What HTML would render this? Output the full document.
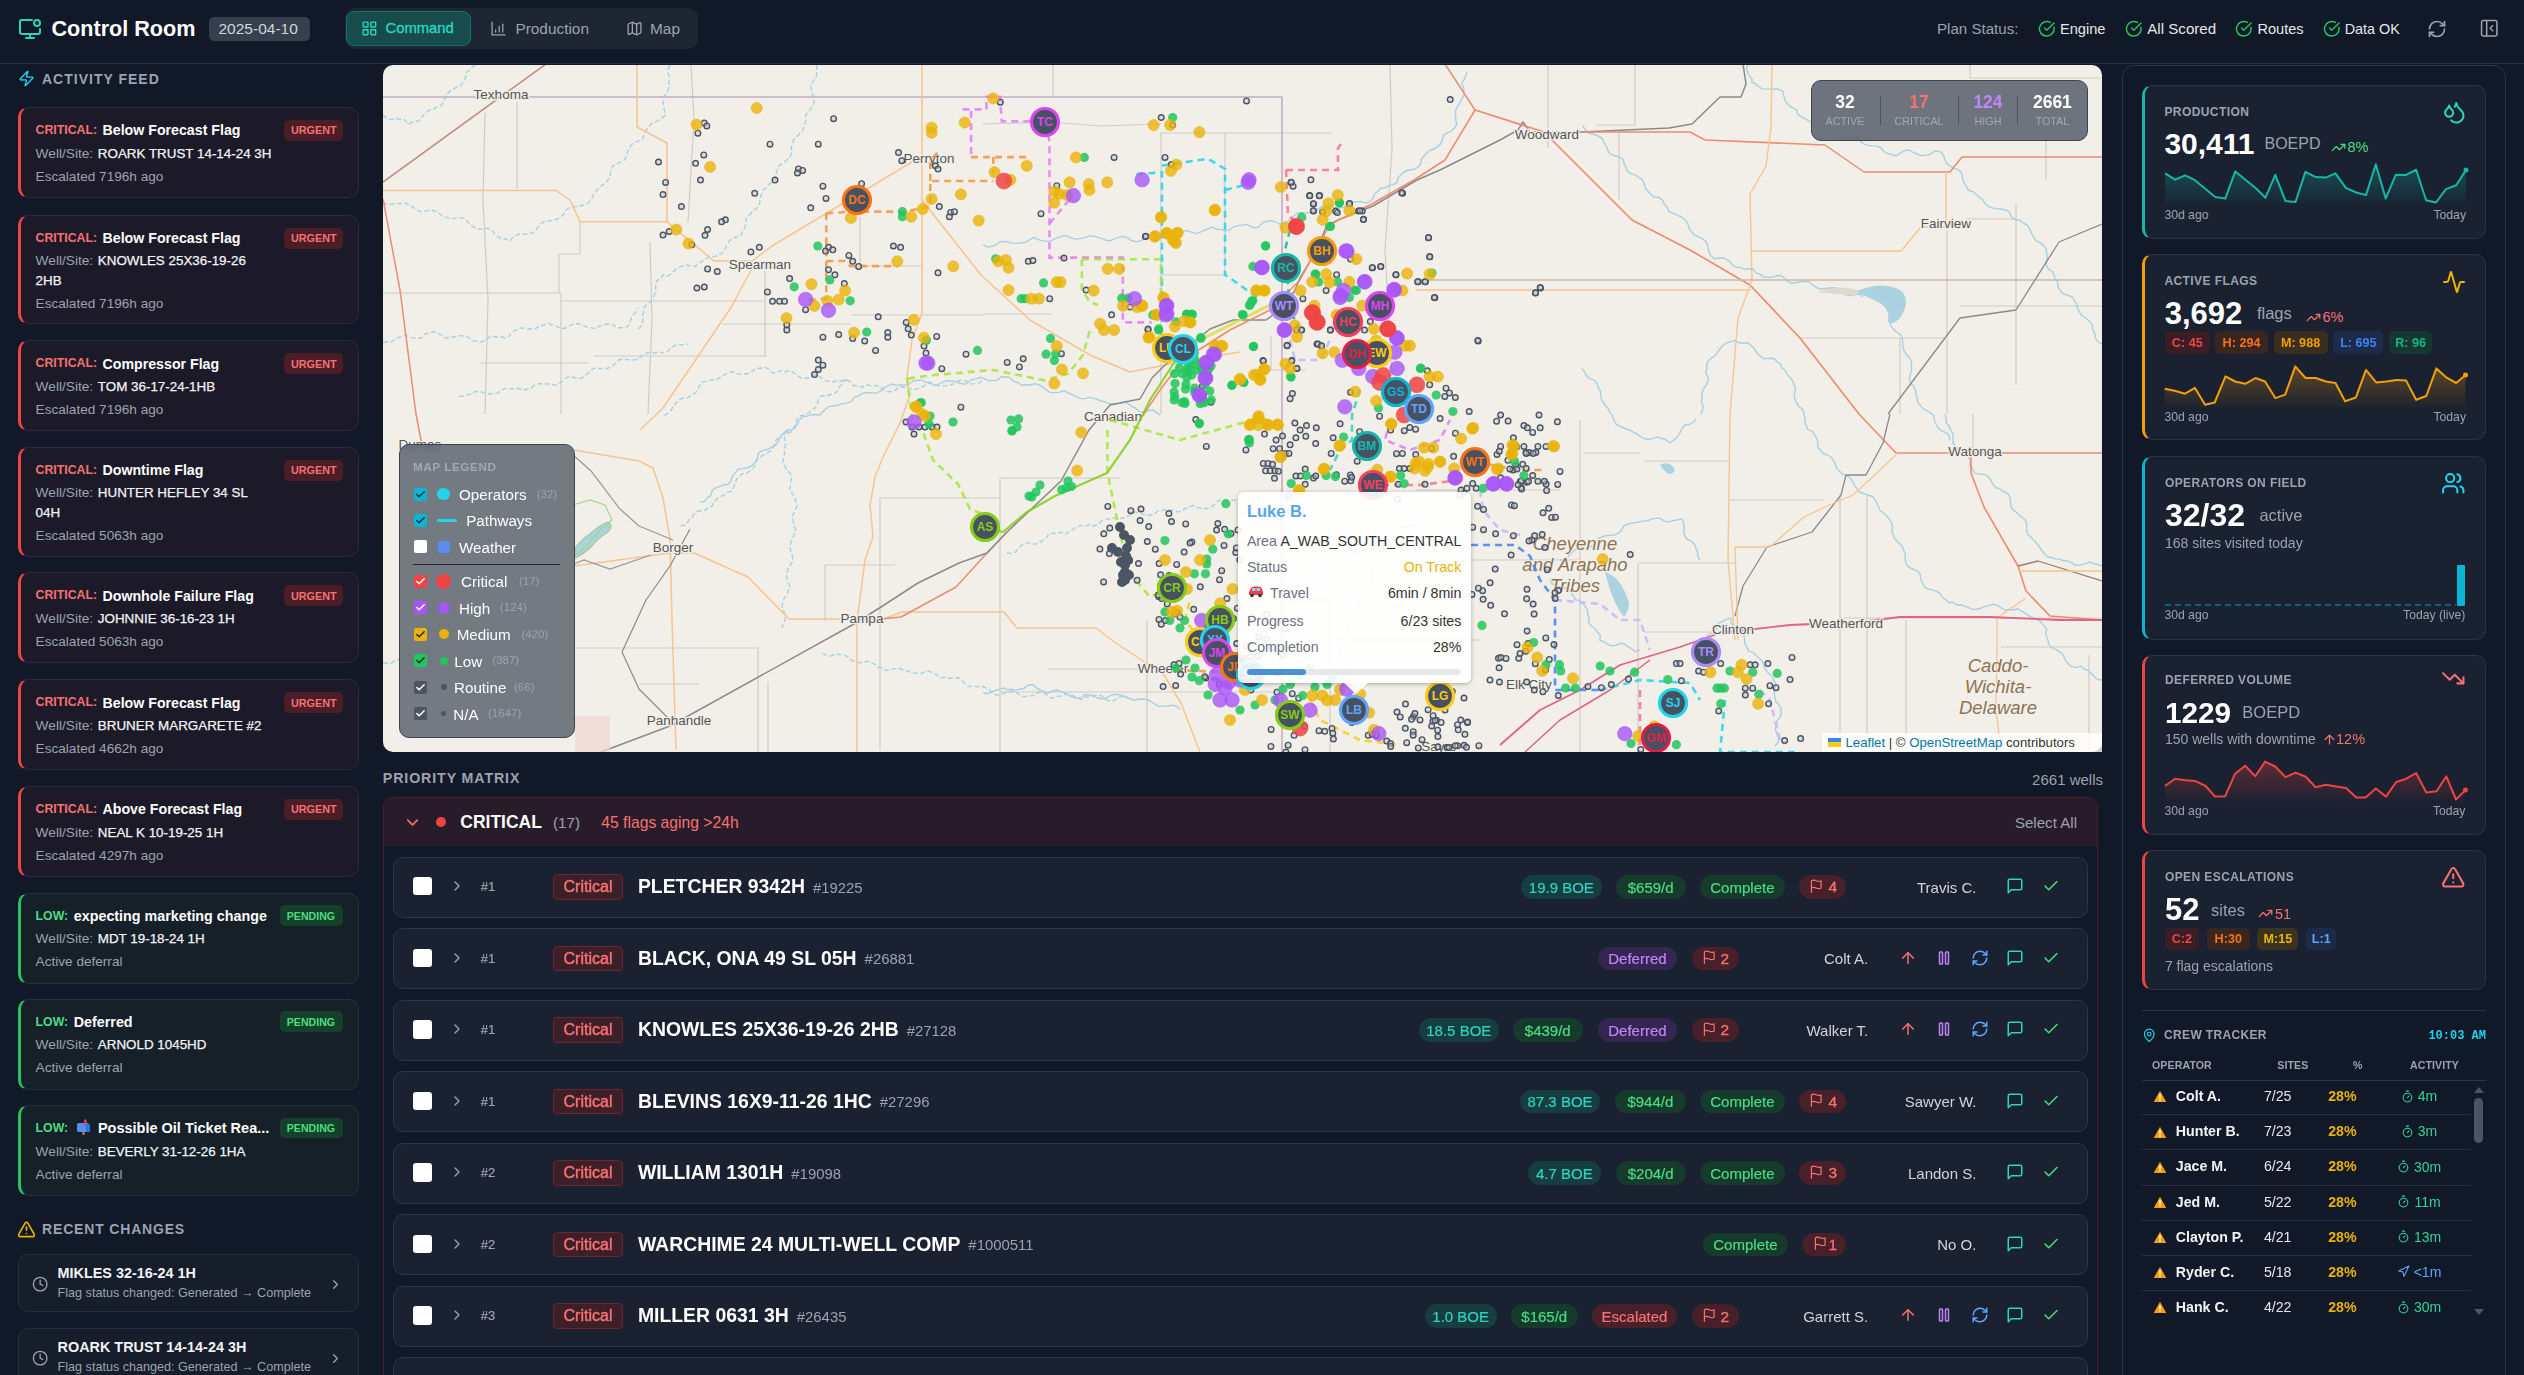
<!DOCTYPE html>
<html><head><meta charset="utf-8"><title>Control Room</title>
<style>
html,body{margin:0;padding:0;}
body{width:2524px;height:1375px;overflow:hidden;background:#111827;position:relative;font-family:'Liberation Sans',sans-serif;}
.t{position:absolute;white-space:nowrap;}
.b{position:absolute;}
</style></head><body>
<svg class="b" style="left:383px;top:65px;border-radius:10px" width="1719" height="687" viewBox="383 65 1719 687"><rect x="383" y="65" width="1719" height="687" fill="#f2efe9"/><polyline points="1638.0,564.0 1638.0,752.0" fill="none" stroke="#d0cbc5" stroke-width="1.2"/><polyline points="1840.0,495.0 1840.0,752.0" fill="none" stroke="#d0cbc5" stroke-width="1.2"/><polyline points="1867.0,495.0 1867.0,752.0" fill="none" stroke="#d0cbc5" stroke-width="1.2"/><polyline points="1906.0,620.0 1906.0,752.0" fill="none" stroke="#d0cbc5" stroke-width="1.2"/><polyline points="1973.0,414.0 1973.0,451.0" fill="none" stroke="#d0cbc5" stroke-width="1.2"/><polyline points="2089.0,655.0 2089.0,752.0" fill="none" stroke="#d0cbc5" stroke-width="1.2"/><polyline points="1644.0,461.0 1730.0,461.0" fill="none" stroke="#d0cbc5" stroke-width="1.2"/><polyline points="1583.0,453.0 1640.0,453.0" fill="none" stroke="#d0cbc5" stroke-width="1.2"/><polyline points="1730.0,500.0 1824.0,500.0" fill="none" stroke="#d0cbc5" stroke-width="1.2"/><polyline points="1638.0,563.0 1735.0,563.0" fill="none" stroke="#d0cbc5" stroke-width="1.2"/><polyline points="1644.0,632.0 1711.0,632.0" fill="none" stroke="#d0cbc5" stroke-width="1.2"/><polyline points="1839.0,618.0 2102.0,618.0" fill="none" stroke="#d0cbc5" stroke-width="1.2"/><polyline points="2001.0,647.0 2102.0,647.0" fill="none" stroke="#d0cbc5" stroke-width="1.2"/><polyline points="1635.0,64.0 1635.0,125.0 1596.0,125.0" fill="none" stroke="#d0cbc5" stroke-width="1.2"/><polyline points="1619.0,133.0 1619.0,199.0" fill="none" stroke="#d0cbc5" stroke-width="1.2"/><polyline points="1947.0,227.0 1947.0,414.0" fill="none" stroke="#d0cbc5" stroke-width="1.2"/><polyline points="2016.0,204.0 2016.0,385.0" fill="none" stroke="#d0cbc5" stroke-width="1.2"/><polyline points="1967.0,219.0 2016.0,219.0" fill="none" stroke="#d0cbc5" stroke-width="1.2"/><polyline points="1799.0,338.0 1944.0,338.0" fill="none" stroke="#d0cbc5" stroke-width="1.2"/><polyline points="1900.0,338.0 1900.0,414.0" fill="none" stroke="#d0cbc5" stroke-width="1.2"/><polyline points="1960.0,306.0 2102.0,306.0" fill="none" stroke="#d0cbc5" stroke-width="1.2"/><polyline points="2046.0,140.0 2046.0,179.0" fill="none" stroke="#d0cbc5" stroke-width="1.2"/><polyline points="1970.0,64.0 1970.0,78.0 2102.0,78.0" fill="none" stroke="#d0cbc5" stroke-width="1.2"/><polyline points="1053.0,64.0 1053.0,97.0" fill="none" stroke="#d0cbc5" stroke-width="1.2"/><polyline points="983.0,124.0 1050.0,122.0 1100.0,126.0 1161.0,124.0" fill="none" stroke="#d0cbc5" stroke-width="1.2"/><polyline points="1161.0,133.0 1161.0,414.0" fill="none" stroke="#d0cbc5" stroke-width="1.2"/><polyline points="1161.0,133.0 1332.0,133.0" fill="none" stroke="#d0cbc5" stroke-width="1.2"/><polyline points="1225.0,133.0 1225.0,275.0" fill="none" stroke="#d0cbc5" stroke-width="1.2"/><polyline points="1161.0,275.0 1225.0,275.0" fill="none" stroke="#d0cbc5" stroke-width="1.2"/><polyline points="1390.0,64.0 1392.0,150.0 1385.0,250.0 1392.0,375.0" fill="none" stroke="#d0cbc5" stroke-width="1.2"/><polyline points="1548.0,64.0 1548.0,148.0" fill="none" stroke="#d0cbc5" stroke-width="1.2"/><polyline points="1271.0,336.0 1271.0,370.0 1306.0,370.0" fill="none" stroke="#d0cbc5" stroke-width="1.2"/><polyline points="983.0,314.0 1052.0,314.0" fill="none" stroke="#d0cbc5" stroke-width="1.2"/><polyline points="485.0,112.0 483.0,200.0 488.0,300.0 485.0,414.0" fill="none" stroke="#d0cbc5" stroke-width="1.2"/><polyline points="517.0,102.0 517.0,189.0" fill="none" stroke="#d0cbc5" stroke-width="1.2"/><polyline points="383.0,293.0 561.0,293.0" fill="none" stroke="#d0cbc5" stroke-width="1.2"/><polyline points="561.0,293.0 561.0,414.0" fill="none" stroke="#d0cbc5" stroke-width="1.2"/><polyline points="561.0,301.0 765.0,301.0" fill="none" stroke="#d0cbc5" stroke-width="1.2"/><polyline points="650.0,242.0 652.0,320.0 648.0,414.0" fill="none" stroke="#d0cbc5" stroke-width="1.2"/><polyline points="691.0,64.0 694.0,120.0 688.0,222.0" fill="none" stroke="#d0cbc5" stroke-width="1.2"/><polyline points="594.0,356.0 767.0,356.0" fill="none" stroke="#d0cbc5" stroke-width="1.2"/><polyline points="765.0,261.0 765.0,357.0" fill="none" stroke="#d0cbc5" stroke-width="1.2"/><polyline points="860.0,217.0 860.0,266.0 923.0,266.0" fill="none" stroke="#d0cbc5" stroke-width="1.2"/><polyline points="722.0,324.0 851.0,324.0" fill="none" stroke="#d0cbc5" stroke-width="1.2"/><polyline points="851.0,315.0 983.0,315.0" fill="none" stroke="#d0cbc5" stroke-width="1.2"/><polyline points="559.0,254.0 559.0,293.0" fill="none" stroke="#d0cbc5" stroke-width="1.2"/><polyline points="559.0,254.0 580.0,254.0 580.0,222.0" fill="none" stroke="#d0cbc5" stroke-width="1.2"/><polyline points="480.0,363.0 589.0,363.0" fill="none" stroke="#d0cbc5" stroke-width="1.2"/><polyline points="880.0,498.0 880.0,750.0" fill="none" stroke="#d0cbc5" stroke-width="1.2"/><polyline points="880.0,498.0 1000.0,498.0" fill="none" stroke="#d0cbc5" stroke-width="1.2"/><polyline points="1000.0,478.0 1000.0,752.0" fill="none" stroke="#d0cbc5" stroke-width="1.2"/><polyline points="1000.0,478.0 1119.0,478.0" fill="none" stroke="#d0cbc5" stroke-width="1.2"/><polyline points="768.0,682.0 768.0,752.0" fill="none" stroke="#d0cbc5" stroke-width="1.2"/><polyline points="574.0,648.0 758.0,648.0 758.0,752.0" fill="none" stroke="#d0cbc5" stroke-width="1.2"/><polyline points="1048.0,669.0 1147.0,669.0" fill="none" stroke="#d0cbc5" stroke-width="1.2"/><polyline points="1147.0,621.0 1147.0,752.0" fill="none" stroke="#d0cbc5" stroke-width="1.2"/><polyline points="1000.0,692.0 1280.0,692.0" fill="none" stroke="#d0cbc5" stroke-width="1.2"/><polyline points="825.0,565.0 825.0,621.0" fill="none" stroke="#d0cbc5" stroke-width="1.2"/><polyline points="825.0,565.0 895.0,565.0" fill="none" stroke="#d0cbc5" stroke-width="1.2"/><polyline points="1283.0,600.0 1330.0,600.0 1330.0,752.0" fill="none" stroke="#d0cbc5" stroke-width="1.2"/><polyline points="1416.0,490.0 1560.0,490.0" fill="none" stroke="#d0cbc5" stroke-width="1.2"/><polyline points="1580.0,420.0 1580.0,752.0" fill="none" stroke="#d0cbc5" stroke-width="1.2"/><polyline points="1470.0,560.0 1580.0,560.0" fill="none" stroke="#d0cbc5" stroke-width="1.2"/><polyline points="1330.0,640.0 1480.0,640.0" fill="none" stroke="#d0cbc5" stroke-width="1.2"/><polyline points="700.3,502.4 704.6,501.3 707.2,497.8 710.8,495.7 712.1,490.6 715.4,488.0 719.5,486.6 723.4,484.9 728.1,484.2 731.0,481.2 732.4,476.3 735.3,472.9 738.0,469.3 742.9,468.6 747.8,467.7 751.8,465.7 754.8,462.6 757.3,458.7 758.5,453.3 762.0,450.6 766.8,449.8 770.6,447.9 774.3,446.0 777.3,443.3 779.3,439.4 781.2,435.5 784.2,432.8 787.2,430.0 792.5,429.8 795.5,427.2 797.6,423.4 799.8,419.5 803.0,416.5 807.2,416.1 811.0,414.7 815.2,414.5 819.8,415.1 822.8,411.7 826.1,408.9 829.4,406.3 833.6,406.0 838.1,405.2 842.3,403.6 846.9,403.1 851.2,401.7 854.3,397.4 858.5,395.9 862.3,393.4 866.9,392.7 871.5,392.9 876.0,393.1 880.0,391.4 883.6,387.7 887.6,386.1 891.6,384.0 896.4,385.4 900.7,384.6 905.4,385.3 908.9,384.2 913.2,381.0 917.4,380.2 921.7,380.1 925.8,382.4 930.0,382.2 934.1,385.5 938.4,384.5 942.6,382.1 946.8,380.9 950.8,381.0 955.0,381.4 959.4,383.0 963.8,384.3 967.8,382.6 971.7,379.7 975.8,378.9 979.9,377.5 984.2,378.4 988.7,380.8 992.8,380.5 997.0,380.4 1001.2,377.0 1005.7,376.8 1009.9,377.5 1013.4,381.4 1017.6,382.4 1021.3,385.3 1025.8,384.8 1030.2,385.0 1034.9,383.6 1039.0,384.8 1042.9,387.1 1046.5,390.2 1050.4,392.6 1054.8,392.6 1059.3,392.4 1064.2,390.5 1068.1,392.8 1072.1,394.7 1076.0,396.7 1080.1,398.4 1084.4,398.9 1089.2,397.4 1093.2,398.1 1097.6,399.5 1102.0,401.3 1106.4,402.5 1110.8,403.8 1115.4,403.7 1119.9,403.4 1124.7,402.0 1128.4,403.9 1132.0,406.5 1135.8,408.4 1139.2,411.6 1143.4,412.3 1148.2,410.7 1152.8,409.8 1156.4,412.6 1160.0,415.0" fill="none" stroke="#a8d0e2" stroke-width="1.4" stroke-linejoin="round"/><polyline points="383.1,114.7 386.5,118.4 390.7,119.7 395.9,118.4 400.2,119.4 404.8,119.8 408.2,124.3 411.8,122.2 416.2,121.5 420.2,119.9 422.7,115.7 425.8,112.6 429.3,110.2 433.4,109.4 436.6,106.9 441.2,105.8 443.2,102.2 444.9,98.2 446.6,94.3 449.4,91.4 452.9,89.2 456.6,87.2 460.8,85.7 463.5,82.0 465.5,77.8 466.3,72.5 470.0,69.7 473.0,66.4 477.0,64.0" fill="none" stroke="#a8d0e2" stroke-width="1.4" stroke-dasharray="5 2.5" stroke-linejoin="round"/><polyline points="382.9,201.7 386.6,204.6 391.1,204.4 395.7,203.5 400.1,203.6 404.7,202.8 408.6,205.1 412.6,206.8 416.4,209.8 420.3,211.6 424.9,211.3 429.8,209.9 434.1,210.7 438.2,212.2 441.8,215.9 445.9,217.2 450.0,218.8 454.7,218.4 459.5,217.8 464.0,218.1 467.3,221.2 470.3,224.9 474.0,227.2 478.0,228.7 482.3,229.3 487.3,228.2 491.4,229.6 494.4,233.4 497.7,236.3 501.2,239.0 505.8,238.9 510.4,241.0 512.9,236.5 516.7,235.2 520.5,233.7 525.1,234.3 529.2,233.7 533.1,232.6 536.3,229.5 539.2,225.8 542.4,222.5 546.4,220.6 551.6,220.9 555.9,219.5 559.9,217.8 563.2,214.7 565.6,210.0 569.4,207.8 573.9,206.8 579.1,206.3 583.8,204.8 588.3,202.9 591.6,198.7 593.5,194.8 596.0,191.3 599.0,188.2 602.2,185.1 606.4,182.9 608.4,179.0 610.2,175.0 610.6,169.9 612.6,166.2 616.6,164.3 620.3,162.1 624.3,160.2 626.4,156.6 627.5,152.3 629.1,148.4 631.4,145.0 634.4,142.3 638.8,140.8 643.0,138.7 644.5,134.0 646.5,129.8 649.3,126.3 652.3,123.0 656.8,121.3 660.8,119.0 665.4,115.4 664.5,110.9 663.8,106.4 663.2,102.0 663.2,97.6 666.1,93.7 668.4,89.7 669.2,85.5 668.6,81.0 669.3,76.8 667.8,72.2 668.4,67.9 671.0,64.0" fill="none" stroke="#a8d0e2" stroke-width="1.4" stroke-dasharray="5 2.5" stroke-linejoin="round"/><polyline points="638.0,329.0 641.6,325.8 642.8,321.6 642.5,316.8 643.2,312.4 643.9,308.0 646.7,304.5 650.7,301.4 653.1,297.7 654.9,294.0 655.8,289.8 655.6,285.0 656.5,280.8 660.9,278.5 663.0,274.9 667.8,276.0 671.4,273.9 674.5,270.2 678.0,267.5 681.9,266.2 685.9,265.0 690.7,265.9 695.3,266.6 698.6,263.4 702.2,261.2 705.8,258.7 709.3,256.2 713.8,256.7 718.1,255.4 721.7,253.2 724.4,249.9 726.4,245.9 728.7,242.2 731.3,238.9 735.4,237.2 740.6,235.9 742.5,232.1 744.6,228.4 745.9,224.2 745.8,219.2 748.6,215.9 751.5,212.7 754.8,209.7 758.4,206.9 759.7,202.7 760.0,197.9 761.7,194.0 763.4,189.9 766.9,187.3 769.3,183.9 773.0,181.4 775.7,178.3 776.0,173.5 777.4,169.4 779.0,165.6 782.8,163.1 786.5,160.6 789.4,157.5 791.6,153.8 791.2,148.7 792.3,144.4 793.5,140.2 796.5,136.8 799.7,133.5 802.9,130.3 804.6,126.3 805.6,121.9 805.3,116.9 807.1,112.9 809.9,109.9 812.3,105.9 814.6,101.9 813.6,97.6 812.1,93.2 811.1,88.8 810.8,84.6 813.5,80.7 816.2,76.7 816.9,72.6 817.0,68.3 816.0,64.0" fill="none" stroke="#a8d0e2" stroke-width="1.4" stroke-dasharray="5 2.5" stroke-linejoin="round"/><polyline points="383.2,342.5 387.4,341.8 391.8,342.1 395.6,338.4 399.8,337.0 403.9,335.2 408.3,336.1 412.9,337.9 417.3,338.5 421.5,337.8 425.3,333.7 429.6,333.3 434.3,331.5 438.4,333.9 442.5,335.3 446.4,338.1 450.9,337.0 455.3,336.9 459.8,335.6 464.0,336.0 468.2,337.2 472.1,340.6 476.3,341.3 480.5,342.0 484.8,340.5 488.3,337.7 492.1,336.0 496.6,337.0 500.9,337.0 505.3,337.7 509.1,336.1 512.2,332.2 515.9,330.1 519.6,328.3 523.8,327.9 528.4,329.3 532.5,328.6 536.0,328.3 540.2,325.6 544.5,324.9 548.8,323.1 553.0,325.5 557.2,326.7 561.5,328.6 565.8,328.0 570.0,325.3 574.2,323.9 578.5,323.5 582.8,325.2 587.0,327.2 591.3,327.9 595.6,328.4 599.9,325.9 604.2,324.6 608.5,324.0 612.8,324.5 617.1,327.7 621.4,327.7 625.7,327.5 628.8,325.5 630.4,320.8 632.1,316.1 635.6,312.3 638.0,308.0" fill="none" stroke="#a8d0e2" stroke-width="1.4" stroke-dasharray="5 2.5" stroke-linejoin="round"/><polyline points="459.1,396.3 463.4,396.3 467.6,395.0 471.7,393.3 475.8,391.5 480.1,391.4 484.5,392.9 488.9,393.8 493.2,393.7 497.4,393.1 501.4,390.1 505.5,388.3 509.8,388.9 514.2,388.7 518.5,388.4 523.0,389.8 527.3,389.2 531.4,387.9 535.3,384.5 539.5,383.6 543.9,383.8 548.2,384.0 552.7,384.7 557.1,385.1 561.1,382.4 564.4,379.3 567.9,376.9 572.2,377.0 576.7,378.0 581.1,378.3 584.7,376.3 587.9,373.0 591.2,370.2 594.8,368.2 599.1,368.2 603.5,368.8 607.6,368.3 611.4,367.0 614.8,364.1 617.9,360.5 621.7,359.2 626.1,359.6 630.4,359.9 634.7,359.8 638.6,359.3 642.1,355.6 646.0,353.5 650.1,352.1 654.8,353.0 658.9,351.7 663.7,353.1 667.7,351.5 671.2,347.7 674.9,345.1 679.3,344.8 683.8,344.9 688.0,344.0" fill="none" stroke="#a8d0e2" stroke-width="1.4" stroke-dasharray="5 2.5" stroke-linejoin="round"/><polyline points="664.1,415.5 667.8,413.4 670.9,410.6 673.3,406.7 676.0,403.3 678.7,399.8 682.6,398.1 687.5,397.8 691.2,395.6 694.8,393.4 697.5,390.0 699.6,385.8 702.1,382.1 706.7,381.3 710.9,379.9 714.4,379.8 718.6,378.6 722.5,375.9 726.5,373.7 730.6,371.8 735.1,372.9 739.7,374.3 744.0,374.0 748.3,373.5 752.3,371.1 756.2,368.3 760.5,368.3 765.3,367.1 769.0,369.5 772.6,372.9 776.8,372.5 781.2,370.4 785.1,371.7 789.4,370.6 793.2,372.5 796.9,374.8 800.5,377.9 804.6,378.5 808.8,377.8 813.3,375.5 817.5,375.0 821.2,377.7 824.8,380.3 828.8,381.4 832.8,381.7 837.1,380.8 841.1,381.1 845.7,379.9 849.8,381.4 853.5,385.5 857.8,386.1 862.0,387.1 866.7,384.6 870.9,385.7 875.3,385.6 879.5,386.2 883.3,389.9 887.4,391.6 892.2,391.7 896.1,389.5 900.0,386.5 904.3,387.3 908.5,387.5 912.9,390.0 917.0,388.9 921.1,388.0 925.0,385.2 928.9,383.2 933.2,383.9 937.6,385.6 941.8,386.0 945.9,385.6 950.1,385.0 954.1,383.7 958.0,381.0 962.1,379.9 966.4,381.1 970.9,383.9 975.0,383.6 979.1,383.0 983.0,380.0" fill="none" stroke="#a8d0e2" stroke-width="1.4" stroke-dasharray="5 2.5" stroke-linejoin="round"/><polyline points="983.0,244.9 987.5,247.1 991.7,246.3 995.9,245.0 999.8,241.7 1004.1,241.4 1008.5,242.3 1012.8,243.1 1017.2,243.4 1021.4,243.0 1025.6,242.2 1029.7,239.6 1033.8,237.4 1038.2,239.5 1042.6,240.9 1046.9,241.2 1051.1,240.9 1055.2,238.7 1059.4,237.2 1063.6,235.6 1067.9,236.4 1072.3,238.3 1076.6,239.1 1080.8,238.4 1085.0,237.6 1089.3,235.9 1093.6,236.1 1097.8,237.4 1102.0,238.7 1106.1,240.2 1110.4,240.8 1114.8,238.6 1119.1,237.1 1123.4,236.3 1127.6,237.6 1131.7,240.7 1136.3,241.9 1140.5,240.9 1144.5,238.6 1148.4,235.7 1152.8,235.9 1157.0,235.1 1161.8,238.2 1165.9,236.4 1170.2,236.2 1174.2,233.7 1178.2,231.6 1182.5,231.2 1186.9,230.6 1191.3,232.2 1195.8,233.7 1199.9,232.4 1204.0,230.5 1208.1,228.7 1212.3,227.1 1216.8,229.4 1221.1,229.4 1225.5,231.0 1229.7,229.8 1233.7,226.8 1237.8,225.6 1241.9,225.1 1246.0,224.2 1250.4,226.4 1254.7,227.8 1258.7,227.1 1262.4,222.7 1266.4,221.5 1270.4,220.7 1274.7,221.5 1279.1,224.0 1283.6,223.3 1287.4,221.7 1290.7,218.6 1294.1,215.9 1297.4,212.9 1301.9,212.7 1306.6,213.1 1310.8,212.2 1314.2,210.4 1318.3,209.1 1322.3,206.1 1326.5,205.5 1330.8,205.2 1335.5,208.3 1339.8,207.8 1344.1,207.3 1347.8,203.2 1352.1,202.4 1356.3,201.8 1360.6,201.4 1365.8,203.1 1369.7,201.5 1372.9,198.8 1374.6,194.0 1377.8,191.3 1380.8,188.3 1385.4,187.7 1388.9,185.4 1393.5,184.6 1396.9,182.3 1398.4,177.2 1401.4,174.2 1404.6,171.5 1408.6,170.0 1413.4,169.5 1417.6,167.6 1420.4,164.5 1421.3,159.6 1423.7,156.2 1426.5,153.1 1429.8,150.5 1434.1,149.0 1437.6,146.6 1440.7,143.9 1442.3,139.7 1443.6,135.1 1447.3,132.9 1451.2,131.1 1454.5,128.1 1456.8,124.4 1455.9,120.0 1455.5,115.7 1455.4,111.5 1456.7,107.6 1459.3,103.9 1461.0,100.1 1463.8,96.6 1463.9,92.4 1463.7,88.1 1461.7,83.4 1464.0,79.7 1465.8,75.9 1467.0,72.0" fill="none" stroke="#a8d0e2" stroke-width="1.4" stroke-linejoin="round"/><polyline points="1582.6,125.4 1585.4,129.8 1588.9,133.4 1594.5,134.5 1599.4,136.6 1602.6,139.2 1604.3,143.2 1606.6,146.6 1608.0,151.0 1610.7,154.1 1614.7,155.8 1619.3,157.0 1623.1,159.0 1624.1,163.6 1625.8,167.6 1627.4,171.6 1631.0,173.7 1635.5,175.0 1638.7,177.5 1642.3,179.6 1644.1,183.5 1645.2,187.9 1647.9,191.0 1650.6,194.0 1653.6,196.7 1658.4,197.3 1662.1,199.6 1664.2,203.9 1667.1,207.2 1669.0,211.6 1673.2,213.3 1677.3,215.2 1681.5,217.0 1684.9,219.6 1687.6,223.1 1689.1,227.8 1691.3,231.5 1694.2,234.8 1698.4,236.9 1702.8,238.9 1706.2,241.8 1707.9,246.0 1708.8,250.8 1710.4,255.2 1714.3,258.7 1718.8,258.2 1723.3,257.8 1726.9,259.6 1730.2,262.1 1733.1,265.6 1736.8,267.2 1741.0,267.5 1744.5,269.4 1749.0,268.8 1753.2,269.2 1756.0,272.8 1759.9,274.1 1763.5,276.9 1767.6,277.3 1771.8,277.3 1776.4,275.6 1780.5,275.7 1784.2,277.9 1787.7,281.1 1791.4,283.3 1795.7,282.8 1800.1,281.8 1804.4,281.3 1808.6,281.5 1812.1,284.6 1815.7,286.9 1819.3,289.1 1823.6,288.5 1827.8,288.2 1832.0,287.8 1836.2,287.9 1839.6,290.9 1843.2,293.2 1846.9,295.1 1850.8,295.9 1855.4,294.1 1859.5,294.3 1863.0,297.0" fill="none" stroke="#a8d0e2" stroke-width="1.4" stroke-linejoin="round"/><polyline points="1748.3,64.0 1746.3,68.3 1747.7,72.2 1749.5,76.0 1752.4,79.7 1751.5,82.2 1755.2,83.7 1758.6,86.5 1762.1,88.9 1766.2,89.1 1770.3,89.1 1774.5,88.9 1778.6,89.3 1782.9,91.4 1783.9,96.2 1785.3,100.8 1788.0,104.5 1791.9,107.4 1796.6,109.8 1797.5,113.7 1801.0,116.7 1804.9,118.7 1808.8,121.0 1812.6,123.2 1817.2,123.4 1822.3,122.0 1826.6,123.0 1830.0,126.5 1833.7,129.1 1837.3,131.6 1840.7,134.3 1845.7,133.6 1850.6,133.1 1854.0,135.6 1858.0,137.3 1860.6,141.7 1864.1,144.1 1868.2,145.4 1872.6,145.9 1877.2,146.2 1881.0,148.0 1884.0,151.5 1888.0,153.8 1892.2,154.6 1896.5,155.7 1900.8,152.8 1905.0,150.5 1909.2,150.1 1913.5,152.5 1917.8,154.5 1922.0,155.7 1926.2,155.1 1930.5,154.2 1934.8,151.0 1940.3,151.7 1943.3,154.7 1944.7,159.3 1946.6,163.4 1949.8,166.2 1953.9,168.1 1958.6,169.8 1961.6,173.0 1962.5,177.8 1963.7,182.4 1966.2,185.9 1968.1,190.0 1973.1,191.8 1976.4,194.7 1979.0,196.9 1982.5,199.2 1985.1,203.7 1988.5,206.3 1992.4,207.9 1996.6,208.9 2001.2,209.0 2005.3,210.0 2009.1,211.8 2011.4,216.8 2014.0,219.0 2019.1,220.2 2022.8,222.7 2026.9,224.8 2029.5,228.5 2031.3,233.0 2033.5,237.0 2036.0,240.7 2039.8,242.4 2043.5,245.4 2046.2,248.7 2046.6,252.8 2047.4,256.8 2046.2,261.4 2046.4,265.6 2048.5,269.2 2052.8,271.9 2054.2,275.7 2055.5,278.7 2057.5,282.4 2058.3,287.3 2060.5,291.0 2063.5,293.9 2068.1,295.3 2072.3,297.2 2074.6,300.8 2076.8,304.3 2077.6,308.9 2079.7,312.6 2082.4,316.0 2086.6,318.4 2089.7,321.4 2092.2,324.9 2092.6,329.7 2094.8,333.4 2095.4,338.1 2097.8,341.6 2102.0,344.0" fill="none" stroke="#a8d0e2" stroke-width="1.4" stroke-linejoin="round"/><polyline points="1890.1,321.5 1890.7,325.6 1893.1,328.9 1896.4,331.8 1900.4,334.3 1902.1,338.0 1902.8,342.1 1902.9,346.5 1903.9,350.6 1906.0,354.0 1908.9,357.0 1911.1,361.0 1911.6,365.3 1911.6,369.5 1910.4,374.0 1909.3,378.4 1910.3,382.6 1913.6,386.5 1915.7,390.5 1915.6,393.8 1917.1,397.7 1917.8,402.3 1920.4,405.4 1922.9,408.6 1926.8,410.6 1930.4,412.9 1933.8,415.5 1934.4,420.4 1936.2,424.3 1938.3,427.9 1941.4,430.8 1945.9,432.6 1948.9,435.6 1950.0,440.0" fill="none" stroke="#a8d0e2" stroke-width="1.4" stroke-linejoin="round"/><polyline points="1581.4,368.1 1584.2,371.4 1586.2,375.3 1589.3,378.4 1594.1,380.2 1597.0,383.4 1598.5,387.7 1600.5,391.5 1600.7,395.6 1601.9,400.4 1604.7,404.7 1608.3,408.8 1609.7,411.9 1612.4,415.7 1614.2,420.5 1616.6,424.6 1620.8,426.6 1625.0,428.5 1629.5,430.0 1632.4,431.6 1636.3,433.6 1640.1,436.3 1643.9,438.5 1648.1,439.2 1652.4,438.6 1657.0,436.8 1661.0,438.2 1665.1,439.3 1670.4,442.8 1673.7,439.8 1677.1,437.2 1679.7,433.4 1681.7,429.0 1684.3,425.3 1689.3,424.5 1693.2,422.5 1696.0,419.0" fill="none" stroke="#a8d0e2" stroke-width="1.4" stroke-linejoin="round"/><polyline points="1701.0,414.2 1702.5,410.2 1703.2,406.2 1701.4,401.7 1702.0,397.6 1701.9,393.3 1703.2,389.4 1705.7,385.6 1707.8,381.8 1708.4,377.7 1705.8,373.0 1706.8,369.0 1706.6,364.8 1708.2,360.9 1710.9,358.3 1714.4,356.1 1717.1,353.1 1719.5,349.5 1722.1,346.2 1725.2,343.7 1728.9,341.9 1733.3,341.2 1734.6,340.2 1738.2,342.5 1742.6,343.3 1748.0,342.8 1751.1,345.8 1754.4,348.6 1756.8,352.7 1760.0,355.8 1763.3,358.6 1768.3,358.5 1773.5,358.2 1776.6,361.2 1780.1,363.9 1782.3,368.5 1784.7,369.8 1786.7,373.6 1789.9,377.1 1792.6,380.8 1794.1,384.8 1795.6,388.9 1794.3,393.8 1794.6,398.3 1796.4,402.2 1798.5,406.1 1802.7,409.2 1803.7,413.1 1804.8,417.1 1804.8,421.6 1806.3,425.4 1807.4,429.3 1812.1,431.4 1814.5,434.7 1816.6,438.2 1817.9,442.0 1817.6,447.2 1820.6,450.0 1822.8,453.4 1827.1,455.0 1830.9,457.0 1833.4,460.2 1835.2,464.0 1836.7,468.0 1839.5,470.9 1842.1,474.1 1846.5,475.5 1850.1,477.6 1852.3,481.2 1854.3,484.6 1856.7,488.6 1859.5,492.0 1863.7,493.7 1868.0,495.0 1872.2,496.5 1874.9,499.5 1876.9,503.1 1878.5,507.2 1880.3,511.0 1883.4,512.7 1886.6,515.8 1889.3,519.0 1891.3,522.6 1892.6,526.5 1891.7,531.3 1893.3,535.1 1894.9,538.9 1897.9,542.0 1901.3,545.3 1903.3,549.4 1905.1,553.5 1905.3,558.4 1905.8,563.1 1908.6,567.2 1912.9,569.0 1917.0,570.9 1920.0,573.8 1920.7,578.8 1922.3,582.9 1924.3,586.7 1927.9,589.1 1932.6,589.9 1936.4,591.3 1939.9,593.2 1942.4,597.2 1945.7,599.6 1948.7,602.5 1953.4,602.3 1956.5,605.0 1961.2,604.8 1963.9,605.9 1968.1,607.3 1972.3,609.5 1976.4,609.2 1980.5,608.3 1984.5,606.6 1988.6,605.9 1992.7,604.2 1996.8,605.1 2000.5,607.5 2004.3,609.9 2008.9,609.7 2013.4,609.7 2018.2,609.0 2022.0,611.1 2025.8,613.7 2029.5,616.2 2033.5,618.0 2036.8,618.6 2040.9,621.8 2043.6,625.6 2046.7,629.2 2045.8,634.8 2047.7,639.0 2048.8,644.1 2051.7,647.6 2056.1,649.7 2060.3,652.1 2063.2,655.5 2065.2,659.6 2067.8,663.6 2071.2,666.3 2075.2,667.7 2080.8,666.1 2084.0,669.1 2088.0,670.5 2091.3,673.2 2094.2,676.8 2097.5,679.5 2102.0,680.0" fill="none" stroke="#a8d0e2" stroke-width="1.4" stroke-linejoin="round"/><polyline points="1944.9,414.4 1946.2,418.5 1946.2,422.8 1949.4,426.5 1950.9,430.6 1953.6,434.3 1952.8,438.4 1953.2,443.1 1955.2,446.6 1958.5,449.1 1960.7,452.5 1964.7,454.5 1968.1,456.9 1970.3,460.3 1970.1,465.4 1972.4,468.7 1974.5,473.1 1979.2,474.0 1984.2,474.4 1988.0,476.4 1990.8,480.0 1992.9,484.5 1995.9,487.8 1999.8,488.8 2003.0,491.5 2007.6,493.4 2009.8,496.8 2010.4,501.2 2010.8,505.8 2012.6,509.6 2016.1,512.1 2019.1,515.0 2022.5,517.6 2025.5,520.5 2026.7,524.7 2026.5,529.8 2027.5,534.2 2031.2,537.4 2034.3,540.9 2037.5,544.3 2039.2,546.6 2041.7,550.5 2044.6,553.8 2047.6,556.7 2051.7,557.5 2055.5,558.9 2059.8,559.4 2063.2,560.5 2067.5,561.0 2071.7,562.8 2075.8,565.3 2080.2,564.9 2084.7,564.1 2089.3,561.9 2093.5,563.5 2097.8,564.5 2102.0,566.0" fill="none" stroke="#a8d0e2" stroke-width="1.4" stroke-linejoin="round"/><polyline points="1706.5,635.8 1710.2,633.5 1714.5,632.1 1716.8,627.8 1718.8,623.1 1722.8,621.3 1726.6,619.1 1730.6,618.2 1731.3,622.6 1733.4,626.2 1738.2,628.2 1740.8,631.4 1743.7,634.5 1744.6,638.8 1744.7,643.5 1746.8,647.1 1748.8,651.1 1753.4,652.6 1756.4,655.7 1759.6,658.5 1762.6,661.5 1763.9,666.1 1765.9,669.9 1767.7,672.6 1771.4,676.0 1773.7,679.8 1776.0,683.6 1774.8,688.3 1774.1,692.9 1774.8,697.2 1775.9,701.3 1779.0,704.8 1781.1,709.2 1781.2,713.3 1780.1,717.4 1776.9,721.1 1776.2,725.2 1775.3,729.3 1776.8,733.7 1778.6,738.1 1778.2,742.2 1775.0,746.0" fill="none" stroke="#a8d0e2" stroke-width="1.4" stroke-linejoin="round"/><polyline points="788.2,429.7 786.0,433.4 784.2,437.3 785.4,442.2 785.4,446.7 783.9,449.5 784.6,453.5 783.6,458.0 782.6,462.4 784.6,466.1 786.5,469.8 789.8,473.1 791.6,476.8 790.8,481.2 790.6,485.4 789.3,490.0 792.4,493.4 794.6,497.0 795.6,500.9 797.4,505.1 795.6,509.0 793.9,512.9 792.0,516.7 793.4,520.9 793.4,524.9 795.6,529.2 794.5,533.1 793.3,537.1 791.5,540.9 790.3,544.8 790.1,548.9 791.2,553.0 792.6,557.2 792.9,561.3 790.2,565.0 788.1,568.9 786.9,572.7 786.7,577.0 787.6,581.4 790.0,586.0 788.5,590.1 787.3,594.3 784.2,598.2 782.7,602.3 782.1,606.5 783.8,611.0 784.8,615.5 785.1,619.8 783.1,623.8 782.0,628.0" fill="none" stroke="#a8d0e2" stroke-width="1.4" stroke-dasharray="5 2.5" stroke-linejoin="round"/><polyline points="680.4,525.7 685.0,525.2 687.7,521.8 690.3,518.3 693.3,515.4 695.8,511.9 700.0,510.8 704.7,510.4 708.2,508.3 711.8,506.3 714.0,502.2 716.7,499.0 720.0,497.0 723.9,495.2 726.8,492.4 731.4,491.4 733.5,487.8 735.2,483.9 736.5,479.5 739.1,476.4 742.3,473.9 747.0,473.0 750.3,470.6 753.5,468.2 755.4,464.4 756.7,460.1 759.6,457.3 763.2,455.2 766.8,453.1 770.5,451.2 773.0,448.0 774.3,443.6 776.3,440.0 779.0,437.0 782.2,434.5 786.8,433.5 790.9,432.0 793.5,428.4 795.8,424.6 796.9,419.5 799.4,416.0 804.6,415.1 808.6,413.0 811.8,410.1 815.4,407.7 817.3,403.4 819.0,398.5 821.9,395.6 826.8,395.8 830.8,394.5 834.8,393.4 837.9,390.7 839.8,386.3 842.9,383.7 845.2,380.0 850.0,380.0" fill="none" stroke="#a8d0e2" stroke-width="1.4" stroke-dasharray="5 2.5" stroke-linejoin="round"/><polyline points="1006.9,552.8 1011.7,553.6 1015.5,552.0 1018.5,548.3 1021.7,545.0 1025.6,543.7 1029.5,542.4 1034.7,544.3 1038.6,543.0 1042.2,540.7 1045.9,538.8 1048.5,534.0 1052.5,533.1 1057.2,533.8 1061.0,532.1 1065.8,533.9 1069.5,531.4 1073.3,529.4 1076.9,526.6 1080.9,525.4 1085.3,525.9 1089.3,524.6 1094.0,526.0 1097.9,524.3 1101.4,521.1 1105.3,519.6 1109.4,518.8 1113.5,517.8 1118.1,519.0 1122.2,518.3 1126.2,517.1 1130.0,515.1 1133.7,511.8 1137.8,512.6 1142.0,513.8 1146.2,515.0 1150.2,515.2 1154.2,514.2 1157.9,511.0 1161.9,510.6 1165.8,509.8 1169.9,510.0 1174.0,510.3 1178.2,512.1 1182.1,510.6 1185.9,508.2 1189.8,506.4 1193.7,505.7 1197.9,507.7 1202.5,508.4 1207.0,508.6 1211.0,506.8 1214.9,504.4 1218.4,500.4 1222.9,500.6 1227.3,500.6 1231.6,500.1 1236.2,500.6 1240.0,498.0" fill="none" stroke="#a8d0e2" stroke-width="1.4" stroke-dasharray="5 2.5" stroke-linejoin="round"/><polyline points="822.7,653.0 826.4,655.4 830.5,656.0 835.1,654.5 839.4,654.5 843.5,654.8 847.4,656.6 850.8,660.0 854.6,661.7 858.6,662.7 862.9,662.5 867.4,661.2 871.3,662.8 875.2,664.4 878.7,667.4 882.7,668.2 886.3,670.7 891.0,668.9 895.3,668.9 899.7,668.5 903.8,670.3 908.0,671.1 912.1,673.0 916.4,673.1 920.6,673.9 925.2,671.5 929.5,671.3 933.5,673.6 937.7,675.2 941.1,677.6 945.6,677.3 949.6,678.3 954.1,677.8 958.5,677.8 962.0,680.3 965.2,683.9 968.7,686.6 973.1,686.3 977.4,686.6 981.8,686.4 985.7,687.8 989.4,689.8 992.9,693.6 996.8,695.0 1000.9,694.4 1005.0,692.6 1009.1,691.8 1013.1,691.0 1017.0,692.8 1020.9,696.0 1024.8,696.6 1028.9,695.8 1032.9,695.6 1037.1,692.7 1041.2,692.2 1045.1,693.6 1048.9,696.2 1052.8,698.4 1057.0,696.5 1061.0,695.9 1065.2,694.0 1069.2,694.6 1073.2,695.8 1077.2,697.4 1081.2,699.7 1085.3,697.3 1089.4,697.1 1093.5,696.1 1097.6,694.9 1101.7,696.0 1105.6,699.7 1109.6,701.0 1113.7,700.8 1117.9,697.8 1122.0,696.4 1126.0,696.5 1130.0,699.0" fill="none" stroke="#a8d0e2" stroke-width="1.4" stroke-dasharray="5 2.5" stroke-linejoin="round"/><polyline points="383.1,662.7 387.3,663.3 391.3,663.2 395.2,660.7 399.1,659.1 403.1,657.7 407.3,659.0 411.4,659.0 415.8,660.9 419.7,659.2 423.6,656.9 427.5,655.3 431.6,655.3 435.7,655.4 440.0,657.0 444.1,657.2 447.6,656.3 452.3,656.0 457.0,656.0 461.2,657.1 465.4,658.6 468.9,662.4 472.9,664.6 477.2,665.8 482.0,665.0" fill="none" stroke="#a8d0e2" stroke-width="1.4" stroke-dasharray="5 2.5" stroke-linejoin="round"/><polyline points="983.1,692.7 987.3,693.7 991.3,692.0 995.2,690.7 999.2,689.3 1003.2,688.0 1007.5,689.7 1011.6,689.2 1015.8,690.4 1019.8,689.2 1023.9,688.4 1027.7,685.5 1032.5,684.5 1036.1,687.7 1039.9,690.2 1043.9,691.2 1047.8,693.1 1052.4,691.0 1056.9,690.0 1060.9,691.4 1064.9,692.7 1068.6,695.3 1072.5,697.1 1076.5,698.1 1081.0,698.2 1085.1,694.5 1089.2,695.0 1093.2,695.4 1097.3,698.3 1101.4,698.8 1105.5,698.3 1109.6,696.1 1113.7,694.6 1117.8,694.3 1121.8,695.4 1125.9,697.1 1129.6,698.5 1133.6,700.2 1138.3,699.2 1142.7,699.0 1147.0,699.5 1151.0,701.5 1154.8,703.8 1158.6,706.4 1163.1,706.1 1167.5,705.9 1172.1,705.3 1176.3,706.2 1180.0,709.0" fill="none" stroke="#a8d0e2" stroke-width="1.4" stroke-linejoin="round"/><polyline points="1290.3,600.4 1295.0,599.8 1297.5,596.5 1299.6,592.8 1302.1,589.5 1304.2,585.7 1307.4,583.3 1312.8,583.6 1316.7,582.1 1319.1,578.8 1321.4,575.1 1323.0,570.8 1326.3,568.5 1330.3,567.1 1334.8,566.4 1338.1,564.0 1341.1,562.3 1343.3,557.6 1346.2,554.2 1350.1,553.0 1353.8,551.3 1358.7,552.0 1362.6,550.6 1366.2,548.8 1369.1,545.6 1372.2,542.5 1375.0,539.2 1379.2,538.4 1384.1,539.0 1388.1,538.0 1391.5,535.6 1394.5,532.7 1397.4,529.4 1400.6,526.6 1405.2,526.8 1409.1,525.5 1413.8,525.8 1417.0,523.1 1420.0,520.0" fill="none" stroke="#a8d0e2" stroke-width="1.4" stroke-linejoin="round"/><polyline points="1389.8,539.9 1386.7,543.0 1384.1,546.4 1385.1,551.6 1384.1,555.8 1382.7,559.8 1379.0,562.6 1375.2,565.4 1373.5,569.2 1371.7,573.0 1370.1,576.9 1371.0,582.0 1369.5,586.0 1366.3,589.1 1362.5,591.9 1359.4,595.0 1359.2,599.7 1357.8,603.6 1358.2,608.2 1356.9,612.2 1355.2,615.9 1351.6,618.9 1349.2,622.5 1348.2,626.5 1347.1,630.5 1347.4,635.1 1347.1,639.4 1344.2,642.8 1340.9,645.9 1337.6,650.5 1339.8,654.4 1341.5,658.4 1344.6,662.1 1345.9,666.2 1345.0,670.7 1343.8,675.2 1343.6,679.6 1345.4,683.6 1347.4,687.5 1349.7,691.4 1350.9,695.5 1350.0,700.0" fill="none" stroke="#a8d0e2" stroke-width="1.4" stroke-linejoin="round"/><polyline points="1560.0,560.0 1564.7,560.3 1567.7,557.2 1570.6,554.0 1573.6,550.8 1577.3,549.1 1581.2,547.8 1585.6,547.6 1589.7,546.7 1593.7,545.7 1596.7,542.5 1599.0,538.0 1602.9,536.7 1606.8,535.5 1611.2,535.2 1615.5,534.7 1619.1,532.7 1622.0,529.4 1624.4,525.2 1628.5,524.3 1632.3,522.7 1636.7,522.4 1640.0,521.7 1644.0,520.9 1648.0,520.7 1652.0,518.7 1656.0,518.4 1660.0,518.1 1664.0,520.9 1668.0,522.1 1672.0,520.8 1676.0,520.1 1682.0,519.0 1683.5,522.8 1684.4,526.9 1683.7,531.8 1684.8,535.8 1687.1,539.2 1691.7,541.4 1694.8,544.4 1695.9,548.4 1697.6,552.1 1697.7,556.6 1700.0,560.0" fill="none" stroke="#a8d0e2" stroke-width="1.4" stroke-linejoin="round"/><polyline points="1550.1,579.9 1552.3,583.8 1556.1,585.3 1559.7,587.1 1564.1,587.8 1568.1,589.0 1570.8,592.2 1573.4,595.5 1575.3,599.8 1579.1,600.5 1582.6,603.2 1585.3,606.5 1587.4,609.9 1587.8,614.3 1589.1,618.2 1588.6,623.0 1591.6,626.0 1595.2,628.8 1597.4,632.2 1600.3,635.3 1599.9,640.4 1603.8,641.7 1607.4,644.2 1611.3,645.7 1615.7,645.4 1620.4,643.3 1624.5,644.1 1628.1,646.7 1631.8,648.7 1635.3,651.7 1640.0,650.0" fill="none" stroke="#a8d0e2" stroke-width="1.4" stroke-linejoin="round"/><path d="M1855,292 q25,-12 45,-2 q12,10 0,28 q-8,8 -12,4 q2,-14 -10,-20 q-12,-6 -23,-10z" fill="#aad3df"/><path d="M1818,292 q20,-8 40,-2 l-2,6 q-20,-2 -38,-4z" fill="#e0d8cc"/><path d="M1660,465 q10,-5 15,5 q-5,10 -15,-5z" fill="#aad3df"/><path d="M1605,572 q15,5 22,25 q5,10 -3,20 q-12,-15 -19,-45z" fill="#aad3df"/><polyline points="383.0,97.0 1282.0,97.0 1282.0,752.0" fill="none" stroke="#c4adc4" stroke-width="1.6" stroke-linejoin="round"/><polyline points="383.0,182.0 546.0,64.0" fill="none" stroke="#c09080" stroke-width="1.6" stroke-linejoin="round"/><polyline points="383.0,199.0 400.0,290.0 416.0,414.0 422.0,445.0" fill="none" stroke="#ee8a70" stroke-width="1.5" stroke-linejoin="round"/><polyline points="383.0,190.5 556.0,190.5 570.0,200.0 580.0,221.8 667.0,221.8 714.0,261.0 752.0,261.0 772.0,246.0 912.0,162.0 922.0,158.0" fill="none" stroke="#f5c58f" stroke-width="1.5" stroke-linejoin="round"/><polyline points="752.0,268.0 732.0,306.0 663.0,408.0 640.0,430.0" fill="none" stroke="#f5c58f" stroke-width="1.5" stroke-linejoin="round"/><polyline points="637.0,64.0 637.0,127.0 667.0,143.0 667.0,222.0" fill="none" stroke="#f5c58f" stroke-width="1.5" stroke-linejoin="round"/><polyline points="922.0,64.0 922.0,313.0 912.0,340.0 907.0,377.0 909.0,398.0 900.0,423.0 883.0,457.0 875.0,477.0 870.0,505.0 873.0,537.0 865.0,560.0 857.0,621.0 857.0,752.0" fill="none" stroke="#f5c58f" stroke-width="1.5" stroke-linejoin="round"/><polyline points="922.0,200.0 981.0,275.0 1030.0,320.0 1090.0,355.0 1130.0,372.0 1180.0,362.0 1240.0,352.0" fill="none" stroke="#f5c58f" stroke-width="1.5" stroke-linejoin="round"/><polyline points="574.0,450.0 639.0,461.0 653.0,468.0 663.0,498.0 670.0,539.0 672.0,620.0 676.0,750.0" fill="none" stroke="#f5c58f" stroke-width="1.5" stroke-linejoin="round"/><polyline points="574.0,566.0 618.0,560.0 670.0,553.0 694.0,553.0 748.0,577.0 789.0,619.0 857.0,619.0 884.0,619.0 901.0,612.0 1004.0,612.0 1017.0,628.0 1096.0,628.0 1113.0,641.0 1164.0,675.0 1181.0,703.0 1200.0,752.0" fill="none" stroke="#f5c58f" stroke-width="1.5" stroke-linejoin="round"/><polyline points="881.0,619.0 901.0,617.0 956.0,587.0 987.0,553.0 1007.0,532.0" fill="none" stroke="#ee8a70" stroke-width="1.5" stroke-linejoin="round"/><polyline points="601.0,752.0 670.0,726.0 854.0,624.0 881.0,607.0 918.0,583.0 959.0,563.0 987.0,553.0 1007.0,532.0 1061.0,481.0 1089.0,430.0 1110.0,405.0 1140.0,399.0 1152.0,378.0 1166.0,364.0 1210.0,329.0 1233.0,320.0 1266.0,320.0 1280.0,310.0 1294.0,292.0 1300.0,278.0 1317.0,250.0 1326.0,227.0 1338.0,220.0 1373.0,206.0 1417.0,180.0 1440.0,170.0 1500.0,140.0 1518.0,130.0 1523.0,122.0 1530.0,132.0 1583.0,132.0 1669.0,128.0 1692.0,124.0 1720.0,97.0 1741.0,97.0 1746.0,84.0 1743.0,64.0" fill="none" stroke="#8a8a8a" stroke-width="1.5" stroke-linejoin="round"/><polyline points="690.0,529.0 670.0,566.0 646.0,600.0 622.0,652.0 639.0,689.0 663.0,713.0 676.0,726.0" fill="none" stroke="#8a8a8a" stroke-width="1.2" stroke-linejoin="round"/><polyline points="1140.0,420.0 1160.0,390.0 1183.0,360.0 1230.0,330.0 1270.0,310.0 1300.0,280.0 1330.0,224.0 1370.0,205.0 1414.0,180.0 1445.0,160.0 1475.0,110.0 1445.0,64.0" fill="none" stroke="#ee8a70" stroke-width="1.5" stroke-linejoin="round"/><polyline points="1475.0,110.0 1544.0,132.0 1632.0,220.0 1690.0,250.0 1750.0,285.0 1800.0,338.0 1859.0,414.0 1896.0,453.0 2102.0,453.0" fill="none" stroke="#ee8a70" stroke-width="1.7" stroke-linejoin="round"/><polyline points="1971.0,453.0 1971.0,473.0 1984.0,507.0 2018.0,566.0 2026.0,591.0 2050.0,616.0 2102.0,620.0" fill="none" stroke="#ee8a70" stroke-width="1.6" stroke-linejoin="round"/><polyline points="2018.0,566.0 2038.0,561.0 2102.0,581.0" fill="none" stroke="#9a7a6a" stroke-width="1.3" stroke-linejoin="round"/><polyline points="1890.0,414.0 1883.0,443.0 1866.0,475.0 1846.0,475.0 1841.0,495.0 1812.0,532.0 1767.0,547.0 1743.0,586.0 1735.0,616.0" fill="none" stroke="#8a8a8a" stroke-width="1.3" stroke-linejoin="round"/><polyline points="1898.0,453.0 1866.0,483.0 1853.0,495.0 1829.0,505.0 1804.0,517.0 1770.0,547.0 1735.0,547.0" fill="none" stroke="#f5c58f" stroke-width="1.3" stroke-linejoin="round"/><polyline points="2026.0,598.0 1997.0,618.0 1997.0,648.0 1996.0,709.0 2001.0,752.0" fill="none" stroke="#f5c58f" stroke-width="1.3" stroke-linejoin="round"/><polyline points="2018.0,571.0 2102.0,571.0" fill="none" stroke="#f5c58f" stroke-width="1.3" stroke-linejoin="round"/><polyline points="1735.0,547.0 1738.0,640.0" fill="none" stroke="#f5c58f" stroke-width="1.3" stroke-linejoin="round"/><polyline points="1583.0,132.0 1690.0,132.0 1705.0,140.0 1825.0,145.0 1864.0,172.0 1950.0,172.0 1962.0,157.0 2102.0,157.0" fill="none" stroke="#ee8a70" stroke-width="1.5" stroke-linejoin="round"/><polyline points="1772.0,64.0 1771.0,128.0 1766.0,166.0 1750.0,194.0 1752.0,280.0 1738.0,318.0 1730.0,414.0 1728.0,560.0 1735.0,640.0" fill="none" stroke="#f5c58f" stroke-width="1.4" stroke-linejoin="round"/><polyline points="1752.0,251.0 1901.0,251.0 1921.0,227.0 1946.0,227.0 1946.0,172.0" fill="none" stroke="#f5c58f" stroke-width="1.4" stroke-linejoin="round"/><polyline points="1416.0,280.0 2102.0,280.0" fill="none" stroke="#cbb9a6" stroke-width="1.5" stroke-linejoin="round"/><polyline points="1416.0,290.0 1452.0,290.0 1751.0,290.0" fill="none" stroke="#f5c58f" stroke-width="1.4" stroke-linejoin="round"/><polyline points="1888.0,414.0 1960.0,318.0 2016.0,310.0 2059.0,242.0 2102.0,224.0" fill="none" stroke="#8a8a8a" stroke-width="1.3" stroke-linejoin="round"/><polyline points="1500.0,745.0 1540.0,710.0 1580.0,690.0 1620.0,665.0 1680.0,647.0 1720.0,633.0 1790.0,625.0 1860.0,622.0 1900.0,617.0 1990.0,617.0 2060.0,620.0 2102.0,620.0" fill="none" stroke="#e26283" stroke-width="1.8" stroke-linejoin="round"/><polyline points="1525.0,752.0 1560.0,720.0 1610.0,690.0 1650.0,660.0" fill="none" stroke="#e26283" stroke-width="1.5" stroke-linejoin="round"/><text x="501" y="99" text-anchor="middle" font-family="Liberation Sans" font-size="13.5" fill="#555" stroke="#f2efe9" stroke-width="2.5" paint-order="stroke">Texhoma</text><text x="929" y="163" text-anchor="middle" font-family="Liberation Sans" font-size="13.5" fill="#555" stroke="#f2efe9" stroke-width="2.5" paint-order="stroke">Perryton</text><text x="760" y="269" text-anchor="middle" font-family="Liberation Sans" font-size="13.5" fill="#555" stroke="#f2efe9" stroke-width="2.5" paint-order="stroke">Spearman</text><text x="1547" y="139" text-anchor="middle" font-family="Liberation Sans" font-size="13.5" fill="#555" stroke="#f2efe9" stroke-width="2.5" paint-order="stroke">Woodward</text><text x="1946" y="228" text-anchor="middle" font-family="Liberation Sans" font-size="13.5" fill="#555" stroke="#f2efe9" stroke-width="2.5" paint-order="stroke">Fairview</text><text x="1113" y="421" text-anchor="middle" font-family="Liberation Sans" font-size="13.5" fill="#555" stroke="#f2efe9" stroke-width="2.5" paint-order="stroke">Canadian</text><text x="673" y="552" text-anchor="middle" font-family="Liberation Sans" font-size="13.5" fill="#555" stroke="#f2efe9" stroke-width="2.5" paint-order="stroke">Borger</text><text x="862" y="623" text-anchor="middle" font-family="Liberation Sans" font-size="13.5" fill="#555" stroke="#f2efe9" stroke-width="2.5" paint-order="stroke">Pampa</text><text x="679" y="725" text-anchor="middle" font-family="Liberation Sans" font-size="13.5" fill="#555" stroke="#f2efe9" stroke-width="2.5" paint-order="stroke">Panhandle</text><text x="1163" y="673" text-anchor="middle" font-family="Liberation Sans" font-size="13.5" fill="#555" stroke="#f2efe9" stroke-width="2.5" paint-order="stroke">Wheeler</text><text x="1975" y="456" text-anchor="middle" font-family="Liberation Sans" font-size="13.5" fill="#555" stroke="#f2efe9" stroke-width="2.5" paint-order="stroke">Watonga</text><text x="1733" y="634" text-anchor="middle" font-family="Liberation Sans" font-size="13.5" fill="#555" stroke="#f2efe9" stroke-width="2.5" paint-order="stroke">Clinton</text><text x="1846" y="628" text-anchor="middle" font-family="Liberation Sans" font-size="13.5" fill="#555" stroke="#f2efe9" stroke-width="2.5" paint-order="stroke">Weatherford</text><text x="1529" y="689" text-anchor="middle" font-family="Liberation Sans" font-size="13.5" fill="#555" stroke="#f2efe9" stroke-width="2.5" paint-order="stroke">Elk City</text><text x="1439" y="751" text-anchor="middle" font-family="Liberation Sans" font-size="13.5" fill="#555" stroke="#f2efe9" stroke-width="2.5" paint-order="stroke">Sayre</text><text x="420" y="449" text-anchor="middle" font-family="Liberation Sans" font-size="13.5" fill="#555" stroke="#f2efe9" stroke-width="2.5" paint-order="stroke">Dumas</text><text x="1575" y="550" text-anchor="middle" font-family="Liberation Sans" font-style="italic" font-size="18.5" fill="#8c7455" stroke="#f2efe9" stroke-width="2" paint-order="stroke">Cheyenne</text><text x="1575" y="571" text-anchor="middle" font-family="Liberation Sans" font-style="italic" font-size="18.5" fill="#8c7455" stroke="#f2efe9" stroke-width="2" paint-order="stroke">and Arapaho</text><text x="1575" y="592" text-anchor="middle" font-family="Liberation Sans" font-style="italic" font-size="18.5" fill="#8c7455" stroke="#f2efe9" stroke-width="2" paint-order="stroke">Tribes</text><text x="1998" y="672" text-anchor="middle" font-family="Liberation Sans" font-style="italic" font-size="18.5" fill="#8c7455" stroke="#f2efe9" stroke-width="2" paint-order="stroke">Caddo-</text><text x="1998" y="693" text-anchor="middle" font-family="Liberation Sans" font-style="italic" font-size="18.5" fill="#8c7455" stroke="#f2efe9" stroke-width="2" paint-order="stroke">Wichita-</text><text x="1998" y="714" text-anchor="middle" font-family="Liberation Sans" font-style="italic" font-size="18.5" fill="#8c7455" stroke="#f2efe9" stroke-width="2" paint-order="stroke">Delaware</text><path d="M575,548 q8,-10 15,-14 q8,-8 18,-12 q6,4 0,10 q-10,6 -16,14 q-8,8 -17,12z" fill="#aad3df" stroke="#9ccf8a" stroke-width="1.2"/><polyline points="573,505 590,500 605,505 612,520 600,530 585,548 575,555" fill="none" stroke="#a9d48f" stroke-width="1.2"/><rect x="575" y="716" width="35" height="36" fill="#f0d8d0" opacity="0.7"/><polyline points="673,540 639,526 620,509 591,471 572,454" fill="none" stroke="#999" stroke-width="1.2"/><polyline points="651,555 610,569 584,560 574,564" fill="none" stroke="#999" stroke-width="1.2"/><polyline points="639,684 699,684" fill="none" stroke="#d0cbc5" stroke-width="1.2"/><polyline points="962.6,109.4 986.5,109.4 986.5,96.8 1000.0,96.8 1001.8,121.3 1046.1,121.3 1049.5,141.8 1049.5,257.6 1122.8,257.6 1122.8,284.9 1122.8,322.4 1151.7,322.4" fill="none" stroke="#e879f9" stroke-width="2.6" stroke-dasharray="7 5" stroke-opacity="0.85"/><polyline points="971.1,111.0 971.1,157.1" fill="none" stroke="#e879f9" stroke-width="2.6" stroke-dasharray="7 5" stroke-opacity="0.85"/><polyline points="1049.5,223.5 1066.5,203.1 1073.3,196.3" fill="none" stroke="#e879f9" stroke-width="2.6" stroke-dasharray="7 5" stroke-opacity="0.85"/><polyline points="826.3,213.3 850.2,211.6 904.7,211.6 930.3,206.5 930.3,181.0 993.3,181.0" fill="none" stroke="#fb923c" stroke-width="2.6" stroke-dasharray="7 5" stroke-opacity="0.85"/><polyline points="930.3,181.0 930.3,160.0 940.0,150.0" fill="none" stroke="#fb923c" stroke-width="2.6" stroke-dasharray="7 5" stroke-opacity="0.85"/><polyline points="971.1,157.1 1027.3,157.1" fill="none" stroke="#fb923c" stroke-width="2.6" stroke-dasharray="7 5" stroke-opacity="0.85"/><polyline points="993.3,157.1 993.3,172.4" fill="none" stroke="#fb923c" stroke-width="2.6" stroke-dasharray="7 5" stroke-opacity="0.85"/><polyline points="826.3,213.3 826.3,298.5 805.9,300.2" fill="none" stroke="#fb923c" stroke-width="2.6" stroke-dasharray="7 5" stroke-opacity="0.85"/><polyline points="826.3,261.0 845.1,261.0 850.2,266.1 897.9,266.1" fill="none" stroke="#fb923c" stroke-width="2.6" stroke-dasharray="7 5" stroke-opacity="0.85"/><polyline points="1136.4,174.1 1162.0,172.4 1162.0,322.4" fill="none" stroke="#22d3ee" stroke-width="2.6" stroke-dasharray="7 5" stroke-opacity="0.85"/><polyline points="1162.0,165.6 1208.0,158.8 1225.0,169.0 1225.0,274.7 1240.0,285.0 1260.0,300.0" fill="none" stroke="#22d3ee" stroke-width="2.6" stroke-dasharray="7 5" stroke-opacity="0.85"/><polyline points="1225.0,190.0 1245.0,185.0 1249.0,180.0" fill="none" stroke="#22d3ee" stroke-width="2.6" stroke-dasharray="7 5" stroke-opacity="0.85"/><polyline points="1082.0,259.3 1161.0,259.3 1161.0,300.0" fill="none" stroke="#a3e635" stroke-width="2.6" stroke-dasharray="7 5" stroke-opacity="0.85"/><polyline points="1081.9,259.3 1081.9,290.0 1090.0,302.0 1098.0,305.0" fill="none" stroke="#a3e635" stroke-width="2.6" stroke-dasharray="7 5" stroke-opacity="0.85"/><polyline points="908.1,378.6 932.0,375.2 993.3,370.0 1044.4,380.3 1068.2,373.5 1083.0,355.0 1090.0,330.0" fill="none" stroke="#a3e635" stroke-width="2.6" stroke-dasharray="7 5" stroke-opacity="0.85"/><polyline points="907.0,378.0 910.0,400.0 912.0,420.0 923.0,432.0 933.0,460.0 958.0,484.0 970.0,509.0 985.0,515.0" fill="none" stroke="#a3e635" stroke-width="2.6" stroke-dasharray="7 5" stroke-opacity="0.85"/><polyline points="1107.4,430.0 1107.4,472.6 1117.6,522.0 1129.6,573.1 1150.0,597.0 1170.4,588.4" fill="none" stroke="#a3e635" stroke-width="2.6" stroke-dasharray="7 5" stroke-opacity="0.85"/><polyline points="1110.0,420.0 1180.0,440.0 1260.0,418.0 1280.0,425.0" fill="none" stroke="#a3e635" stroke-width="2.6" stroke-dasharray="7 5" stroke-opacity="0.85"/><polyline points="1286.0,170.0 1338.0,170.0 1338.0,148.0 1342.0,143.0" fill="none" stroke="#fb7185" stroke-width="2.6" stroke-dasharray="7 5" stroke-opacity="0.85"/><polyline points="1286.0,170.0 1288.0,215.0 1300.0,226.0" fill="none" stroke="#fb7185" stroke-width="2.6" stroke-dasharray="7 5" stroke-opacity="0.85"/><polyline points="1290.0,230.0 1285.0,250.0 1290.0,310.0 1300.0,330.0" fill="none" stroke="#14b8a6" stroke-width="2.6" stroke-dasharray="7 5" stroke-opacity="0.85"/><polyline points="1290.0,340.0 1295.0,360.0 1320.0,360.0 1330.0,340.0" fill="none" stroke="#c4b5fd" stroke-width="2.6" stroke-dasharray="7 5" stroke-opacity="0.85"/><polyline points="1360.0,390.0 1352.0,415.0 1352.0,440.0 1340.0,450.0 1330.0,470.0" fill="none" stroke="#2dd4bf" stroke-width="2.6" stroke-dasharray="7 5" stroke-opacity="0.85"/><polyline points="1390.0,420.0 1385.0,440.0 1410.0,450.0 1440.0,440.0 1450.0,420.0" fill="none" stroke="#e879f9" stroke-width="2.6" stroke-dasharray="7 5" stroke-opacity="0.85"/><polyline points="1480.0,490.0 1483.0,510.0 1500.0,530.0 1520.0,535.0" fill="none" stroke="#c4b5fd" stroke-width="2.6" stroke-dasharray="7 5" stroke-opacity="0.85"/><polyline points="1471.0,545.0 1515.0,545.0 1530.0,556.0 1540.0,580.0 1555.0,600.0 1555.0,690.0 1600.0,690.0" fill="none" stroke="#3b82f6" stroke-width="2.6" stroke-dasharray="7 5" stroke-opacity="0.85"/><polyline points="1555.0,600.0 1600.0,604.0 1620.0,620.0 1640.0,620.0 1650.0,650.0" fill="none" stroke="#c4b5fd" stroke-width="2.6" stroke-dasharray="7 5" stroke-opacity="0.85"/><polyline points="1600.0,690.0 1640.0,680.0 1690.0,683.0 1700.0,700.0" fill="none" stroke="#22d3ee" stroke-width="2.6" stroke-dasharray="7 5" stroke-opacity="0.85"/><polyline points="1640.0,690.0 1640.0,752.0" fill="none" stroke="#fb7185" stroke-width="2.6" stroke-dasharray="7 5" stroke-opacity="0.85"/><polyline points="1725.0,700.0 1720.0,752.0 1800.0,752.0" fill="none" stroke="#22d3ee" stroke-width="2.6" stroke-dasharray="7 5" stroke-opacity="0.85"/><polyline points="1760.0,690.0 1770.0,700.0 1780.0,740.0" fill="none" stroke="#c4b5fd" stroke-width="2.6" stroke-dasharray="7 5" stroke-opacity="0.85"/><polyline points="1310.0,700.0 1320.0,720.0 1360.0,740.0 1400.0,745.0" fill="none" stroke="#facc15" stroke-width="2.6" stroke-dasharray="7 5" stroke-opacity="0.85"/><polyline points="1475.0,462.0 1520.0,470.0 1545.0,470.0" fill="none" stroke="#fb923c" stroke-width="2.6" stroke-dasharray="7 5" stroke-opacity="0.85"/><polyline points="1370.0,485.0 1420.0,485.0 1460.0,480.0" fill="none" stroke="#fb7185" stroke-width="2.6" stroke-dasharray="7 5" stroke-opacity="0.85"/><polyline points="1200.0,640.0 1185.0,620.0 1190.0,600.0" fill="none" stroke="#facc15" stroke-width="2.6" stroke-dasharray="7 5" stroke-opacity="0.85"/><polyline points="1175.0,670.0 1220.0,672.0 1235.0,667.0" fill="none" stroke="#fb923c" stroke-width="2.6" stroke-dasharray="7 5" stroke-opacity="0.85"/><polyline points="1183,349 1204,338 1268,306 1284,306" fill="none" stroke="#d9e04a" stroke-width="3" stroke-opacity="0.9"/><polyline points="985,527 1003,532 1027,512 1055,496 1082,484 1107,473 1130,440 1150,400 1183,349" fill="none" stroke="#84cc16" stroke-width="2.2" stroke-opacity="0.85"/><circle cx="1126.0" cy="558.2" r="2.8" fill="#c4c7cc" fill-opacity="0.5" stroke="#4b5563" stroke-width="1.4"/><circle cx="1155.3" cy="549.2" r="2.8" fill="#c4c7cc" fill-opacity="0.5" stroke="#4b5563" stroke-width="1.4"/><circle cx="1129.5" cy="560.8" r="2.8" fill="#c4c7cc" fill-opacity="0.5" stroke="#4b5563" stroke-width="1.4"/><circle cx="1109.4" cy="553.6" r="2.8" fill="#c4c7cc" fill-opacity="0.5" stroke="#4b5563" stroke-width="1.4"/><circle cx="1137.1" cy="580.3" r="2.8" fill="#c4c7cc" fill-opacity="0.5" stroke="#4b5563" stroke-width="1.4"/><circle cx="1103.8" cy="533.8" r="2.8" fill="#c4c7cc" fill-opacity="0.5" stroke="#4b5563" stroke-width="1.4"/><circle cx="1103.6" cy="581.9" r="2.8" fill="#c4c7cc" fill-opacity="0.5" stroke="#4b5563" stroke-width="1.4"/><circle cx="1141.0" cy="509.0" r="2.8" fill="#c4c7cc" fill-opacity="0.5" stroke="#4b5563" stroke-width="1.4"/><circle cx="1158.9" cy="596.7" r="2.8" fill="#c4c7cc" fill-opacity="0.5" stroke="#4b5563" stroke-width="1.4"/><circle cx="1138.5" cy="563.5" r="2.8" fill="#c4c7cc" fill-opacity="0.5" stroke="#4b5563" stroke-width="1.4"/><circle cx="1107.8" cy="506.4" r="2.8" fill="#c4c7cc" fill-opacity="0.5" stroke="#4b5563" stroke-width="1.4"/><circle cx="1130.8" cy="510.7" r="2.8" fill="#c4c7cc" fill-opacity="0.5" stroke="#4b5563" stroke-width="1.4"/><circle cx="1109.8" cy="528.0" r="2.8" fill="#c4c7cc" fill-opacity="0.5" stroke="#4b5563" stroke-width="1.4"/><circle cx="1099.9" cy="549.1" r="2.8" fill="#c4c7cc" fill-opacity="0.5" stroke="#4b5563" stroke-width="1.4"/><circle cx="1184.1" cy="552.1" r="2.8" fill="#c4c7cc" fill-opacity="0.5" stroke="#4b5563" stroke-width="1.4"/><circle cx="1191.9" cy="542.0" r="2.8" fill="#c4c7cc" fill-opacity="0.5" stroke="#4b5563" stroke-width="1.4"/><circle cx="1190.0" cy="543.1" r="2.8" fill="#c4c7cc" fill-opacity="0.5" stroke="#4b5563" stroke-width="1.4"/><circle cx="1185.7" cy="523.9" r="2.8" fill="#c4c7cc" fill-opacity="0.5" stroke="#4b5563" stroke-width="1.4"/><circle cx="1239.8" cy="559.8" r="2.8" fill="#c4c7cc" fill-opacity="0.5" stroke="#4b5563" stroke-width="1.4"/><circle cx="1224.0" cy="545.4" r="2.8" fill="#c4c7cc" fill-opacity="0.5" stroke="#4b5563" stroke-width="1.4"/><circle cx="1171.5" cy="521.5" r="2.8" fill="#c4c7cc" fill-opacity="0.5" stroke="#4b5563" stroke-width="1.4"/><circle cx="1168.9" cy="513.5" r="2.8" fill="#c4c7cc" fill-opacity="0.5" stroke="#4b5563" stroke-width="1.4"/><circle cx="1216.6" cy="530.0" r="2.8" fill="#c4c7cc" fill-opacity="0.5" stroke="#4b5563" stroke-width="1.4"/><circle cx="1224.7" cy="529.3" r="2.8" fill="#c4c7cc" fill-opacity="0.5" stroke="#4b5563" stroke-width="1.4"/><circle cx="1235.8" cy="552.4" r="2.8" fill="#c4c7cc" fill-opacity="0.5" stroke="#4b5563" stroke-width="1.4"/><circle cx="1140.1" cy="520.5" r="2.8" fill="#c4c7cc" fill-opacity="0.5" stroke="#4b5563" stroke-width="1.4"/><circle cx="1231.0" cy="533.5" r="2.8" fill="#c4c7cc" fill-opacity="0.5" stroke="#4b5563" stroke-width="1.4"/><circle cx="1238.0" cy="529.9" r="2.8" fill="#c4c7cc" fill-opacity="0.5" stroke="#4b5563" stroke-width="1.4"/><circle cx="1147.3" cy="541.5" r="2.8" fill="#c4c7cc" fill-opacity="0.5" stroke="#4b5563" stroke-width="1.4"/><circle cx="1217.9" cy="523.5" r="2.8" fill="#c4c7cc" fill-opacity="0.5" stroke="#4b5563" stroke-width="1.4"/><circle cx="1148.7" cy="526.6" r="2.8" fill="#c4c7cc" fill-opacity="0.5" stroke="#4b5563" stroke-width="1.4"/><circle cx="1236.4" cy="547.9" r="2.8" fill="#c4c7cc" fill-opacity="0.5" stroke="#4b5563" stroke-width="1.4"/><circle cx="1160.6" cy="574.8" r="2.8" fill="#c4c7cc" fill-opacity="0.5" stroke="#4b5563" stroke-width="1.4"/><circle cx="1159.1" cy="563.6" r="2.8" fill="#c4c7cc" fill-opacity="0.5" stroke="#4b5563" stroke-width="1.4"/><circle cx="1221.7" cy="570.7" r="2.8" fill="#c4c7cc" fill-opacity="0.5" stroke="#4b5563" stroke-width="1.4"/><circle cx="1200.3" cy="586.8" r="2.8" fill="#c4c7cc" fill-opacity="0.5" stroke="#4b5563" stroke-width="1.4"/><circle cx="1167.2" cy="603.9" r="2.8" fill="#c4c7cc" fill-opacity="0.5" stroke="#4b5563" stroke-width="1.4"/><circle cx="1161.8" cy="598.6" r="2.8" fill="#c4c7cc" fill-opacity="0.5" stroke="#4b5563" stroke-width="1.4"/><circle cx="1160.5" cy="585.2" r="2.8" fill="#c4c7cc" fill-opacity="0.5" stroke="#4b5563" stroke-width="1.4"/><circle cx="1169.2" cy="576.2" r="2.8" fill="#c4c7cc" fill-opacity="0.5" stroke="#4b5563" stroke-width="1.4"/><circle cx="1237.4" cy="608.2" r="2.8" fill="#c4c7cc" fill-opacity="0.5" stroke="#4b5563" stroke-width="1.4"/><circle cx="1177.4" cy="613.1" r="2.8" fill="#c4c7cc" fill-opacity="0.5" stroke="#4b5563" stroke-width="1.4"/><circle cx="1169.0" cy="583.7" r="2.8" fill="#c4c7cc" fill-opacity="0.5" stroke="#4b5563" stroke-width="1.4"/><circle cx="1226.9" cy="598.5" r="2.8" fill="#c4c7cc" fill-opacity="0.5" stroke="#4b5563" stroke-width="1.4"/><circle cx="1159.0" cy="619.4" r="2.8" fill="#c4c7cc" fill-opacity="0.5" stroke="#4b5563" stroke-width="1.4"/><circle cx="1169.2" cy="575.5" r="2.8" fill="#c4c7cc" fill-opacity="0.5" stroke="#4b5563" stroke-width="1.4"/><circle cx="1219.5" cy="579.7" r="2.8" fill="#c4c7cc" fill-opacity="0.5" stroke="#4b5563" stroke-width="1.4"/><circle cx="1176.7" cy="564.4" r="2.8" fill="#c4c7cc" fill-opacity="0.5" stroke="#4b5563" stroke-width="1.4"/><circle cx="1158.1" cy="595.0" r="2.8" fill="#c4c7cc" fill-opacity="0.5" stroke="#4b5563" stroke-width="1.4"/><circle cx="1171.9" cy="596.1" r="2.8" fill="#c4c7cc" fill-opacity="0.5" stroke="#4b5563" stroke-width="1.4"/><circle cx="1189.7" cy="640.8" r="2.8" fill="#c4c7cc" fill-opacity="0.5" stroke="#4b5563" stroke-width="1.4"/><circle cx="1236.7" cy="643.5" r="2.8" fill="#c4c7cc" fill-opacity="0.5" stroke="#4b5563" stroke-width="1.4"/><circle cx="1206.0" cy="678.0" r="2.8" fill="#c4c7cc" fill-opacity="0.5" stroke="#4b5563" stroke-width="1.4"/><circle cx="1174.6" cy="613.9" r="2.8" fill="#c4c7cc" fill-opacity="0.5" stroke="#4b5563" stroke-width="1.4"/><circle cx="1232.7" cy="673.6" r="2.8" fill="#c4c7cc" fill-opacity="0.5" stroke="#4b5563" stroke-width="1.4"/><circle cx="1180.0" cy="617.1" r="2.8" fill="#c4c7cc" fill-opacity="0.5" stroke="#4b5563" stroke-width="1.4"/><circle cx="1219.2" cy="684.6" r="2.8" fill="#c4c7cc" fill-opacity="0.5" stroke="#4b5563" stroke-width="1.4"/><circle cx="1175.7" cy="685.5" r="2.8" fill="#c4c7cc" fill-opacity="0.5" stroke="#4b5563" stroke-width="1.4"/><circle cx="1230.6" cy="654.3" r="2.8" fill="#c4c7cc" fill-opacity="0.5" stroke="#4b5563" stroke-width="1.4"/><circle cx="1193.7" cy="609.3" r="2.8" fill="#c4c7cc" fill-opacity="0.5" stroke="#4b5563" stroke-width="1.4"/><circle cx="1163.1" cy="686.6" r="2.8" fill="#c4c7cc" fill-opacity="0.5" stroke="#4b5563" stroke-width="1.4"/><circle cx="1179.1" cy="663.4" r="2.8" fill="#c4c7cc" fill-opacity="0.5" stroke="#4b5563" stroke-width="1.4"/><circle cx="1180.6" cy="674.1" r="2.8" fill="#c4c7cc" fill-opacity="0.5" stroke="#4b5563" stroke-width="1.4"/><circle cx="1207.7" cy="626.4" r="2.8" fill="#c4c7cc" fill-opacity="0.5" stroke="#4b5563" stroke-width="1.4"/><circle cx="1174.0" cy="664.8" r="2.8" fill="#c4c7cc" fill-opacity="0.5" stroke="#4b5563" stroke-width="1.4"/><circle cx="1165.5" cy="620.6" r="2.8" fill="#c4c7cc" fill-opacity="0.5" stroke="#4b5563" stroke-width="1.4"/><circle cx="1204.7" cy="676.7" r="2.8" fill="#c4c7cc" fill-opacity="0.5" stroke="#4b5563" stroke-width="1.4"/><circle cx="1209.1" cy="625.2" r="2.8" fill="#c4c7cc" fill-opacity="0.5" stroke="#4b5563" stroke-width="1.4"/><circle cx="1233.4" cy="618.4" r="2.8" fill="#c4c7cc" fill-opacity="0.5" stroke="#4b5563" stroke-width="1.4"/><circle cx="1161.3" cy="624.2" r="2.8" fill="#c4c7cc" fill-opacity="0.5" stroke="#4b5563" stroke-width="1.4"/><circle cx="1292.3" cy="693.7" r="2.8" fill="#c4c7cc" fill-opacity="0.5" stroke="#4b5563" stroke-width="1.4"/><circle cx="1278.8" cy="712.9" r="2.8" fill="#c4c7cc" fill-opacity="0.5" stroke="#4b5563" stroke-width="1.4"/><circle cx="1298.6" cy="698.2" r="2.8" fill="#c4c7cc" fill-opacity="0.5" stroke="#4b5563" stroke-width="1.4"/><circle cx="1288.1" cy="745.2" r="2.8" fill="#c4c7cc" fill-opacity="0.5" stroke="#4b5563" stroke-width="1.4"/><circle cx="1319.0" cy="730.7" r="2.8" fill="#c4c7cc" fill-opacity="0.5" stroke="#4b5563" stroke-width="1.4"/><circle cx="1304.6" cy="726.2" r="2.8" fill="#c4c7cc" fill-opacity="0.5" stroke="#4b5563" stroke-width="1.4"/><circle cx="1277.0" cy="692.2" r="2.8" fill="#c4c7cc" fill-opacity="0.5" stroke="#4b5563" stroke-width="1.4"/><circle cx="1270.9" cy="746.4" r="2.8" fill="#c4c7cc" fill-opacity="0.5" stroke="#4b5563" stroke-width="1.4"/><circle cx="1305.0" cy="749.7" r="2.8" fill="#c4c7cc" fill-opacity="0.5" stroke="#4b5563" stroke-width="1.4"/><circle cx="1271.1" cy="729.4" r="2.8" fill="#c4c7cc" fill-opacity="0.5" stroke="#4b5563" stroke-width="1.4"/><circle cx="1294.1" cy="735.3" r="2.8" fill="#c4c7cc" fill-opacity="0.5" stroke="#4b5563" stroke-width="1.4"/><circle cx="1285.9" cy="752.0" r="2.8" fill="#c4c7cc" fill-opacity="0.5" stroke="#4b5563" stroke-width="1.4"/><circle cx="1332.0" cy="728.4" r="2.8" fill="#c4c7cc" fill-opacity="0.5" stroke="#4b5563" stroke-width="1.4"/><circle cx="1437.9" cy="746.8" r="2.8" fill="#c4c7cc" fill-opacity="0.5" stroke="#4b5563" stroke-width="1.4"/><circle cx="1437.9" cy="736.6" r="2.8" fill="#c4c7cc" fill-opacity="0.5" stroke="#4b5563" stroke-width="1.4"/><circle cx="1446.9" cy="747.6" r="2.8" fill="#c4c7cc" fill-opacity="0.5" stroke="#4b5563" stroke-width="1.4"/><circle cx="1376.3" cy="735.6" r="2.8" fill="#c4c7cc" fill-opacity="0.5" stroke="#4b5563" stroke-width="1.4"/><circle cx="1464.1" cy="745.3" r="2.8" fill="#c4c7cc" fill-opacity="0.5" stroke="#4b5563" stroke-width="1.4"/><circle cx="1386.7" cy="741.1" r="2.8" fill="#c4c7cc" fill-opacity="0.5" stroke="#4b5563" stroke-width="1.4"/><circle cx="1458.2" cy="729.8" r="2.8" fill="#c4c7cc" fill-opacity="0.5" stroke="#4b5563" stroke-width="1.4"/><circle cx="1420.0" cy="719.9" r="2.8" fill="#c4c7cc" fill-opacity="0.5" stroke="#4b5563" stroke-width="1.4"/><circle cx="1413.2" cy="731.7" r="2.8" fill="#c4c7cc" fill-opacity="0.5" stroke="#4b5563" stroke-width="1.4"/><circle cx="1332.8" cy="733.2" r="2.8" fill="#c4c7cc" fill-opacity="0.5" stroke="#4b5563" stroke-width="1.4"/><circle cx="1478.9" cy="745.7" r="2.8" fill="#c4c7cc" fill-opacity="0.5" stroke="#4b5563" stroke-width="1.4"/><circle cx="1436.5" cy="720.2" r="2.8" fill="#c4c7cc" fill-opacity="0.5" stroke="#4b5563" stroke-width="1.4"/><circle cx="1437.6" cy="730.2" r="2.8" fill="#c4c7cc" fill-opacity="0.5" stroke="#4b5563" stroke-width="1.4"/><circle cx="1390.5" cy="743.6" r="2.8" fill="#c4c7cc" fill-opacity="0.5" stroke="#4b5563" stroke-width="1.4"/><circle cx="1333.4" cy="739.0" r="2.8" fill="#c4c7cc" fill-opacity="0.5" stroke="#4b5563" stroke-width="1.4"/><circle cx="1324.8" cy="731.3" r="2.8" fill="#c4c7cc" fill-opacity="0.5" stroke="#4b5563" stroke-width="1.4"/><circle cx="1397.0" cy="712.0" r="2.8" fill="#c4c7cc" fill-opacity="0.5" stroke="#4b5563" stroke-width="1.4"/><circle cx="1431.7" cy="725.9" r="2.8" fill="#c4c7cc" fill-opacity="0.5" stroke="#4b5563" stroke-width="1.4"/><circle cx="1418.3" cy="747.9" r="2.8" fill="#c4c7cc" fill-opacity="0.5" stroke="#4b5563" stroke-width="1.4"/><circle cx="1360.9" cy="700.6" r="2.8" fill="#c4c7cc" fill-opacity="0.5" stroke="#4b5563" stroke-width="1.4"/><circle cx="1368.2" cy="735.3" r="2.8" fill="#c4c7cc" fill-opacity="0.5" stroke="#4b5563" stroke-width="1.4"/><circle cx="1352.4" cy="708.8" r="2.8" fill="#c4c7cc" fill-opacity="0.5" stroke="#4b5563" stroke-width="1.4"/><circle cx="1464.9" cy="734.3" r="2.8" fill="#c4c7cc" fill-opacity="0.5" stroke="#4b5563" stroke-width="1.4"/><circle cx="1390.7" cy="746.4" r="2.8" fill="#c4c7cc" fill-opacity="0.5" stroke="#4b5563" stroke-width="1.4"/><circle cx="1372.3" cy="734.6" r="2.8" fill="#c4c7cc" fill-opacity="0.5" stroke="#4b5563" stroke-width="1.4"/><circle cx="1351.8" cy="722.4" r="2.8" fill="#c4c7cc" fill-opacity="0.5" stroke="#4b5563" stroke-width="1.4"/><circle cx="1449.0" cy="747.5" r="2.8" fill="#c4c7cc" fill-opacity="0.5" stroke="#4b5563" stroke-width="1.4"/><circle cx="1460.8" cy="720.0" r="2.8" fill="#c4c7cc" fill-opacity="0.5" stroke="#4b5563" stroke-width="1.4"/><circle cx="1413.3" cy="716.5" r="2.8" fill="#c4c7cc" fill-opacity="0.5" stroke="#4b5563" stroke-width="1.4"/><circle cx="1483.1" cy="599.3" r="2.8" fill="#c4c7cc" fill-opacity="0.5" stroke="#4b5563" stroke-width="1.4"/><circle cx="1545.5" cy="669.7" r="2.8" fill="#c4c7cc" fill-opacity="0.5" stroke="#4b5563" stroke-width="1.4"/><circle cx="1534.3" cy="690.0" r="2.8" fill="#c4c7cc" fill-opacity="0.5" stroke="#4b5563" stroke-width="1.4"/><circle cx="1495.6" cy="533.8" r="2.8" fill="#c4c7cc" fill-opacity="0.5" stroke="#4b5563" stroke-width="1.4"/><circle cx="1511.1" cy="555.0" r="2.8" fill="#c4c7cc" fill-opacity="0.5" stroke="#4b5563" stroke-width="1.4"/><circle cx="1490.1" cy="582.8" r="2.8" fill="#c4c7cc" fill-opacity="0.5" stroke="#4b5563" stroke-width="1.4"/><circle cx="1526.7" cy="598.8" r="2.8" fill="#c4c7cc" fill-opacity="0.5" stroke="#4b5563" stroke-width="1.4"/><circle cx="1499.1" cy="667.8" r="2.8" fill="#c4c7cc" fill-opacity="0.5" stroke="#4b5563" stroke-width="1.4"/><circle cx="1558.4" cy="590.5" r="2.8" fill="#c4c7cc" fill-opacity="0.5" stroke="#4b5563" stroke-width="1.4"/><circle cx="1477.6" cy="506.3" r="2.8" fill="#c4c7cc" fill-opacity="0.5" stroke="#4b5563" stroke-width="1.4"/><circle cx="1548.7" cy="508.3" r="2.8" fill="#c4c7cc" fill-opacity="0.5" stroke="#4b5563" stroke-width="1.4"/><circle cx="1534.1" cy="614.1" r="2.8" fill="#c4c7cc" fill-opacity="0.5" stroke="#4b5563" stroke-width="1.4"/><circle cx="1498.5" cy="658.3" r="2.8" fill="#c4c7cc" fill-opacity="0.5" stroke="#4b5563" stroke-width="1.4"/><circle cx="1472.7" cy="527.2" r="2.8" fill="#c4c7cc" fill-opacity="0.5" stroke="#4b5563" stroke-width="1.4"/><circle cx="1511.5" cy="504.9" r="2.8" fill="#c4c7cc" fill-opacity="0.5" stroke="#4b5563" stroke-width="1.4"/><circle cx="1544.8" cy="547.5" r="2.8" fill="#c4c7cc" fill-opacity="0.5" stroke="#4b5563" stroke-width="1.4"/><circle cx="1483.5" cy="509.4" r="2.8" fill="#c4c7cc" fill-opacity="0.5" stroke="#4b5563" stroke-width="1.4"/><circle cx="1527.0" cy="589.3" r="2.8" fill="#c4c7cc" fill-opacity="0.5" stroke="#4b5563" stroke-width="1.4"/><circle cx="1527.1" cy="631.0" r="2.8" fill="#c4c7cc" fill-opacity="0.5" stroke="#4b5563" stroke-width="1.4"/><circle cx="1542.9" cy="691.7" r="2.8" fill="#c4c7cc" fill-opacity="0.5" stroke="#4b5563" stroke-width="1.4"/><circle cx="1531.9" cy="539.9" r="2.8" fill="#c4c7cc" fill-opacity="0.5" stroke="#4b5563" stroke-width="1.4"/><circle cx="1513.3" cy="535.7" r="2.8" fill="#c4c7cc" fill-opacity="0.5" stroke="#4b5563" stroke-width="1.4"/><circle cx="1472.0" cy="594.4" r="2.8" fill="#c4c7cc" fill-opacity="0.5" stroke="#4b5563" stroke-width="1.4"/><circle cx="1534.6" cy="535.8" r="2.8" fill="#c4c7cc" fill-opacity="0.5" stroke="#4b5563" stroke-width="1.4"/><circle cx="1495.2" cy="569.1" r="2.8" fill="#c4c7cc" fill-opacity="0.5" stroke="#4b5563" stroke-width="1.4"/><circle cx="1533.1" cy="604.1" r="2.8" fill="#c4c7cc" fill-opacity="0.5" stroke="#4b5563" stroke-width="1.4"/><circle cx="1525.7" cy="651.2" r="2.8" fill="#c4c7cc" fill-opacity="0.5" stroke="#4b5563" stroke-width="1.4"/><circle cx="1506.0" cy="658.4" r="2.8" fill="#c4c7cc" fill-opacity="0.5" stroke="#4b5563" stroke-width="1.4"/><circle cx="1551.7" cy="517.4" r="2.8" fill="#c4c7cc" fill-opacity="0.5" stroke="#4b5563" stroke-width="1.4"/><circle cx="1554.0" cy="644.5" r="2.8" fill="#c4c7cc" fill-opacity="0.5" stroke="#4b5563" stroke-width="1.4"/><circle cx="1482.6" cy="590.7" r="2.8" fill="#c4c7cc" fill-opacity="0.5" stroke="#4b5563" stroke-width="1.4"/><circle cx="1526.7" cy="682.0" r="2.8" fill="#c4c7cc" fill-opacity="0.5" stroke="#4b5563" stroke-width="1.4"/><circle cx="1504.5" cy="613.8" r="2.8" fill="#c4c7cc" fill-opacity="0.5" stroke="#4b5563" stroke-width="1.4"/><circle cx="1549.3" cy="659.4" r="2.8" fill="#c4c7cc" fill-opacity="0.5" stroke="#4b5563" stroke-width="1.4"/><circle cx="1555.0" cy="592.7" r="2.8" fill="#c4c7cc" fill-opacity="0.5" stroke="#4b5563" stroke-width="1.4"/><circle cx="1529.0" cy="541.0" r="2.8" fill="#c4c7cc" fill-opacity="0.5" stroke="#4b5563" stroke-width="1.4"/><circle cx="1535.3" cy="663.7" r="2.8" fill="#c4c7cc" fill-opacity="0.5" stroke="#4b5563" stroke-width="1.4"/><circle cx="1528.1" cy="643.5" r="2.8" fill="#c4c7cc" fill-opacity="0.5" stroke="#4b5563" stroke-width="1.4"/><circle cx="1490.0" cy="680.0" r="2.8" fill="#c4c7cc" fill-opacity="0.5" stroke="#4b5563" stroke-width="1.4"/><circle cx="1558.3" cy="695.5" r="2.8" fill="#c4c7cc" fill-opacity="0.5" stroke="#4b5563" stroke-width="1.4"/><circle cx="1518.8" cy="658.2" r="2.8" fill="#c4c7cc" fill-opacity="0.5" stroke="#4b5563" stroke-width="1.4"/><circle cx="1499.5" cy="682.0" r="2.8" fill="#c4c7cc" fill-opacity="0.5" stroke="#4b5563" stroke-width="1.4"/><circle cx="1547.2" cy="569.7" r="2.8" fill="#c4c7cc" fill-opacity="0.5" stroke="#4b5563" stroke-width="1.4"/><circle cx="1478.4" cy="588.2" r="2.8" fill="#c4c7cc" fill-opacity="0.5" stroke="#4b5563" stroke-width="1.4"/><circle cx="1520.0" cy="653.6" r="2.8" fill="#c4c7cc" fill-opacity="0.5" stroke="#4b5563" stroke-width="1.4"/><circle cx="1514.4" cy="505.7" r="2.8" fill="#c4c7cc" fill-opacity="0.5" stroke="#4b5563" stroke-width="1.4"/><circle cx="1543.0" cy="512.8" r="2.8" fill="#c4c7cc" fill-opacity="0.5" stroke="#4b5563" stroke-width="1.4"/><circle cx="1542.2" cy="534.6" r="2.8" fill="#c4c7cc" fill-opacity="0.5" stroke="#4b5563" stroke-width="1.4"/><circle cx="1500.8" cy="657.6" r="2.8" fill="#c4c7cc" fill-opacity="0.5" stroke="#4b5563" stroke-width="1.4"/><circle cx="1483.5" cy="529.7" r="2.8" fill="#c4c7cc" fill-opacity="0.5" stroke="#4b5563" stroke-width="1.4"/><circle cx="1517.0" cy="644.7" r="2.8" fill="#c4c7cc" fill-opacity="0.5" stroke="#4b5563" stroke-width="1.4"/><circle cx="1545.8" cy="637.9" r="2.8" fill="#c4c7cc" fill-opacity="0.5" stroke="#4b5563" stroke-width="1.4"/><circle cx="1555.2" cy="598.5" r="2.8" fill="#c4c7cc" fill-opacity="0.5" stroke="#4b5563" stroke-width="1.4"/><circle cx="1555.5" cy="517.2" r="2.8" fill="#c4c7cc" fill-opacity="0.5" stroke="#4b5563" stroke-width="1.4"/><circle cx="1490.7" cy="605.3" r="2.8" fill="#c4c7cc" fill-opacity="0.5" stroke="#4b5563" stroke-width="1.4"/><circle cx="1413.2" cy="735.2" r="2.8" fill="#c4c7cc" fill-opacity="0.5" stroke="#4b5563" stroke-width="1.4"/><circle cx="1441.1" cy="722.4" r="2.8" fill="#c4c7cc" fill-opacity="0.5" stroke="#4b5563" stroke-width="1.4"/><circle cx="1457.5" cy="724.7" r="2.8" fill="#c4c7cc" fill-opacity="0.5" stroke="#4b5563" stroke-width="1.4"/><circle cx="1414.9" cy="713.6" r="2.8" fill="#c4c7cc" fill-opacity="0.5" stroke="#4b5563" stroke-width="1.4"/><circle cx="1457.6" cy="745.8" r="2.8" fill="#c4c7cc" fill-opacity="0.5" stroke="#4b5563" stroke-width="1.4"/><circle cx="1406.7" cy="742.7" r="2.8" fill="#c4c7cc" fill-opacity="0.5" stroke="#4b5563" stroke-width="1.4"/><circle cx="1467.5" cy="722.5" r="2.8" fill="#c4c7cc" fill-opacity="0.5" stroke="#4b5563" stroke-width="1.4"/><circle cx="1435.8" cy="702.5" r="2.8" fill="#c4c7cc" fill-opacity="0.5" stroke="#4b5563" stroke-width="1.4"/><circle cx="1432.9" cy="721.2" r="2.8" fill="#c4c7cc" fill-opacity="0.5" stroke="#4b5563" stroke-width="1.4"/><circle cx="1438.4" cy="691.7" r="2.8" fill="#c4c7cc" fill-opacity="0.5" stroke="#4b5563" stroke-width="1.4"/><circle cx="1467.6" cy="722.0" r="2.8" fill="#c4c7cc" fill-opacity="0.5" stroke="#4b5563" stroke-width="1.4"/><circle cx="1422.0" cy="739.7" r="2.8" fill="#c4c7cc" fill-opacity="0.5" stroke="#4b5563" stroke-width="1.4"/><circle cx="1435.0" cy="720.4" r="2.8" fill="#c4c7cc" fill-opacity="0.5" stroke="#4b5563" stroke-width="1.4"/><circle cx="1445.3" cy="694.1" r="2.8" fill="#c4c7cc" fill-opacity="0.5" stroke="#4b5563" stroke-width="1.4"/><circle cx="1433.1" cy="715.7" r="2.8" fill="#c4c7cc" fill-opacity="0.5" stroke="#4b5563" stroke-width="1.4"/><circle cx="1466.5" cy="747.3" r="2.8" fill="#c4c7cc" fill-opacity="0.5" stroke="#4b5563" stroke-width="1.4"/><circle cx="1411.5" cy="719.3" r="2.8" fill="#c4c7cc" fill-opacity="0.5" stroke="#4b5563" stroke-width="1.4"/><circle cx="1400.2" cy="716.9" r="2.8" fill="#c4c7cc" fill-opacity="0.5" stroke="#4b5563" stroke-width="1.4"/><circle cx="1455.3" cy="745.8" r="2.8" fill="#c4c7cc" fill-opacity="0.5" stroke="#4b5563" stroke-width="1.4"/><circle cx="1428.1" cy="709.7" r="2.8" fill="#c4c7cc" fill-opacity="0.5" stroke="#4b5563" stroke-width="1.4"/><circle cx="1405.3" cy="728.3" r="2.8" fill="#c4c7cc" fill-opacity="0.5" stroke="#4b5563" stroke-width="1.4"/><circle cx="1464.0" cy="698.0" r="2.8" fill="#c4c7cc" fill-opacity="0.5" stroke="#4b5563" stroke-width="1.4"/><circle cx="1452.3" cy="691.4" r="2.8" fill="#c4c7cc" fill-opacity="0.5" stroke="#4b5563" stroke-width="1.4"/><circle cx="1405.5" cy="704.1" r="2.8" fill="#c4c7cc" fill-opacity="0.5" stroke="#4b5563" stroke-width="1.4"/><circle cx="1445.0" cy="710.0" r="2.8" fill="#c4c7cc" fill-opacity="0.5" stroke="#4b5563" stroke-width="1.4"/><circle cx="1257.8" cy="655.8" r="2.8" fill="#c4c7cc" fill-opacity="0.5" stroke="#4b5563" stroke-width="1.4"/><circle cx="1245.2" cy="665.8" r="2.8" fill="#c4c7cc" fill-opacity="0.5" stroke="#4b5563" stroke-width="1.4"/><circle cx="1246.1" cy="645.9" r="2.8" fill="#c4c7cc" fill-opacity="0.5" stroke="#4b5563" stroke-width="1.4"/><circle cx="1252.5" cy="617.8" r="2.8" fill="#c4c7cc" fill-opacity="0.5" stroke="#4b5563" stroke-width="1.4"/><circle cx="1266.5" cy="639.3" r="2.8" fill="#c4c7cc" fill-opacity="0.5" stroke="#4b5563" stroke-width="1.4"/><circle cx="1258.8" cy="637.2" r="2.8" fill="#c4c7cc" fill-opacity="0.5" stroke="#4b5563" stroke-width="1.4"/><circle cx="1266.5" cy="614.4" r="2.8" fill="#c4c7cc" fill-opacity="0.5" stroke="#4b5563" stroke-width="1.4"/><circle cx="1250.2" cy="656.8" r="2.8" fill="#c4c7cc" fill-opacity="0.5" stroke="#4b5563" stroke-width="1.4"/><circle cx="1271.9" cy="647.7" r="2.8" fill="#c4c7cc" fill-opacity="0.5" stroke="#4b5563" stroke-width="1.4"/><circle cx="1282.6" cy="655.1" r="2.8" fill="#c4c7cc" fill-opacity="0.5" stroke="#4b5563" stroke-width="1.4"/><circle cx="1282.8" cy="620.9" r="2.8" fill="#c4c7cc" fill-opacity="0.5" stroke="#4b5563" stroke-width="1.4"/><circle cx="1277.0" cy="672.9" r="2.8" fill="#c4c7cc" fill-opacity="0.5" stroke="#4b5563" stroke-width="1.4"/><circle cx="1285.1" cy="628.4" r="2.8" fill="#c4c7cc" fill-opacity="0.5" stroke="#4b5563" stroke-width="1.4"/><circle cx="1255.7" cy="683.0" r="2.8" fill="#c4c7cc" fill-opacity="0.5" stroke="#4b5563" stroke-width="1.4"/><circle cx="1250.9" cy="689.9" r="2.8" fill="#c4c7cc" fill-opacity="0.5" stroke="#4b5563" stroke-width="1.4"/><circle cx="1404.3" cy="430.7" r="2.8" fill="#c4c7cc" fill-opacity="0.5" stroke="#4b5563" stroke-width="1.4"/><circle cx="1313.5" cy="478.1" r="2.8" fill="#c4c7cc" fill-opacity="0.5" stroke="#4b5563" stroke-width="1.4"/><circle cx="1316.3" cy="427.8" r="2.8" fill="#c4c7cc" fill-opacity="0.5" stroke="#4b5563" stroke-width="1.4"/><circle cx="1396.5" cy="453.7" r="2.8" fill="#c4c7cc" fill-opacity="0.5" stroke="#4b5563" stroke-width="1.4"/><circle cx="1390.6" cy="430.1" r="2.8" fill="#c4c7cc" fill-opacity="0.5" stroke="#4b5563" stroke-width="1.4"/><circle cx="1336.4" cy="474.8" r="2.8" fill="#c4c7cc" fill-opacity="0.5" stroke="#4b5563" stroke-width="1.4"/><circle cx="1282.5" cy="436.1" r="2.8" fill="#c4c7cc" fill-opacity="0.5" stroke="#4b5563" stroke-width="1.4"/><circle cx="1375.5" cy="492.9" r="2.8" fill="#c4c7cc" fill-opacity="0.5" stroke="#4b5563" stroke-width="1.4"/><circle cx="1415.6" cy="429.2" r="2.8" fill="#c4c7cc" fill-opacity="0.5" stroke="#4b5563" stroke-width="1.4"/><circle cx="1350.8" cy="480.7" r="2.8" fill="#c4c7cc" fill-opacity="0.5" stroke="#4b5563" stroke-width="1.4"/><circle cx="1350.4" cy="474.9" r="2.8" fill="#c4c7cc" fill-opacity="0.5" stroke="#4b5563" stroke-width="1.4"/><circle cx="1306.5" cy="425.6" r="2.8" fill="#c4c7cc" fill-opacity="0.5" stroke="#4b5563" stroke-width="1.4"/><circle cx="1294.9" cy="423.0" r="2.8" fill="#c4c7cc" fill-opacity="0.5" stroke="#4b5563" stroke-width="1.4"/><circle cx="1357.2" cy="461.2" r="2.8" fill="#c4c7cc" fill-opacity="0.5" stroke="#4b5563" stroke-width="1.4"/><circle cx="1359.6" cy="431.7" r="2.8" fill="#c4c7cc" fill-opacity="0.5" stroke="#4b5563" stroke-width="1.4"/><circle cx="1305.8" cy="436.3" r="2.8" fill="#c4c7cc" fill-opacity="0.5" stroke="#4b5563" stroke-width="1.4"/><circle cx="1397.6" cy="499.2" r="2.8" fill="#c4c7cc" fill-opacity="0.5" stroke="#4b5563" stroke-width="1.4"/><circle cx="1409.8" cy="427.6" r="2.8" fill="#c4c7cc" fill-opacity="0.5" stroke="#4b5563" stroke-width="1.4"/><circle cx="1288.7" cy="496.1" r="2.8" fill="#c4c7cc" fill-opacity="0.5" stroke="#4b5563" stroke-width="1.4"/><circle cx="1344.7" cy="481.2" r="2.8" fill="#c4c7cc" fill-opacity="0.5" stroke="#4b5563" stroke-width="1.4"/><circle cx="1472.5" cy="457.4" r="2.8" fill="#c4c7cc" fill-opacity="0.5" stroke="#4b5563" stroke-width="1.4"/><circle cx="1497.0" cy="454.4" r="2.8" fill="#c4c7cc" fill-opacity="0.5" stroke="#4b5563" stroke-width="1.4"/><circle cx="1508.1" cy="421.1" r="2.8" fill="#c4c7cc" fill-opacity="0.5" stroke="#4b5563" stroke-width="1.4"/><circle cx="1521.1" cy="487.5" r="2.8" fill="#c4c7cc" fill-opacity="0.5" stroke="#4b5563" stroke-width="1.4"/><circle cx="1453.6" cy="456.3" r="2.8" fill="#c4c7cc" fill-opacity="0.5" stroke="#4b5563" stroke-width="1.4"/><circle cx="1526.1" cy="452.4" r="2.8" fill="#c4c7cc" fill-opacity="0.5" stroke="#4b5563" stroke-width="1.4"/><circle cx="1455.4" cy="433.2" r="2.8" fill="#c4c7cc" fill-opacity="0.5" stroke="#4b5563" stroke-width="1.4"/><circle cx="1496.6" cy="421.2" r="2.8" fill="#c4c7cc" fill-opacity="0.5" stroke="#4b5563" stroke-width="1.4"/><circle cx="1546.1" cy="484.1" r="2.8" fill="#c4c7cc" fill-opacity="0.5" stroke="#4b5563" stroke-width="1.4"/><circle cx="1521.6" cy="488.9" r="2.8" fill="#c4c7cc" fill-opacity="0.5" stroke="#4b5563" stroke-width="1.4"/><circle cx="1511.8" cy="452.4" r="2.8" fill="#c4c7cc" fill-opacity="0.5" stroke="#4b5563" stroke-width="1.4"/><circle cx="1507.9" cy="460.3" r="2.8" fill="#c4c7cc" fill-opacity="0.5" stroke="#4b5563" stroke-width="1.4"/><circle cx="1557.7" cy="484.4" r="2.8" fill="#c4c7cc" fill-opacity="0.5" stroke="#4b5563" stroke-width="1.4"/><circle cx="1463.6" cy="492.9" r="2.8" fill="#c4c7cc" fill-opacity="0.5" stroke="#4b5563" stroke-width="1.4"/><circle cx="1526.8" cy="482.2" r="2.8" fill="#c4c7cc" fill-opacity="0.5" stroke="#4b5563" stroke-width="1.4"/><circle cx="1535.9" cy="452.5" r="2.8" fill="#c4c7cc" fill-opacity="0.5" stroke="#4b5563" stroke-width="1.4"/><circle cx="1546.6" cy="490.4" r="2.8" fill="#c4c7cc" fill-opacity="0.5" stroke="#4b5563" stroke-width="1.4"/><circle cx="1520.3" cy="481.4" r="2.8" fill="#c4c7cc" fill-opacity="0.5" stroke="#4b5563" stroke-width="1.4"/><circle cx="1529.5" cy="452.5" r="2.8" fill="#c4c7cc" fill-opacity="0.5" stroke="#4b5563" stroke-width="1.4"/><circle cx="1523.9" cy="425.6" r="2.8" fill="#c4c7cc" fill-opacity="0.5" stroke="#4b5563" stroke-width="1.4"/><circle cx="1474.4" cy="457.5" r="2.8" fill="#c4c7cc" fill-opacity="0.5" stroke="#4b5563" stroke-width="1.4"/><circle cx="1431.4" cy="448.5" r="2.8" fill="#c4c7cc" fill-opacity="0.5" stroke="#4b5563" stroke-width="1.4"/><circle cx="1513.0" cy="469.9" r="2.8" fill="#c4c7cc" fill-opacity="0.5" stroke="#4b5563" stroke-width="1.4"/><circle cx="1460.2" cy="495.6" r="2.8" fill="#c4c7cc" fill-opacity="0.5" stroke="#4b5563" stroke-width="1.4"/><circle cx="1516.6" cy="447.0" r="2.8" fill="#c4c7cc" fill-opacity="0.5" stroke="#4b5563" stroke-width="1.4"/><circle cx="1515.8" cy="465.6" r="2.8" fill="#c4c7cc" fill-opacity="0.5" stroke="#4b5563" stroke-width="1.4"/><circle cx="1499.3" cy="451.2" r="2.8" fill="#c4c7cc" fill-opacity="0.5" stroke="#4b5563" stroke-width="1.4"/><circle cx="1560.0" cy="471.4" r="2.8" fill="#c4c7cc" fill-opacity="0.5" stroke="#4b5563" stroke-width="1.4"/><circle cx="1521.2" cy="480.9" r="2.8" fill="#c4c7cc" fill-opacity="0.5" stroke="#4b5563" stroke-width="1.4"/><circle cx="1557.4" cy="421.8" r="2.8" fill="#c4c7cc" fill-opacity="0.5" stroke="#4b5563" stroke-width="1.4"/><circle cx="833.6" cy="118.7" r="2.8" fill="#c4c7cc" fill-opacity="0.5" stroke="#4b5563" stroke-width="1.4"/><circle cx="770.0" cy="144.2" r="2.8" fill="#c4c7cc" fill-opacity="0.5" stroke="#4b5563" stroke-width="1.4"/><circle cx="818.3" cy="144.2" r="2.8" fill="#c4c7cc" fill-opacity="0.5" stroke="#4b5563" stroke-width="1.4"/><circle cx="704.3" cy="123.0" r="2.8" fill="#c4c7cc" fill-opacity="0.5" stroke="#4b5563" stroke-width="1.4"/><circle cx="706.8" cy="125.9" r="2.8" fill="#c4c7cc" fill-opacity="0.5" stroke="#4b5563" stroke-width="1.4"/><circle cx="697.9" cy="133.2" r="2.8" fill="#c4c7cc" fill-opacity="0.5" stroke="#4b5563" stroke-width="1.4"/><circle cx="658.5" cy="162.0" r="2.8" fill="#c4c7cc" fill-opacity="0.5" stroke="#4b5563" stroke-width="1.4"/><circle cx="695.6" cy="163.3" r="2.8" fill="#c4c7cc" fill-opacity="0.5" stroke="#4b5563" stroke-width="1.4"/><circle cx="703.8" cy="154.9" r="2.8" fill="#c4c7cc" fill-opacity="0.5" stroke="#4b5563" stroke-width="1.4"/><circle cx="700.5" cy="180.1" r="2.8" fill="#c4c7cc" fill-opacity="0.5" stroke="#4b5563" stroke-width="1.4"/><circle cx="665.6" cy="182.4" r="2.8" fill="#c4c7cc" fill-opacity="0.5" stroke="#4b5563" stroke-width="1.4"/><circle cx="663.0" cy="194.6" r="2.8" fill="#c4c7cc" fill-opacity="0.5" stroke="#4b5563" stroke-width="1.4"/><circle cx="681.4" cy="206.6" r="2.8" fill="#c4c7cc" fill-opacity="0.5" stroke="#4b5563" stroke-width="1.4"/><circle cx="798.5" cy="168.9" r="2.8" fill="#c4c7cc" fill-opacity="0.5" stroke="#4b5563" stroke-width="1.4"/><circle cx="802.6" cy="170.4" r="2.8" fill="#c4c7cc" fill-opacity="0.5" stroke="#4b5563" stroke-width="1.4"/><circle cx="797.5" cy="173.0" r="2.8" fill="#c4c7cc" fill-opacity="0.5" stroke="#4b5563" stroke-width="1.4"/><circle cx="775.0" cy="180.1" r="2.8" fill="#c4c7cc" fill-opacity="0.5" stroke="#4b5563" stroke-width="1.4"/><circle cx="754.7" cy="193.3" r="2.8" fill="#c4c7cc" fill-opacity="0.5" stroke="#4b5563" stroke-width="1.4"/><circle cx="822.9" cy="186.2" r="2.8" fill="#c4c7cc" fill-opacity="0.5" stroke="#4b5563" stroke-width="1.4"/><circle cx="826.0" cy="198.4" r="2.8" fill="#c4c7cc" fill-opacity="0.5" stroke="#4b5563" stroke-width="1.4"/><circle cx="810.7" cy="207.8" r="2.8" fill="#c4c7cc" fill-opacity="0.5" stroke="#4b5563" stroke-width="1.4"/><circle cx="861.6" cy="183.7" r="2.8" fill="#c4c7cc" fill-opacity="0.5" stroke="#4b5563" stroke-width="1.4"/><circle cx="725.4" cy="219.8" r="2.8" fill="#c4c7cc" fill-opacity="0.5" stroke="#4b5563" stroke-width="1.4"/><circle cx="721.6" cy="221.8" r="2.8" fill="#c4c7cc" fill-opacity="0.5" stroke="#4b5563" stroke-width="1.4"/><circle cx="707.6" cy="229.5" r="2.8" fill="#c4c7cc" fill-opacity="0.5" stroke="#4b5563" stroke-width="1.4"/><circle cx="705.0" cy="235.3" r="2.8" fill="#c4c7cc" fill-opacity="0.5" stroke="#4b5563" stroke-width="1.4"/><circle cx="663.0" cy="235.1" r="2.8" fill="#c4c7cc" fill-opacity="0.5" stroke="#4b5563" stroke-width="1.4"/><circle cx="669.2" cy="231.5" r="2.8" fill="#c4c7cc" fill-opacity="0.5" stroke="#4b5563" stroke-width="1.4"/><circle cx="691.8" cy="244.8" r="2.8" fill="#c4c7cc" fill-opacity="0.5" stroke="#4b5563" stroke-width="1.4"/><circle cx="750.9" cy="251.9" r="2.8" fill="#c4c7cc" fill-opacity="0.5" stroke="#4b5563" stroke-width="1.4"/><circle cx="759.3" cy="247.3" r="2.8" fill="#c4c7cc" fill-opacity="0.5" stroke="#4b5563" stroke-width="1.4"/><circle cx="707.6" cy="268.9" r="2.8" fill="#c4c7cc" fill-opacity="0.5" stroke="#4b5563" stroke-width="1.4"/><circle cx="717.3" cy="271.5" r="2.8" fill="#c4c7cc" fill-opacity="0.5" stroke="#4b5563" stroke-width="1.4"/><circle cx="696.9" cy="288.0" r="2.8" fill="#c4c7cc" fill-opacity="0.5" stroke="#4b5563" stroke-width="1.4"/><circle cx="704.3" cy="287.0" r="2.8" fill="#c4c7cc" fill-opacity="0.5" stroke="#4b5563" stroke-width="1.4"/><circle cx="828.5" cy="247.3" r="2.8" fill="#c4c7cc" fill-opacity="0.5" stroke="#4b5563" stroke-width="1.4"/><circle cx="825.5" cy="251.1" r="2.8" fill="#c4c7cc" fill-opacity="0.5" stroke="#4b5563" stroke-width="1.4"/><circle cx="832.8" cy="249.8" r="2.8" fill="#c4c7cc" fill-opacity="0.5" stroke="#4b5563" stroke-width="1.4"/><circle cx="848.9" cy="255.4" r="2.8" fill="#c4c7cc" fill-opacity="0.5" stroke="#4b5563" stroke-width="1.4"/><circle cx="852.7" cy="261.3" r="2.8" fill="#c4c7cc" fill-opacity="0.5" stroke="#4b5563" stroke-width="1.4"/><circle cx="858.6" cy="266.4" r="2.8" fill="#c4c7cc" fill-opacity="0.5" stroke="#4b5563" stroke-width="1.4"/><circle cx="893.4" cy="246.0" r="2.8" fill="#c4c7cc" fill-opacity="0.5" stroke="#4b5563" stroke-width="1.4"/><circle cx="900.6" cy="247.3" r="2.8" fill="#c4c7cc" fill-opacity="0.5" stroke="#4b5563" stroke-width="1.4"/><circle cx="898.5" cy="152.6" r="2.8" fill="#c4c7cc" fill-opacity="0.5" stroke="#4b5563" stroke-width="1.4"/><circle cx="901.8" cy="160.7" r="2.8" fill="#c4c7cc" fill-opacity="0.5" stroke="#4b5563" stroke-width="1.4"/><circle cx="935.4" cy="165.8" r="2.8" fill="#c4c7cc" fill-opacity="0.5" stroke="#4b5563" stroke-width="1.4"/><circle cx="938.0" cy="169.1" r="2.8" fill="#c4c7cc" fill-opacity="0.5" stroke="#4b5563" stroke-width="1.4"/><circle cx="950.7" cy="212.4" r="2.8" fill="#c4c7cc" fill-opacity="0.5" stroke="#4b5563" stroke-width="1.4"/><circle cx="954.5" cy="211.7" r="2.8" fill="#c4c7cc" fill-opacity="0.5" stroke="#4b5563" stroke-width="1.4"/><circle cx="949.4" cy="216.7" r="2.8" fill="#c4c7cc" fill-opacity="0.5" stroke="#4b5563" stroke-width="1.4"/><circle cx="939.3" cy="206.6" r="2.8" fill="#c4c7cc" fill-opacity="0.5" stroke="#4b5563" stroke-width="1.4"/><circle cx="938.0" cy="272.8" r="2.8" fill="#c4c7cc" fill-opacity="0.5" stroke="#4b5563" stroke-width="1.4"/><circle cx="789.6" cy="278.6" r="2.8" fill="#c4c7cc" fill-opacity="0.5" stroke="#4b5563" stroke-width="1.4"/><circle cx="767.4" cy="291.9" r="2.8" fill="#c4c7cc" fill-opacity="0.5" stroke="#4b5563" stroke-width="1.4"/><circle cx="772.5" cy="301.3" r="2.8" fill="#c4c7cc" fill-opacity="0.5" stroke="#4b5563" stroke-width="1.4"/><circle cx="779.6" cy="301.3" r="2.8" fill="#c4c7cc" fill-opacity="0.5" stroke="#4b5563" stroke-width="1.4"/><circle cx="784.5" cy="301.3" r="2.8" fill="#c4c7cc" fill-opacity="0.5" stroke="#4b5563" stroke-width="1.4"/><circle cx="828.5" cy="269.7" r="2.8" fill="#c4c7cc" fill-opacity="0.5" stroke="#4b5563" stroke-width="1.4"/><circle cx="834.9" cy="274.8" r="2.8" fill="#c4c7cc" fill-opacity="0.5" stroke="#4b5563" stroke-width="1.4"/><circle cx="844.3" cy="283.5" r="2.8" fill="#c4c7cc" fill-opacity="0.5" stroke="#4b5563" stroke-width="1.4"/><circle cx="805.6" cy="309.7" r="2.8" fill="#c4c7cc" fill-opacity="0.5" stroke="#4b5563" stroke-width="1.4"/><circle cx="786.8" cy="325.0" r="2.8" fill="#c4c7cc" fill-opacity="0.5" stroke="#4b5563" stroke-width="1.4"/><circle cx="786.8" cy="330.0" r="2.8" fill="#c4c7cc" fill-opacity="0.5" stroke="#4b5563" stroke-width="1.4"/><circle cx="878.2" cy="316.8" r="2.8" fill="#c4c7cc" fill-opacity="0.5" stroke="#4b5563" stroke-width="1.4"/><circle cx="908.2" cy="328.8" r="2.8" fill="#c4c7cc" fill-opacity="0.5" stroke="#4b5563" stroke-width="1.4"/><circle cx="911.3" cy="335.1" r="2.8" fill="#c4c7cc" fill-opacity="0.5" stroke="#4b5563" stroke-width="1.4"/><circle cx="906.2" cy="322.4" r="2.8" fill="#c4c7cc" fill-opacity="0.5" stroke="#4b5563" stroke-width="1.4"/><circle cx="887.8" cy="332.6" r="2.8" fill="#c4c7cc" fill-opacity="0.5" stroke="#4b5563" stroke-width="1.4"/><circle cx="887.8" cy="337.2" r="2.8" fill="#c4c7cc" fill-opacity="0.5" stroke="#4b5563" stroke-width="1.4"/><circle cx="822.9" cy="337.2" r="2.8" fill="#c4c7cc" fill-opacity="0.5" stroke="#4b5563" stroke-width="1.4"/><circle cx="838.7" cy="334.6" r="2.8" fill="#c4c7cc" fill-opacity="0.5" stroke="#4b5563" stroke-width="1.4"/><circle cx="852.7" cy="338.4" r="2.8" fill="#c4c7cc" fill-opacity="0.5" stroke="#4b5563" stroke-width="1.4"/><circle cx="864.7" cy="341.0" r="2.8" fill="#c4c7cc" fill-opacity="0.5" stroke="#4b5563" stroke-width="1.4"/><circle cx="936.7" cy="336.4" r="2.8" fill="#c4c7cc" fill-opacity="0.5" stroke="#4b5563" stroke-width="1.4"/><circle cx="924.0" cy="346.1" r="2.8" fill="#c4c7cc" fill-opacity="0.5" stroke="#4b5563" stroke-width="1.4"/><circle cx="875.6" cy="350.4" r="2.8" fill="#c4c7cc" fill-opacity="0.5" stroke="#4b5563" stroke-width="1.4"/><circle cx="818.3" cy="360.1" r="2.8" fill="#c4c7cc" fill-opacity="0.5" stroke="#4b5563" stroke-width="1.4"/><circle cx="822.9" cy="365.2" r="2.8" fill="#c4c7cc" fill-opacity="0.5" stroke="#4b5563" stroke-width="1.4"/><circle cx="818.3" cy="369.5" r="2.8" fill="#c4c7cc" fill-opacity="0.5" stroke="#4b5563" stroke-width="1.4"/><circle cx="814.5" cy="374.6" r="2.8" fill="#c4c7cc" fill-opacity="0.5" stroke="#4b5563" stroke-width="1.4"/><circle cx="941.8" cy="368.7" r="2.8" fill="#c4c7cc" fill-opacity="0.5" stroke="#4b5563" stroke-width="1.4"/><circle cx="966.0" cy="354.2" r="2.8" fill="#c4c7cc" fill-opacity="0.5" stroke="#4b5563" stroke-width="1.4"/><circle cx="960.9" cy="407.2" r="2.8" fill="#c4c7cc" fill-opacity="0.5" stroke="#4b5563" stroke-width="1.4"/><circle cx="1000.3" cy="102.2" r="2.8" fill="#c4c7cc" fill-opacity="0.5" stroke="#4b5563" stroke-width="1.4"/><circle cx="1161.2" cy="117.5" r="2.8" fill="#c4c7cc" fill-opacity="0.5" stroke="#4b5563" stroke-width="1.4"/><circle cx="1172.7" cy="125.1" r="2.8" fill="#c4c7cc" fill-opacity="0.5" stroke="#4b5563" stroke-width="1.4"/><circle cx="1246.5" cy="100.9" r="2.8" fill="#c4c7cc" fill-opacity="0.5" stroke="#4b5563" stroke-width="1.4"/><circle cx="1114.1" cy="157.4" r="2.8" fill="#c4c7cc" fill-opacity="0.5" stroke="#4b5563" stroke-width="1.4"/><circle cx="1165.0" cy="157.4" r="2.8" fill="#c4c7cc" fill-opacity="0.5" stroke="#4b5563" stroke-width="1.4"/><circle cx="1171.4" cy="164.6" r="2.8" fill="#c4c7cc" fill-opacity="0.5" stroke="#4b5563" stroke-width="1.4"/><circle cx="1056.8" cy="185.7" r="2.8" fill="#c4c7cc" fill-opacity="0.5" stroke="#4b5563" stroke-width="1.4"/><circle cx="1041.0" cy="213.7" r="2.8" fill="#c4c7cc" fill-opacity="0.5" stroke="#4b5563" stroke-width="1.4"/><circle cx="1145.4" cy="236.6" r="2.8" fill="#c4c7cc" fill-opacity="0.5" stroke="#4b5563" stroke-width="1.4"/><circle cx="1028.3" cy="261.3" r="2.8" fill="#c4c7cc" fill-opacity="0.5" stroke="#4b5563" stroke-width="1.4"/><circle cx="1032.9" cy="260.5" r="2.8" fill="#c4c7cc" fill-opacity="0.5" stroke="#4b5563" stroke-width="1.4"/><circle cx="1064.0" cy="258.0" r="2.8" fill="#c4c7cc" fill-opacity="0.5" stroke="#4b5563" stroke-width="1.4"/><circle cx="1049.7" cy="298.7" r="2.8" fill="#c4c7cc" fill-opacity="0.5" stroke="#4b5563" stroke-width="1.4"/><circle cx="1086.1" cy="290.1" r="2.8" fill="#c4c7cc" fill-opacity="0.5" stroke="#4b5563" stroke-width="1.4"/><circle cx="1111.6" cy="314.8" r="2.8" fill="#c4c7cc" fill-opacity="0.5" stroke="#4b5563" stroke-width="1.4"/><circle cx="1130.1" cy="307.1" r="2.8" fill="#c4c7cc" fill-opacity="0.5" stroke="#4b5563" stroke-width="1.4"/><circle cx="1148.0" cy="330.0" r="2.8" fill="#c4c7cc" fill-opacity="0.5" stroke="#4b5563" stroke-width="1.4"/><circle cx="1007.2" cy="362.4" r="2.8" fill="#c4c7cc" fill-opacity="0.5" stroke="#4b5563" stroke-width="1.4"/><circle cx="1023.2" cy="358.8" r="2.8" fill="#c4c7cc" fill-opacity="0.5" stroke="#4b5563" stroke-width="1.4"/><circle cx="1019.4" cy="366.9" r="2.8" fill="#c4c7cc" fill-opacity="0.5" stroke="#4b5563" stroke-width="1.4"/><circle cx="1061.4" cy="353.7" r="2.8" fill="#c4c7cc" fill-opacity="0.5" stroke="#4b5563" stroke-width="1.4"/><circle cx="1263.0" cy="360.6" r="2.8" fill="#c4c7cc" fill-opacity="0.5" stroke="#4b5563" stroke-width="1.4"/><circle cx="1291.0" cy="182.4" r="2.8" fill="#c4c7cc" fill-opacity="0.5" stroke="#4b5563" stroke-width="1.4"/><circle cx="1293.1" cy="186.2" r="2.8" fill="#c4c7cc" fill-opacity="0.5" stroke="#4b5563" stroke-width="1.4"/><circle cx="1310.9" cy="179.8" r="2.8" fill="#c4c7cc" fill-opacity="0.5" stroke="#4b5563" stroke-width="1.4"/><circle cx="1309.6" cy="195.6" r="2.8" fill="#c4c7cc" fill-opacity="0.5" stroke="#4b5563" stroke-width="1.4"/><circle cx="1319.6" cy="195.6" r="2.8" fill="#c4c7cc" fill-opacity="0.5" stroke="#4b5563" stroke-width="1.4"/><circle cx="1313.5" cy="204.0" r="2.8" fill="#c4c7cc" fill-opacity="0.5" stroke="#4b5563" stroke-width="1.4"/><circle cx="1313.5" cy="211.1" r="2.8" fill="#c4c7cc" fill-opacity="0.5" stroke="#4b5563" stroke-width="1.4"/><circle cx="1335.6" cy="211.1" r="2.8" fill="#c4c7cc" fill-opacity="0.5" stroke="#4b5563" stroke-width="1.4"/><circle cx="1349.6" cy="203.5" r="2.8" fill="#c4c7cc" fill-opacity="0.5" stroke="#4b5563" stroke-width="1.4"/><circle cx="1358.5" cy="211.1" r="2.8" fill="#c4c7cc" fill-opacity="0.5" stroke="#4b5563" stroke-width="1.4"/><circle cx="1362.3" cy="211.1" r="2.8" fill="#c4c7cc" fill-opacity="0.5" stroke="#4b5563" stroke-width="1.4"/><circle cx="1363.6" cy="219.3" r="2.8" fill="#c4c7cc" fill-opacity="0.5" stroke="#4b5563" stroke-width="1.4"/><circle cx="1402.6" cy="193.3" r="2.8" fill="#c4c7cc" fill-opacity="0.5" stroke="#4b5563" stroke-width="1.4"/><circle cx="1428.5" cy="237.6" r="2.8" fill="#c4c7cc" fill-opacity="0.5" stroke="#4b5563" stroke-width="1.4"/><circle cx="1429.8" cy="256.7" r="2.8" fill="#c4c7cc" fill-opacity="0.5" stroke="#4b5563" stroke-width="1.4"/><circle cx="1372.5" cy="267.7" r="2.8" fill="#c4c7cc" fill-opacity="0.5" stroke="#4b5563" stroke-width="1.4"/><circle cx="1380.7" cy="266.4" r="2.8" fill="#c4c7cc" fill-opacity="0.5" stroke="#4b5563" stroke-width="1.4"/><circle cx="1395.9" cy="274.8" r="2.8" fill="#c4c7cc" fill-opacity="0.5" stroke="#4b5563" stroke-width="1.4"/><circle cx="1418.3" cy="281.7" r="2.8" fill="#c4c7cc" fill-opacity="0.5" stroke="#4b5563" stroke-width="1.4"/><circle cx="1425.5" cy="281.7" r="2.8" fill="#c4c7cc" fill-opacity="0.5" stroke="#4b5563" stroke-width="1.4"/><circle cx="1434.9" cy="297.7" r="2.8" fill="#c4c7cc" fill-opacity="0.5" stroke="#4b5563" stroke-width="1.4"/><circle cx="1450.2" cy="99.6" r="2.8" fill="#c4c7cc" fill-opacity="0.5" stroke="#4b5563" stroke-width="1.4"/><circle cx="1478.2" cy="341.0" r="2.8" fill="#c4c7cc" fill-opacity="0.5" stroke="#4b5563" stroke-width="1.4"/><circle cx="1535.5" cy="293.1" r="2.8" fill="#c4c7cc" fill-opacity="0.5" stroke="#4b5563" stroke-width="1.4"/><circle cx="1540.5" cy="288.0" r="2.8" fill="#c4c7cc" fill-opacity="0.5" stroke="#4b5563" stroke-width="1.4"/><circle cx="1287.2" cy="345.3" r="2.8" fill="#c4c7cc" fill-opacity="0.5" stroke="#4b5563" stroke-width="1.4"/><circle cx="1296.6" cy="330.0" r="2.8" fill="#c4c7cc" fill-opacity="0.5" stroke="#4b5563" stroke-width="1.4"/><circle cx="1301.2" cy="330.0" r="2.8" fill="#c4c7cc" fill-opacity="0.5" stroke="#4b5563" stroke-width="1.4"/><circle cx="1291.8" cy="360.6" r="2.8" fill="#c4c7cc" fill-opacity="0.5" stroke="#4b5563" stroke-width="1.4"/><circle cx="1296.6" cy="368.2" r="2.8" fill="#c4c7cc" fill-opacity="0.5" stroke="#4b5563" stroke-width="1.4"/><circle cx="1330.5" cy="330.0" r="2.8" fill="#c4c7cc" fill-opacity="0.5" stroke="#4b5563" stroke-width="1.4"/><circle cx="1317.0" cy="344.0" r="2.8" fill="#c4c7cc" fill-opacity="0.5" stroke="#4b5563" stroke-width="1.4"/><circle cx="1321.6" cy="346.1" r="2.8" fill="#c4c7cc" fill-opacity="0.5" stroke="#4b5563" stroke-width="1.4"/><circle cx="1291.2" cy="182.3" r="2.8" fill="#c4c7cc" fill-opacity="0.5" stroke="#4b5563" stroke-width="1.4"/><circle cx="1309.8" cy="195.8" r="2.8" fill="#c4c7cc" fill-opacity="0.5" stroke="#4b5563" stroke-width="1.4"/><circle cx="1319.2" cy="195.8" r="2.8" fill="#c4c7cc" fill-opacity="0.5" stroke="#4b5563" stroke-width="1.4"/><circle cx="1313.3" cy="203.7" r="2.8" fill="#c4c7cc" fill-opacity="0.5" stroke="#4b5563" stroke-width="1.4"/><circle cx="1313.3" cy="210.7" r="2.8" fill="#c4c7cc" fill-opacity="0.5" stroke="#4b5563" stroke-width="1.4"/><circle cx="1322.6" cy="212.1" r="2.8" fill="#c4c7cc" fill-opacity="0.5" stroke="#4b5563" stroke-width="1.4"/><circle cx="1349.4" cy="203.7" r="2.8" fill="#c4c7cc" fill-opacity="0.5" stroke="#4b5563" stroke-width="1.4"/><circle cx="1337.3" cy="212.6" r="2.8" fill="#c4c7cc" fill-opacity="0.5" stroke="#4b5563" stroke-width="1.4"/><circle cx="1359.9" cy="210.7" r="2.8" fill="#c4c7cc" fill-opacity="0.5" stroke="#4b5563" stroke-width="1.4"/><circle cx="1363.4" cy="219.6" r="2.8" fill="#c4c7cc" fill-opacity="0.5" stroke="#4b5563" stroke-width="1.4"/><circle cx="1401.7" cy="192.8" r="2.8" fill="#c4c7cc" fill-opacity="0.5" stroke="#4b5563" stroke-width="1.4"/><circle cx="1428.5" cy="237.7" r="2.8" fill="#c4c7cc" fill-opacity="0.5" stroke="#4b5563" stroke-width="1.4"/><circle cx="1429.7" cy="256.8" r="2.8" fill="#c4c7cc" fill-opacity="0.5" stroke="#4b5563" stroke-width="1.4"/><circle cx="1372.2" cy="267.7" r="2.8" fill="#c4c7cc" fill-opacity="0.5" stroke="#4b5563" stroke-width="1.4"/><circle cx="1380.8" cy="266.6" r="2.8" fill="#c4c7cc" fill-opacity="0.5" stroke="#4b5563" stroke-width="1.4"/><circle cx="1395.9" cy="274.7" r="2.8" fill="#c4c7cc" fill-opacity="0.5" stroke="#4b5563" stroke-width="1.4"/><circle cx="1417.6" cy="281.7" r="2.8" fill="#c4c7cc" fill-opacity="0.5" stroke="#4b5563" stroke-width="1.4"/><circle cx="1425.0" cy="281.7" r="2.8" fill="#c4c7cc" fill-opacity="0.5" stroke="#4b5563" stroke-width="1.4"/><circle cx="1336.6" cy="274.7" r="2.8" fill="#c4c7cc" fill-opacity="0.5" stroke="#4b5563" stroke-width="1.4"/><circle cx="1350.6" cy="259.1" r="2.8" fill="#c4c7cc" fill-opacity="0.5" stroke="#4b5563" stroke-width="1.4"/><circle cx="1326.1" cy="290.5" r="2.8" fill="#c4c7cc" fill-opacity="0.5" stroke="#4b5563" stroke-width="1.4"/><circle cx="1434.3" cy="297.5" r="2.8" fill="#c4c7cc" fill-opacity="0.5" stroke="#4b5563" stroke-width="1.4"/><circle cx="1535.5" cy="292.8" r="2.8" fill="#c4c7cc" fill-opacity="0.5" stroke="#4b5563" stroke-width="1.4"/><circle cx="1540.2" cy="287.5" r="2.8" fill="#c4c7cc" fill-opacity="0.5" stroke="#4b5563" stroke-width="1.4"/><circle cx="1302.9" cy="298.7" r="2.8" fill="#c4c7cc" fill-opacity="0.5" stroke="#4b5563" stroke-width="1.4"/><circle cx="1301.7" cy="330.1" r="2.8" fill="#c4c7cc" fill-opacity="0.5" stroke="#4b5563" stroke-width="1.4"/><circle cx="1330.3" cy="330.1" r="2.8" fill="#c4c7cc" fill-opacity="0.5" stroke="#4b5563" stroke-width="1.4"/><circle cx="1370.3" cy="321.5" r="2.8" fill="#c4c7cc" fill-opacity="0.5" stroke="#4b5563" stroke-width="1.4"/><circle cx="1364.5" cy="330.1" r="2.8" fill="#c4c7cc" fill-opacity="0.5" stroke="#4b5563" stroke-width="1.4"/><circle cx="1318.0" cy="344.0" r="2.8" fill="#c4c7cc" fill-opacity="0.5" stroke="#4b5563" stroke-width="1.4"/><circle cx="1321.5" cy="345.7" r="2.8" fill="#c4c7cc" fill-opacity="0.5" stroke="#4b5563" stroke-width="1.4"/><circle cx="1287.0" cy="345.7" r="2.8" fill="#c4c7cc" fill-opacity="0.5" stroke="#4b5563" stroke-width="1.4"/><circle cx="1263.3" cy="361.0" r="2.8" fill="#c4c7cc" fill-opacity="0.5" stroke="#4b5563" stroke-width="1.4"/><circle cx="1291.7" cy="361.0" r="2.8" fill="#c4c7cc" fill-opacity="0.5" stroke="#4b5563" stroke-width="1.4"/><circle cx="1297.0" cy="368.5" r="2.8" fill="#c4c7cc" fill-opacity="0.5" stroke="#4b5563" stroke-width="1.4"/><circle cx="1477.8" cy="340.5" r="2.8" fill="#c4c7cc" fill-opacity="0.5" stroke="#4b5563" stroke-width="1.4"/><circle cx="1148.1" cy="328.9" r="2.8" fill="#c4c7cc" fill-opacity="0.5" stroke="#4b5563" stroke-width="1.4"/><circle cx="1145.8" cy="236.3" r="2.8" fill="#c4c7cc" fill-opacity="0.5" stroke="#4b5563" stroke-width="1.4"/><circle cx="1211.0" cy="402.2" r="2.8" fill="#c4c7cc" fill-opacity="0.5" stroke="#4b5563" stroke-width="1.4"/><circle cx="1202.4" cy="385.9" r="2.8" fill="#c4c7cc" fill-opacity="0.5" stroke="#4b5563" stroke-width="1.4"/><circle cx="1292.4" cy="393.6" r="2.8" fill="#c4c7cc" fill-opacity="0.5" stroke="#4b5563" stroke-width="1.4"/><circle cx="1290.1" cy="398.7" r="2.8" fill="#c4c7cc" fill-opacity="0.5" stroke="#4b5563" stroke-width="1.4"/><circle cx="1350.6" cy="392.2" r="2.8" fill="#c4c7cc" fill-opacity="0.5" stroke="#4b5563" stroke-width="1.4"/><circle cx="1340.1" cy="423.8" r="2.8" fill="#c4c7cc" fill-opacity="0.5" stroke="#4b5563" stroke-width="1.4"/><circle cx="1427.3" cy="370.8" r="2.8" fill="#c4c7cc" fill-opacity="0.5" stroke="#4b5563" stroke-width="1.4"/><circle cx="1429.7" cy="384.8" r="2.8" fill="#c4c7cc" fill-opacity="0.5" stroke="#4b5563" stroke-width="1.4"/><circle cx="1446.0" cy="388.2" r="2.8" fill="#c4c7cc" fill-opacity="0.5" stroke="#4b5563" stroke-width="1.4"/><circle cx="1449.4" cy="392.9" r="2.8" fill="#c4c7cc" fill-opacity="0.5" stroke="#4b5563" stroke-width="1.4"/><circle cx="1455.3" cy="397.5" r="2.8" fill="#c4c7cc" fill-opacity="0.5" stroke="#4b5563" stroke-width="1.4"/><circle cx="1444.8" cy="396.4" r="2.8" fill="#c4c7cc" fill-opacity="0.5" stroke="#4b5563" stroke-width="1.4"/><circle cx="1440.1" cy="418.5" r="2.8" fill="#c4c7cc" fill-opacity="0.5" stroke="#4b5563" stroke-width="1.4"/><circle cx="1379.6" cy="416.2" r="2.8" fill="#c4c7cc" fill-opacity="0.5" stroke="#4b5563" stroke-width="1.4"/><circle cx="1469.2" cy="411.5" r="2.8" fill="#c4c7cc" fill-opacity="0.5" stroke="#4b5563" stroke-width="1.4"/><circle cx="1500.6" cy="415.0" r="2.8" fill="#c4c7cc" fill-opacity="0.5" stroke="#4b5563" stroke-width="1.4"/><circle cx="1539.0" cy="415.0" r="2.8" fill="#c4c7cc" fill-opacity="0.5" stroke="#4b5563" stroke-width="1.4"/><circle cx="1527.4" cy="427.8" r="2.8" fill="#c4c7cc" fill-opacity="0.5" stroke="#4b5563" stroke-width="1.4"/><circle cx="1532.7" cy="432.4" r="2.8" fill="#c4c7cc" fill-opacity="0.5" stroke="#4b5563" stroke-width="1.4"/><circle cx="1540.2" cy="427.8" r="2.8" fill="#c4c7cc" fill-opacity="0.5" stroke="#4b5563" stroke-width="1.4"/><circle cx="1513.4" cy="437.8" r="2.8" fill="#c4c7cc" fill-opacity="0.5" stroke="#4b5563" stroke-width="1.4"/><circle cx="1195.8" cy="419.6" r="2.8" fill="#c4c7cc" fill-opacity="0.5" stroke="#4b5563" stroke-width="1.4"/><circle cx="1206.3" cy="446.4" r="2.8" fill="#c4c7cc" fill-opacity="0.5" stroke="#4b5563" stroke-width="1.4"/><circle cx="1245.9" cy="449.9" r="2.8" fill="#c4c7cc" fill-opacity="0.5" stroke="#4b5563" stroke-width="1.4"/><circle cx="1264.5" cy="434.1" r="2.8" fill="#c4c7cc" fill-opacity="0.5" stroke="#4b5563" stroke-width="1.4"/><circle cx="1276.1" cy="440.1" r="2.8" fill="#c4c7cc" fill-opacity="0.5" stroke="#4b5563" stroke-width="1.4"/><circle cx="1290.1" cy="444.8" r="2.8" fill="#c4c7cc" fill-opacity="0.5" stroke="#4b5563" stroke-width="1.4"/><circle cx="1295.9" cy="437.8" r="2.8" fill="#c4c7cc" fill-opacity="0.5" stroke="#4b5563" stroke-width="1.4"/><circle cx="1300.1" cy="430.1" r="2.8" fill="#c4c7cc" fill-opacity="0.5" stroke="#4b5563" stroke-width="1.4"/><circle cx="1315.7" cy="443.6" r="2.8" fill="#c4c7cc" fill-opacity="0.5" stroke="#4b5563" stroke-width="1.4"/><circle cx="1333.1" cy="437.8" r="2.8" fill="#c4c7cc" fill-opacity="0.5" stroke="#4b5563" stroke-width="1.4"/><circle cx="1331.2" cy="453.4" r="2.8" fill="#c4c7cc" fill-opacity="0.5" stroke="#4b5563" stroke-width="1.4"/><circle cx="1273.1" cy="448.7" r="2.8" fill="#c4c7cc" fill-opacity="0.5" stroke="#4b5563" stroke-width="1.4"/><circle cx="1279.6" cy="448.7" r="2.8" fill="#c4c7cc" fill-opacity="0.5" stroke="#4b5563" stroke-width="1.4"/><circle cx="1285.4" cy="453.4" r="2.8" fill="#c4c7cc" fill-opacity="0.5" stroke="#4b5563" stroke-width="1.4"/><circle cx="1288.9" cy="453.4" r="2.8" fill="#c4c7cc" fill-opacity="0.5" stroke="#4b5563" stroke-width="1.4"/><circle cx="1263.3" cy="463.4" r="2.8" fill="#c4c7cc" fill-opacity="0.5" stroke="#4b5563" stroke-width="1.4"/><circle cx="1268.0" cy="463.4" r="2.8" fill="#c4c7cc" fill-opacity="0.5" stroke="#4b5563" stroke-width="1.4"/><circle cx="1272.6" cy="464.3" r="2.8" fill="#c4c7cc" fill-opacity="0.5" stroke="#4b5563" stroke-width="1.4"/><circle cx="1265.6" cy="470.8" r="2.8" fill="#c4c7cc" fill-opacity="0.5" stroke="#4b5563" stroke-width="1.4"/><circle cx="1270.3" cy="470.8" r="2.8" fill="#c4c7cc" fill-opacity="0.5" stroke="#4b5563" stroke-width="1.4"/><circle cx="1275.0" cy="470.8" r="2.8" fill="#c4c7cc" fill-opacity="0.5" stroke="#4b5563" stroke-width="1.4"/><circle cx="1278.4" cy="471.3" r="2.8" fill="#c4c7cc" fill-opacity="0.5" stroke="#4b5563" stroke-width="1.4"/><circle cx="1274.5" cy="478.3" r="2.8" fill="#c4c7cc" fill-opacity="0.5" stroke="#4b5563" stroke-width="1.4"/><circle cx="1305.2" cy="469.0" r="2.8" fill="#c4c7cc" fill-opacity="0.5" stroke="#4b5563" stroke-width="1.4"/><circle cx="1295.9" cy="476.0" r="2.8" fill="#c4c7cc" fill-opacity="0.5" stroke="#4b5563" stroke-width="1.4"/><circle cx="1300.5" cy="476.0" r="2.8" fill="#c4c7cc" fill-opacity="0.5" stroke="#4b5563" stroke-width="1.4"/><circle cx="1315.7" cy="476.0" r="2.8" fill="#c4c7cc" fill-opacity="0.5" stroke="#4b5563" stroke-width="1.4"/><circle cx="1351.7" cy="477.3" r="2.8" fill="#c4c7cc" fill-opacity="0.5" stroke="#4b5563" stroke-width="1.4"/><circle cx="1305.2" cy="484.3" r="2.8" fill="#c4c7cc" fill-opacity="0.5" stroke="#4b5563" stroke-width="1.4"/><circle cx="1402.4" cy="453.4" r="2.8" fill="#c4c7cc" fill-opacity="0.5" stroke="#4b5563" stroke-width="1.4"/><circle cx="1415.7" cy="454.5" r="2.8" fill="#c4c7cc" fill-opacity="0.5" stroke="#4b5563" stroke-width="1.4"/><circle cx="1399.4" cy="468.5" r="2.8" fill="#c4c7cc" fill-opacity="0.5" stroke="#4b5563" stroke-width="1.4"/><circle cx="1404.1" cy="468.5" r="2.8" fill="#c4c7cc" fill-opacity="0.5" stroke="#4b5563" stroke-width="1.4"/><circle cx="1409.9" cy="468.5" r="2.8" fill="#c4c7cc" fill-opacity="0.5" stroke="#4b5563" stroke-width="1.4"/><circle cx="1398.3" cy="484.3" r="2.8" fill="#c4c7cc" fill-opacity="0.5" stroke="#4b5563" stroke-width="1.4"/><circle cx="1425.0" cy="484.3" r="2.8" fill="#c4c7cc" fill-opacity="0.5" stroke="#4b5563" stroke-width="1.4"/><circle cx="1461.1" cy="490.1" r="2.8" fill="#c4c7cc" fill-opacity="0.5" stroke="#4b5563" stroke-width="1.4"/><circle cx="1466.9" cy="488.3" r="2.8" fill="#c4c7cc" fill-opacity="0.5" stroke="#4b5563" stroke-width="1.4"/><circle cx="1472.7" cy="483.6" r="2.8" fill="#c4c7cc" fill-opacity="0.5" stroke="#4b5563" stroke-width="1.4"/><circle cx="1476.2" cy="488.3" r="2.8" fill="#c4c7cc" fill-opacity="0.5" stroke="#4b5563" stroke-width="1.4"/><circle cx="1500.6" cy="446.4" r="2.8" fill="#c4c7cc" fill-opacity="0.5" stroke="#4b5563" stroke-width="1.4"/><circle cx="1523.9" cy="446.4" r="2.8" fill="#c4c7cc" fill-opacity="0.5" stroke="#4b5563" stroke-width="1.4"/><circle cx="1537.9" cy="446.4" r="2.8" fill="#c4c7cc" fill-opacity="0.5" stroke="#4b5563" stroke-width="1.4"/><circle cx="1546.0" cy="446.4" r="2.8" fill="#c4c7cc" fill-opacity="0.5" stroke="#4b5563" stroke-width="1.4"/><circle cx="1526.2" cy="453.4" r="2.8" fill="#c4c7cc" fill-opacity="0.5" stroke="#4b5563" stroke-width="1.4"/><circle cx="1533.2" cy="453.4" r="2.8" fill="#c4c7cc" fill-opacity="0.5" stroke="#4b5563" stroke-width="1.4"/><circle cx="1509.9" cy="469.0" r="2.8" fill="#c4c7cc" fill-opacity="0.5" stroke="#4b5563" stroke-width="1.4"/><circle cx="1516.9" cy="469.0" r="2.8" fill="#c4c7cc" fill-opacity="0.5" stroke="#4b5563" stroke-width="1.4"/><circle cx="1522.7" cy="464.3" r="2.8" fill="#c4c7cc" fill-opacity="0.5" stroke="#4b5563" stroke-width="1.4"/><circle cx="1526.2" cy="468.5" r="2.8" fill="#c4c7cc" fill-opacity="0.5" stroke="#4b5563" stroke-width="1.4"/><circle cx="1532.7" cy="475.5" r="2.8" fill="#c4c7cc" fill-opacity="0.5" stroke="#4b5563" stroke-width="1.4"/><circle cx="1537.9" cy="481.3" r="2.8" fill="#c4c7cc" fill-opacity="0.5" stroke="#4b5563" stroke-width="1.4"/><circle cx="1544.4" cy="481.3" r="2.8" fill="#c4c7cc" fill-opacity="0.5" stroke="#4b5563" stroke-width="1.4"/><circle cx="1528.5" cy="481.3" r="2.8" fill="#c4c7cc" fill-opacity="0.5" stroke="#4b5563" stroke-width="1.4"/><circle cx="1518.1" cy="484.8" r="2.8" fill="#c4c7cc" fill-opacity="0.5" stroke="#4b5563" stroke-width="1.4"/><circle cx="1500.6" cy="477.8" r="2.8" fill="#c4c7cc" fill-opacity="0.5" stroke="#4b5563" stroke-width="1.4"/><circle cx="1630.2" cy="554.6" r="2.8" fill="#c4c7cc" fill-opacity="0.5" stroke="#4b5563" stroke-width="1.4"/><circle cx="1587.9" cy="686.4" r="2.8" fill="#c4c7cc" fill-opacity="0.5" stroke="#4b5563" stroke-width="1.4"/><circle cx="1601.4" cy="687.7" r="2.8" fill="#c4c7cc" fill-opacity="0.5" stroke="#4b5563" stroke-width="1.4"/><circle cx="1611.3" cy="684.5" r="2.8" fill="#c4c7cc" fill-opacity="0.5" stroke="#4b5563" stroke-width="1.4"/><circle cx="1628.5" cy="679.1" r="2.8" fill="#c4c7cc" fill-opacity="0.5" stroke="#4b5563" stroke-width="1.4"/><circle cx="1681.4" cy="680.8" r="2.8" fill="#c4c7cc" fill-opacity="0.5" stroke="#4b5563" stroke-width="1.4"/><circle cx="1676.4" cy="663.6" r="2.8" fill="#c4c7cc" fill-opacity="0.5" stroke="#4b5563" stroke-width="1.4"/><circle cx="1680.1" cy="663.6" r="2.8" fill="#c4c7cc" fill-opacity="0.5" stroke="#4b5563" stroke-width="1.4"/><circle cx="1698.6" cy="671.0" r="2.8" fill="#c4c7cc" fill-opacity="0.5" stroke="#4b5563" stroke-width="1.4"/><circle cx="1703.5" cy="672.2" r="2.8" fill="#c4c7cc" fill-opacity="0.5" stroke="#4b5563" stroke-width="1.4"/><circle cx="1720.7" cy="663.6" r="2.8" fill="#c4c7cc" fill-opacity="0.5" stroke="#4b5563" stroke-width="1.4"/><circle cx="1750.2" cy="664.8" r="2.8" fill="#c4c7cc" fill-opacity="0.5" stroke="#4b5563" stroke-width="1.4"/><circle cx="1755.1" cy="664.8" r="2.8" fill="#c4c7cc" fill-opacity="0.5" stroke="#4b5563" stroke-width="1.4"/><circle cx="1767.9" cy="663.6" r="2.8" fill="#c4c7cc" fill-opacity="0.5" stroke="#4b5563" stroke-width="1.4"/><circle cx="1792.0" cy="657.4" r="2.8" fill="#c4c7cc" fill-opacity="0.5" stroke="#4b5563" stroke-width="1.4"/><circle cx="1745.3" cy="688.2" r="2.8" fill="#c4c7cc" fill-opacity="0.5" stroke="#4b5563" stroke-width="1.4"/><circle cx="1752.7" cy="688.2" r="2.8" fill="#c4c7cc" fill-opacity="0.5" stroke="#4b5563" stroke-width="1.4"/><circle cx="1745.3" cy="695.0" r="2.8" fill="#c4c7cc" fill-opacity="0.5" stroke="#4b5563" stroke-width="1.4"/><circle cx="1769.9" cy="685.7" r="2.8" fill="#c4c7cc" fill-opacity="0.5" stroke="#4b5563" stroke-width="1.4"/><circle cx="1776.0" cy="687.7" r="2.8" fill="#c4c7cc" fill-opacity="0.5" stroke="#4b5563" stroke-width="1.4"/><circle cx="1790.0" cy="679.6" r="2.8" fill="#c4c7cc" fill-opacity="0.5" stroke="#4b5563" stroke-width="1.4"/><circle cx="1768.6" cy="703.7" r="2.8" fill="#c4c7cc" fill-opacity="0.5" stroke="#4b5563" stroke-width="1.4"/><circle cx="1718.7" cy="711.0" r="2.8" fill="#c4c7cc" fill-opacity="0.5" stroke="#4b5563" stroke-width="1.4"/><circle cx="1784.6" cy="740.5" r="2.8" fill="#c4c7cc" fill-opacity="0.5" stroke="#4b5563" stroke-width="1.4"/><circle cx="1800.6" cy="738.6" r="2.8" fill="#c4c7cc" fill-opacity="0.5" stroke="#4b5563" stroke-width="1.4"/><circle cx="1640.8" cy="749.6" r="2.8" fill="#c4c7cc" fill-opacity="0.5" stroke="#4b5563" stroke-width="1.4"/><circle cx="906.0" cy="422.0" r="2.8" fill="#c4c7cc" fill-opacity="0.5" stroke="#4b5563" stroke-width="1.4"/><circle cx="912.0" cy="427.0" r="2.8" fill="#c4c7cc" fill-opacity="0.5" stroke="#4b5563" stroke-width="1.4"/><circle cx="919.0" cy="427.0" r="2.8" fill="#c4c7cc" fill-opacity="0.5" stroke="#4b5563" stroke-width="1.4"/><circle cx="925.0" cy="427.0" r="2.8" fill="#c4c7cc" fill-opacity="0.5" stroke="#4b5563" stroke-width="1.4"/><circle cx="932.0" cy="427.0" r="2.8" fill="#c4c7cc" fill-opacity="0.5" stroke="#4b5563" stroke-width="1.4"/><circle cx="914.0" cy="434.0" r="2.8" fill="#c4c7cc" fill-opacity="0.5" stroke="#4b5563" stroke-width="1.4"/><circle cx="937.0" cy="427.0" r="2.8" fill="#c4c7cc" fill-opacity="0.5" stroke="#4b5563" stroke-width="1.4"/><circle cx="926.0" cy="353.0" r="2.8" fill="#c4c7cc" fill-opacity="0.5" stroke="#4b5563" stroke-width="1.4"/><circle cx="1120.0" cy="527.0" r="4" fill="#4b5563" stroke="#4b5563" stroke-width="2"/><circle cx="1124.0" cy="535.0" r="4" fill="#4b5563" stroke="#4b5563" stroke-width="2"/><circle cx="1130.0" cy="540.0" r="4" fill="#4b5563" stroke="#4b5563" stroke-width="2"/><circle cx="1127.0" cy="548.0" r="4" fill="#4b5563" stroke="#4b5563" stroke-width="2"/><circle cx="1118.0" cy="552.0" r="4" fill="#4b5563" stroke="#4b5563" stroke-width="2"/><circle cx="1112.0" cy="548.0" r="4" fill="#4b5563" stroke="#4b5563" stroke-width="2"/><circle cx="1126.0" cy="556.0" r="4" fill="#4b5563" stroke="#4b5563" stroke-width="2"/><circle cx="1125.0" cy="565.0" r="4" fill="#4b5563" stroke="#4b5563" stroke-width="2"/><circle cx="1125.0" cy="572.0" r="4" fill="#4b5563" stroke="#4b5563" stroke-width="2"/><circle cx="1125.0" cy="580.0" r="4" fill="#4b5563" stroke="#4b5563" stroke-width="2"/><circle cx="1128.0" cy="560.0" r="4" fill="#4b5563" stroke="#4b5563" stroke-width="2"/><circle cx="1121.0" cy="562.0" r="4" fill="#4b5563" stroke="#4b5563" stroke-width="2"/><circle cx="1123.0" cy="575.0" r="4" fill="#4b5563" stroke="#4b5563" stroke-width="2"/><circle cx="1122.0" cy="582.0" r="4" fill="#4b5563" stroke="#4b5563" stroke-width="2"/><circle cx="1129.0" cy="575.0" r="4" fill="#4b5563" stroke="#4b5563" stroke-width="2"/><circle cx="817.8" cy="246.0" r="4.6" fill="#22c55e" fill-opacity="0.85"/><circle cx="794.2" cy="286.8" r="4.6" fill="#22c55e" fill-opacity="0.85"/><circle cx="829.8" cy="279.9" r="4.6" fill="#22c55e" fill-opacity="0.85"/><circle cx="850.2" cy="300.8" r="4.6" fill="#22c55e" fill-opacity="0.85"/><circle cx="902.4" cy="211.7" r="4.6" fill="#22c55e" fill-opacity="0.85"/><circle cx="902.4" cy="216.7" r="4.6" fill="#22c55e" fill-opacity="0.85"/><circle cx="866.7" cy="332.0" r="4.6" fill="#22c55e" fill-opacity="0.85"/><circle cx="926.5" cy="340.2" r="4.6" fill="#22c55e" fill-opacity="0.85"/><circle cx="977.5" cy="350.4" r="4.6" fill="#22c55e" fill-opacity="0.85"/><circle cx="921.4" cy="402.6" r="4.6" fill="#22c55e" fill-opacity="0.85"/><circle cx="1172.7" cy="117.5" r="4.6" fill="#22c55e" fill-opacity="0.85"/><circle cx="1084.3" cy="157.4" r="4.6" fill="#22c55e" fill-opacity="0.85"/><circle cx="995.7" cy="258.8" r="4.6" fill="#22c55e" fill-opacity="0.85"/><circle cx="1043.6" cy="282.9" r="4.6" fill="#22c55e" fill-opacity="0.85"/><circle cx="1021.2" cy="298.7" r="4.6" fill="#22c55e" fill-opacity="0.85"/><circle cx="1025.0" cy="298.7" r="4.6" fill="#22c55e" fill-opacity="0.85"/><circle cx="1121.7" cy="298.2" r="4.6" fill="#22c55e" fill-opacity="0.85"/><circle cx="1128.1" cy="298.2" r="4.6" fill="#22c55e" fill-opacity="0.85"/><circle cx="1186.7" cy="314.0" r="4.6" fill="#22c55e" fill-opacity="0.85"/><circle cx="1191.8" cy="314.0" r="4.6" fill="#22c55e" fill-opacity="0.85"/><circle cx="1265.6" cy="246.0" r="4.6" fill="#22c55e" fill-opacity="0.85"/><circle cx="1252.9" cy="266.4" r="4.6" fill="#22c55e" fill-opacity="0.85"/><circle cx="1250.3" cy="304.6" r="4.6" fill="#22c55e" fill-opacity="0.85"/><circle cx="1252.9" cy="300.8" r="4.6" fill="#22c55e" fill-opacity="0.85"/><circle cx="1243.2" cy="314.8" r="4.6" fill="#22c55e" fill-opacity="0.85"/><circle cx="1158.7" cy="330.0" r="4.6" fill="#22c55e" fill-opacity="0.85"/><circle cx="1200.7" cy="337.7" r="4.6" fill="#22c55e" fill-opacity="0.85"/><circle cx="1253.4" cy="346.6" r="4.6" fill="#22c55e" fill-opacity="0.85"/><circle cx="1050.5" cy="338.4" r="4.6" fill="#22c55e" fill-opacity="0.85"/><circle cx="1046.1" cy="354.2" r="4.6" fill="#22c55e" fill-opacity="0.85"/><circle cx="1054.3" cy="360.6" r="4.6" fill="#22c55e" fill-opacity="0.85"/><circle cx="1055.6" cy="353.7" r="4.6" fill="#22c55e" fill-opacity="0.85"/><circle cx="1232.0" cy="385.3" r="4.6" fill="#22c55e" fill-opacity="0.85"/><circle cx="1244.0" cy="382.2" r="4.6" fill="#22c55e" fill-opacity="0.85"/><circle cx="1291.0" cy="377.1" r="4.6" fill="#22c55e" fill-opacity="0.85"/><circle cx="1339.4" cy="202.7" r="4.6" fill="#22c55e" fill-opacity="0.85"/><circle cx="1330.5" cy="226.4" r="4.6" fill="#22c55e" fill-opacity="0.85"/><circle cx="1315.2" cy="274.0" r="4.6" fill="#22c55e" fill-opacity="0.85"/><circle cx="1354.7" cy="290.1" r="4.6" fill="#22c55e" fill-opacity="0.85"/><circle cx="1420.9" cy="368.2" r="4.6" fill="#22c55e" fill-opacity="0.85"/><circle cx="1436.2" cy="395.0" r="4.6" fill="#22c55e" fill-opacity="0.85"/><circle cx="1265.6" cy="245.8" r="4.6" fill="#22c55e" fill-opacity="0.85"/><circle cx="1339.4" cy="202.8" r="4.6" fill="#22c55e" fill-opacity="0.85"/><circle cx="1329.6" cy="226.5" r="4.6" fill="#22c55e" fill-opacity="0.85"/><circle cx="1301.7" cy="217.2" r="4.6" fill="#22c55e" fill-opacity="0.85"/><circle cx="1315.7" cy="274.2" r="4.6" fill="#22c55e" fill-opacity="0.85"/><circle cx="1337.8" cy="281.9" r="4.6" fill="#22c55e" fill-opacity="0.85"/><circle cx="1318.7" cy="281.9" r="4.6" fill="#22c55e" fill-opacity="0.85"/><circle cx="1356.4" cy="290.5" r="4.6" fill="#22c55e" fill-opacity="0.85"/><circle cx="1349.4" cy="297.5" r="4.6" fill="#22c55e" fill-opacity="0.85"/><circle cx="1432.0" cy="273.1" r="4.6" fill="#22c55e" fill-opacity="0.85"/><circle cx="1251.7" cy="301.0" r="4.6" fill="#22c55e" fill-opacity="0.85"/><circle cx="1249.4" cy="305.6" r="4.6" fill="#22c55e" fill-opacity="0.85"/><circle cx="1242.4" cy="314.5" r="4.6" fill="#22c55e" fill-opacity="0.85"/><circle cx="1186.5" cy="314.5" r="4.6" fill="#22c55e" fill-opacity="0.85"/><circle cx="1192.4" cy="314.5" r="4.6" fill="#22c55e" fill-opacity="0.85"/><circle cx="1176.1" cy="321.9" r="4.6" fill="#22c55e" fill-opacity="0.85"/><circle cx="1158.6" cy="328.9" r="4.6" fill="#22c55e" fill-opacity="0.85"/><circle cx="1152.8" cy="314.9" r="4.6" fill="#22c55e" fill-opacity="0.85"/><circle cx="1201.0" cy="338.2" r="4.6" fill="#22c55e" fill-opacity="0.85"/><circle cx="1253.5" cy="346.4" r="4.6" fill="#22c55e" fill-opacity="0.85"/><circle cx="1231.9" cy="385.2" r="4.6" fill="#22c55e" fill-opacity="0.85"/><circle cx="1243.5" cy="382.4" r="4.6" fill="#22c55e" fill-opacity="0.85"/><circle cx="1290.8" cy="376.6" r="4.6" fill="#22c55e" fill-opacity="0.85"/><circle cx="1420.4" cy="368.5" r="4.6" fill="#22c55e" fill-opacity="0.85"/><circle cx="1452.9" cy="411.5" r="4.6" fill="#22c55e" fill-opacity="0.85"/><circle cx="1378.5" cy="408.0" r="4.6" fill="#22c55e" fill-opacity="0.85"/><circle cx="1199.3" cy="423.1" r="4.6" fill="#22c55e" fill-opacity="0.85"/><circle cx="1249.4" cy="439.4" r="4.6" fill="#22c55e" fill-opacity="0.85"/><circle cx="1249.4" cy="442.9" r="4.6" fill="#22c55e" fill-opacity="0.85"/><circle cx="1343.6" cy="437.1" r="4.6" fill="#22c55e" fill-opacity="0.85"/><circle cx="1514.6" cy="461.5" r="4.6" fill="#22c55e" fill-opacity="0.85"/><circle cx="1523.9" cy="475.5" r="4.6" fill="#22c55e" fill-opacity="0.85"/><circle cx="1291.2" cy="483.6" r="4.6" fill="#22c55e" fill-opacity="0.85"/><circle cx="1306.4" cy="475.5" r="4.6" fill="#22c55e" fill-opacity="0.85"/><circle cx="1326.1" cy="475.5" r="4.6" fill="#22c55e" fill-opacity="0.85"/><circle cx="1335.4" cy="476.6" r="4.6" fill="#22c55e" fill-opacity="0.85"/><circle cx="1400.6" cy="475.5" r="4.6" fill="#22c55e" fill-opacity="0.85"/><circle cx="1404.1" cy="483.6" r="4.6" fill="#22c55e" fill-opacity="0.85"/><circle cx="1483.2" cy="488.3" r="4.6" fill="#22c55e" fill-opacity="0.85"/><circle cx="1018.6" cy="418.9" r="4.6" fill="#22c55e" fill-opacity="0.85"/><circle cx="1012.0" cy="430.7" r="4.6" fill="#22c55e" fill-opacity="0.85"/><circle cx="1199.3" cy="423.8" r="4.6" fill="#22c55e" fill-opacity="0.85"/><circle cx="1248.5" cy="439.8" r="4.6" fill="#22c55e" fill-opacity="0.85"/><circle cx="1031.7" cy="497.1" r="4.6" fill="#22c55e" fill-opacity="0.85"/><circle cx="1061.7" cy="489.7" r="4.6" fill="#22c55e" fill-opacity="0.85"/><circle cx="1066.6" cy="487.7" r="4.6" fill="#22c55e" fill-opacity="0.85"/><circle cx="1071.5" cy="486.5" r="4.6" fill="#22c55e" fill-opacity="0.85"/><circle cx="1225.9" cy="503.7" r="4.6" fill="#22c55e" fill-opacity="0.85"/><circle cx="1164.9" cy="540.6" r="4.6" fill="#22c55e" fill-opacity="0.85"/><circle cx="1228.3" cy="534.0" r="4.6" fill="#22c55e" fill-opacity="0.85"/><circle cx="1212.8" cy="549.2" r="4.6" fill="#22c55e" fill-opacity="0.85"/><circle cx="1206.7" cy="559.0" r="4.6" fill="#22c55e" fill-opacity="0.85"/><circle cx="1206.7" cy="564.0" r="4.6" fill="#22c55e" fill-opacity="0.85"/><circle cx="1194.4" cy="573.8" r="4.6" fill="#22c55e" fill-opacity="0.85"/><circle cx="1205.5" cy="573.8" r="4.6" fill="#22c55e" fill-opacity="0.85"/><circle cx="1164.9" cy="611.9" r="4.6" fill="#22c55e" fill-opacity="0.85"/><circle cx="1169.8" cy="620.5" r="4.6" fill="#22c55e" fill-opacity="0.85"/><circle cx="1184.6" cy="620.5" r="4.6" fill="#22c55e" fill-opacity="0.85"/><circle cx="1192.0" cy="677.0" r="4.6" fill="#22c55e" fill-opacity="0.85"/><circle cx="1199.3" cy="680.7" r="4.6" fill="#22c55e" fill-opacity="0.85"/><circle cx="1290.3" cy="684.4" r="4.6" fill="#22c55e" fill-opacity="0.85"/><circle cx="1302.6" cy="695.5" r="4.6" fill="#22c55e" fill-opacity="0.85"/><circle cx="1282.9" cy="689.3" r="4.6" fill="#22c55e" fill-opacity="0.85"/><circle cx="1314.9" cy="686.9" r="4.6" fill="#22c55e" fill-opacity="0.85"/><circle cx="1327.1" cy="684.4" r="4.6" fill="#22c55e" fill-opacity="0.85"/><circle cx="1533.6" cy="642.6" r="4.6" fill="#22c55e" fill-opacity="0.85"/><circle cx="1482.0" cy="625.4" r="4.6" fill="#22c55e" fill-opacity="0.85"/><circle cx="1546.0" cy="664.7" r="4.6" fill="#22c55e" fill-opacity="0.85"/><circle cx="1559.5" cy="664.7" r="4.6" fill="#22c55e" fill-opacity="0.85"/><circle cx="1560.7" cy="670.9" r="4.6" fill="#22c55e" fill-opacity="0.85"/><circle cx="1565.6" cy="688.1" r="4.6" fill="#22c55e" fill-opacity="0.85"/><circle cx="1575.4" cy="688.1" r="4.6" fill="#22c55e" fill-opacity="0.85"/><circle cx="1332.1" cy="678.3" r="4.6" fill="#22c55e" fill-opacity="0.85"/><circle cx="1600.2" cy="666.0" r="4.6" fill="#22c55e" fill-opacity="0.85"/><circle cx="1610.0" cy="671.0" r="4.6" fill="#22c55e" fill-opacity="0.85"/><circle cx="1634.6" cy="672.2" r="4.6" fill="#22c55e" fill-opacity="0.85"/><circle cx="1667.8" cy="679.6" r="4.6" fill="#22c55e" fill-opacity="0.85"/><circle cx="1730.0" cy="671.0" r="4.6" fill="#22c55e" fill-opacity="0.85"/><circle cx="1752.7" cy="672.2" r="4.6" fill="#22c55e" fill-opacity="0.85"/><circle cx="1777.2" cy="673.4" r="4.6" fill="#22c55e" fill-opacity="0.85"/><circle cx="1720.7" cy="688.2" r="4.6" fill="#22c55e" fill-opacity="0.85"/><circle cx="1717.0" cy="688.2" r="4.6" fill="#22c55e" fill-opacity="0.85"/><circle cx="1724.4" cy="688.2" r="4.6" fill="#22c55e" fill-opacity="0.85"/><circle cx="1758.8" cy="694.3" r="4.6" fill="#22c55e" fill-opacity="0.85"/><circle cx="1720.7" cy="703.7" r="4.6" fill="#22c55e" fill-opacity="0.85"/><circle cx="1676.4" cy="744.7" r="4.6" fill="#22c55e" fill-opacity="0.85"/><circle cx="1631.0" cy="743.5" r="4.6" fill="#22c55e" fill-opacity="0.85"/><circle cx="1036.0" cy="492.0" r="4.6" fill="#22c55e" fill-opacity="0.85"/><circle cx="1040.0" cy="485.0" r="4.6" fill="#22c55e" fill-opacity="0.85"/><circle cx="1068.0" cy="481.0" r="4.6" fill="#22c55e" fill-opacity="0.85"/><circle cx="1029.0" cy="496.0" r="4.6" fill="#22c55e" fill-opacity="0.85"/><circle cx="1017.0" cy="427.0" r="4.6" fill="#22c55e" fill-opacity="0.85"/><circle cx="1186.0" cy="660.0" r="4.6" fill="#22c55e" fill-opacity="0.85"/><circle cx="1176.0" cy="668.0" r="4.6" fill="#22c55e" fill-opacity="0.85"/><circle cx="1195.0" cy="668.0" r="4.6" fill="#22c55e" fill-opacity="0.85"/><circle cx="1208.0" cy="695.0" r="4.6" fill="#22c55e" fill-opacity="0.85"/><circle cx="1180.0" cy="628.0" r="4.6" fill="#22c55e" fill-opacity="0.85"/><circle cx="1300.0" cy="675.0" r="4.6" fill="#22c55e" fill-opacity="0.85"/><circle cx="1310.0" cy="668.0" r="4.6" fill="#22c55e" fill-opacity="0.85"/><circle cx="1240.0" cy="710.0" r="4.6" fill="#22c55e" fill-opacity="0.85"/><circle cx="1255.0" cy="705.0" r="4.6" fill="#22c55e" fill-opacity="0.85"/><circle cx="1275.0" cy="700.0" r="4.6" fill="#22c55e" fill-opacity="0.85"/><circle cx="1197.7" cy="394.7" r="4.6" fill="#22c55e" fill-opacity="0.85"/><circle cx="1204.2" cy="402.7" r="4.6" fill="#22c55e" fill-opacity="0.85"/><circle cx="1202.1" cy="401.9" r="4.6" fill="#22c55e" fill-opacity="0.85"/><circle cx="1175.1" cy="383.6" r="4.6" fill="#22c55e" fill-opacity="0.85"/><circle cx="1209.8" cy="391.0" r="4.6" fill="#22c55e" fill-opacity="0.85"/><circle cx="1208.2" cy="369.5" r="4.6" fill="#22c55e" fill-opacity="0.85"/><circle cx="1191.8" cy="374.9" r="4.6" fill="#22c55e" fill-opacity="0.85"/><circle cx="1194.7" cy="388.0" r="4.6" fill="#22c55e" fill-opacity="0.85"/><circle cx="1174.5" cy="373.7" r="4.6" fill="#22c55e" fill-opacity="0.85"/><circle cx="1184.6" cy="401.7" r="4.6" fill="#22c55e" fill-opacity="0.85"/><circle cx="1203.1" cy="371.4" r="4.6" fill="#22c55e" fill-opacity="0.85"/><circle cx="1204.3" cy="370.6" r="4.6" fill="#22c55e" fill-opacity="0.85"/><circle cx="1197.5" cy="370.1" r="4.6" fill="#22c55e" fill-opacity="0.85"/><circle cx="1174.1" cy="399.9" r="4.6" fill="#22c55e" fill-opacity="0.85"/><circle cx="1182.0" cy="373.6" r="4.6" fill="#22c55e" fill-opacity="0.85"/><circle cx="1211.3" cy="399.9" r="4.6" fill="#22c55e" fill-opacity="0.85"/><circle cx="1185.0" cy="403.5" r="4.6" fill="#22c55e" fill-opacity="0.85"/><circle cx="1194.5" cy="392.1" r="4.6" fill="#22c55e" fill-opacity="0.85"/><circle cx="1181.8" cy="402.6" r="4.6" fill="#22c55e" fill-opacity="0.85"/><circle cx="1200.2" cy="403.7" r="4.6" fill="#22c55e" fill-opacity="0.85"/><circle cx="1208.0" cy="377.0" r="4.6" fill="#22c55e" fill-opacity="0.85"/><circle cx="1187.7" cy="371.6" r="4.6" fill="#22c55e" fill-opacity="0.85"/><circle cx="1179.5" cy="367.6" r="4.6" fill="#22c55e" fill-opacity="0.85"/><circle cx="1185.5" cy="389.1" r="4.6" fill="#22c55e" fill-opacity="0.85"/><circle cx="1174.1" cy="392.1" r="4.6" fill="#22c55e" fill-opacity="0.85"/><circle cx="1186.8" cy="377.4" r="4.6" fill="#22c55e" fill-opacity="0.85"/><circle cx="1205.1" cy="384.2" r="4.6" fill="#22c55e" fill-opacity="0.85"/><circle cx="1186.0" cy="384.2" r="4.6" fill="#22c55e" fill-opacity="0.85"/><circle cx="1200.8" cy="367.3" r="4.6" fill="#22c55e" fill-opacity="0.85"/><circle cx="1211.1" cy="365.9" r="4.6" fill="#22c55e" fill-opacity="0.85"/><circle cx="1202.5" cy="398.8" r="4.6" fill="#22c55e" fill-opacity="0.85"/><circle cx="1174.7" cy="396.5" r="4.6" fill="#22c55e" fill-opacity="0.85"/><circle cx="1194.8" cy="359.2" r="4.6" fill="#22c55e" fill-opacity="0.85"/><circle cx="1186.2" cy="344.3" r="4.6" fill="#22c55e" fill-opacity="0.85"/><circle cx="1190.3" cy="369.7" r="4.6" fill="#22c55e" fill-opacity="0.85"/><circle cx="1190.7" cy="364.2" r="4.6" fill="#22c55e" fill-opacity="0.85"/><circle cx="1208.3" cy="369.4" r="4.6" fill="#22c55e" fill-opacity="0.85"/><circle cx="1194.3" cy="352.9" r="4.6" fill="#22c55e" fill-opacity="0.85"/><circle cx="1198.6" cy="364.7" r="4.6" fill="#22c55e" fill-opacity="0.85"/><circle cx="1188.6" cy="364.0" r="4.6" fill="#22c55e" fill-opacity="0.85"/><circle cx="1205.1" cy="367.1" r="4.6" fill="#22c55e" fill-opacity="0.85"/><circle cx="1186.9" cy="369.5" r="4.6" fill="#22c55e" fill-opacity="0.85"/><circle cx="920.0" cy="403.0" r="4.6" fill="#22c55e" fill-opacity="0.85"/><circle cx="930.0" cy="416.0" r="4.6" fill="#22c55e" fill-opacity="0.85"/><circle cx="929.0" cy="424.0" r="4.6" fill="#22c55e" fill-opacity="0.85"/><circle cx="953.0" cy="422.0" r="4.6" fill="#22c55e" fill-opacity="0.85"/><circle cx="1011.0" cy="420.0" r="4.6" fill="#22c55e" fill-opacity="0.85"/><circle cx="1012.0" cy="431.0" r="4.6" fill="#22c55e" fill-opacity="0.85"/><circle cx="756.7" cy="108.0" r="5.6" fill="#eab308" fill-opacity="0.8" stroke="#eab308" stroke-opacity="0.5" stroke-width="1"/><circle cx="696.6" cy="124.6" r="5.6" fill="#eab308" fill-opacity="0.8" stroke="#eab308" stroke-opacity="0.5" stroke-width="1"/><circle cx="710.1" cy="166.9" r="5.6" fill="#eab308" fill-opacity="0.8" stroke="#eab308" stroke-opacity="0.5" stroke-width="1"/><circle cx="676.3" cy="229.5" r="5.6" fill="#eab308" fill-opacity="0.8" stroke="#eab308" stroke-opacity="0.5" stroke-width="1"/><circle cx="688.5" cy="243.5" r="5.6" fill="#eab308" fill-opacity="0.8" stroke="#eab308" stroke-opacity="0.5" stroke-width="1"/><circle cx="851.0" cy="218.0" r="5.6" fill="#eab308" fill-opacity="0.8" stroke="#eab308" stroke-opacity="0.5" stroke-width="1"/><circle cx="931.6" cy="127.6" r="5.6" fill="#eab308" fill-opacity="0.8" stroke="#eab308" stroke-opacity="0.5" stroke-width="1"/><circle cx="931.6" cy="132.7" r="5.6" fill="#eab308" fill-opacity="0.8" stroke="#eab308" stroke-opacity="0.5" stroke-width="1"/><circle cx="964.7" cy="122.6" r="5.6" fill="#eab308" fill-opacity="0.8" stroke="#eab308" stroke-opacity="0.5" stroke-width="1"/><circle cx="960.9" cy="194.3" r="5.6" fill="#eab308" fill-opacity="0.8" stroke="#eab308" stroke-opacity="0.5" stroke-width="1"/><circle cx="931.6" cy="199.0" r="5.6" fill="#eab308" fill-opacity="0.8" stroke="#eab308" stroke-opacity="0.5" stroke-width="1"/><circle cx="922.7" cy="209.0" r="5.6" fill="#eab308" fill-opacity="0.8" stroke="#eab308" stroke-opacity="0.5" stroke-width="1"/><circle cx="911.3" cy="216.7" r="5.6" fill="#eab308" fill-opacity="0.8" stroke="#eab308" stroke-opacity="0.5" stroke-width="1"/><circle cx="978.7" cy="220.6" r="5.6" fill="#eab308" fill-opacity="0.8" stroke="#eab308" stroke-opacity="0.5" stroke-width="1"/><circle cx="897.3" cy="261.3" r="5.6" fill="#eab308" fill-opacity="0.8" stroke="#eab308" stroke-opacity="0.5" stroke-width="1"/><circle cx="953.3" cy="266.4" r="5.6" fill="#eab308" fill-opacity="0.8" stroke="#eab308" stroke-opacity="0.5" stroke-width="1"/><circle cx="811.5" cy="284.2" r="5.6" fill="#eab308" fill-opacity="0.8" stroke="#eab308" stroke-opacity="0.5" stroke-width="1"/><circle cx="827.3" cy="300.8" r="5.6" fill="#eab308" fill-opacity="0.8" stroke="#eab308" stroke-opacity="0.5" stroke-width="1"/><circle cx="838.7" cy="299.5" r="5.6" fill="#eab308" fill-opacity="0.8" stroke="#eab308" stroke-opacity="0.5" stroke-width="1"/><circle cx="845.1" cy="290.6" r="5.6" fill="#eab308" fill-opacity="0.8" stroke="#eab308" stroke-opacity="0.5" stroke-width="1"/><circle cx="814.5" cy="305.9" r="5.6" fill="#eab308" fill-opacity="0.8" stroke="#eab308" stroke-opacity="0.5" stroke-width="1"/><circle cx="786.5" cy="318.1" r="5.6" fill="#eab308" fill-opacity="0.8" stroke="#eab308" stroke-opacity="0.5" stroke-width="1"/><circle cx="854.0" cy="332.6" r="5.6" fill="#eab308" fill-opacity="0.8" stroke="#eab308" stroke-opacity="0.5" stroke-width="1"/><circle cx="913.8" cy="319.9" r="5.6" fill="#eab308" fill-opacity="0.8" stroke="#eab308" stroke-opacity="0.5" stroke-width="1"/><circle cx="924.0" cy="337.7" r="5.6" fill="#eab308" fill-opacity="0.8" stroke="#eab308" stroke-opacity="0.5" stroke-width="1"/><circle cx="916.4" cy="406.4" r="5.6" fill="#eab308" fill-opacity="0.8" stroke="#eab308" stroke-opacity="0.5" stroke-width="1"/><circle cx="993.2" cy="98.4" r="5.6" fill="#eab308" fill-opacity="0.8" stroke="#eab308" stroke-opacity="0.5" stroke-width="1"/><circle cx="1153.6" cy="125.1" r="5.6" fill="#eab308" fill-opacity="0.8" stroke="#eab308" stroke-opacity="0.5" stroke-width="1"/><circle cx="1170.1" cy="125.1" r="5.6" fill="#eab308" fill-opacity="0.8" stroke="#eab308" stroke-opacity="0.5" stroke-width="1"/><circle cx="1199.4" cy="132.2" r="5.6" fill="#eab308" fill-opacity="0.8" stroke="#eab308" stroke-opacity="0.5" stroke-width="1"/><circle cx="1075.9" cy="157.4" r="5.6" fill="#eab308" fill-opacity="0.8" stroke="#eab308" stroke-opacity="0.5" stroke-width="1"/><circle cx="1026.8" cy="165.8" r="5.6" fill="#eab308" fill-opacity="0.8" stroke="#eab308" stroke-opacity="0.5" stroke-width="1"/><circle cx="994.5" cy="172.2" r="5.6" fill="#eab308" fill-opacity="0.8" stroke="#eab308" stroke-opacity="0.5" stroke-width="1"/><circle cx="1010.5" cy="179.8" r="5.6" fill="#eab308" fill-opacity="0.8" stroke="#eab308" stroke-opacity="0.5" stroke-width="1"/><circle cx="1069.6" cy="182.4" r="5.6" fill="#eab308" fill-opacity="0.8" stroke="#eab308" stroke-opacity="0.5" stroke-width="1"/><circle cx="1088.7" cy="184.2" r="5.6" fill="#eab308" fill-opacity="0.8" stroke="#eab308" stroke-opacity="0.5" stroke-width="1"/><circle cx="1089.4" cy="190.0" r="5.6" fill="#eab308" fill-opacity="0.8" stroke="#eab308" stroke-opacity="0.5" stroke-width="1"/><circle cx="1107.2" cy="182.4" r="5.6" fill="#eab308" fill-opacity="0.8" stroke="#eab308" stroke-opacity="0.5" stroke-width="1"/><circle cx="1054.3" cy="191.3" r="5.6" fill="#eab308" fill-opacity="0.8" stroke="#eab308" stroke-opacity="0.5" stroke-width="1"/><circle cx="1059.4" cy="193.8" r="5.6" fill="#eab308" fill-opacity="0.8" stroke="#eab308" stroke-opacity="0.5" stroke-width="1"/><circle cx="1067.0" cy="195.1" r="5.6" fill="#eab308" fill-opacity="0.8" stroke="#eab308" stroke-opacity="0.5" stroke-width="1"/><circle cx="1054.3" cy="202.7" r="5.6" fill="#eab308" fill-opacity="0.8" stroke="#eab308" stroke-opacity="0.5" stroke-width="1"/><circle cx="1176.5" cy="164.6" r="5.6" fill="#eab308" fill-opacity="0.8" stroke="#eab308" stroke-opacity="0.5" stroke-width="1"/><circle cx="1170.9" cy="170.9" r="5.6" fill="#eab308" fill-opacity="0.8" stroke="#eab308" stroke-opacity="0.5" stroke-width="1"/><circle cx="1214.7" cy="210.4" r="5.6" fill="#eab308" fill-opacity="0.8" stroke="#eab308" stroke-opacity="0.5" stroke-width="1"/><circle cx="1161.2" cy="217.3" r="5.6" fill="#eab308" fill-opacity="0.8" stroke="#eab308" stroke-opacity="0.5" stroke-width="1"/><circle cx="1154.8" cy="236.6" r="5.6" fill="#eab308" fill-opacity="0.8" stroke="#eab308" stroke-opacity="0.5" stroke-width="1"/><circle cx="1166.8" cy="232.8" r="5.6" fill="#eab308" fill-opacity="0.8" stroke="#eab308" stroke-opacity="0.5" stroke-width="1"/><circle cx="1177.8" cy="232.8" r="5.6" fill="#eab308" fill-opacity="0.8" stroke="#eab308" stroke-opacity="0.5" stroke-width="1"/><circle cx="1172.7" cy="239.7" r="5.6" fill="#eab308" fill-opacity="0.8" stroke="#eab308" stroke-opacity="0.5" stroke-width="1"/><circle cx="1176.0" cy="243.0" r="5.6" fill="#eab308" fill-opacity="0.8" stroke="#eab308" stroke-opacity="0.5" stroke-width="1"/><circle cx="1107.7" cy="268.9" r="5.6" fill="#eab308" fill-opacity="0.8" stroke="#eab308" stroke-opacity="0.5" stroke-width="1"/><circle cx="1119.2" cy="268.9" r="5.6" fill="#eab308" fill-opacity="0.8" stroke="#eab308" stroke-opacity="0.5" stroke-width="1"/><circle cx="1008.5" cy="290.1" r="5.6" fill="#eab308" fill-opacity="0.8" stroke="#eab308" stroke-opacity="0.5" stroke-width="1"/><circle cx="1056.8" cy="282.2" r="5.6" fill="#eab308" fill-opacity="0.8" stroke="#eab308" stroke-opacity="0.5" stroke-width="1"/><circle cx="1060.6" cy="282.2" r="5.6" fill="#eab308" fill-opacity="0.8" stroke="#eab308" stroke-opacity="0.5" stroke-width="1"/><circle cx="1093.7" cy="290.6" r="5.6" fill="#eab308" fill-opacity="0.8" stroke="#eab308" stroke-opacity="0.5" stroke-width="1"/><circle cx="1031.4" cy="298.7" r="5.6" fill="#eab308" fill-opacity="0.8" stroke="#eab308" stroke-opacity="0.5" stroke-width="1"/><circle cx="1039.0" cy="298.7" r="5.6" fill="#eab308" fill-opacity="0.8" stroke="#eab308" stroke-opacity="0.5" stroke-width="1"/><circle cx="998.3" cy="261.3" r="5.6" fill="#eab308" fill-opacity="0.8" stroke="#eab308" stroke-opacity="0.5" stroke-width="1"/><circle cx="1005.9" cy="260.0" r="5.6" fill="#eab308" fill-opacity="0.8" stroke="#eab308" stroke-opacity="0.5" stroke-width="1"/><circle cx="1008.5" cy="267.7" r="5.6" fill="#eab308" fill-opacity="0.8" stroke="#eab308" stroke-opacity="0.5" stroke-width="1"/><circle cx="1163.8" cy="298.2" r="5.6" fill="#eab308" fill-opacity="0.8" stroke="#eab308" stroke-opacity="0.5" stroke-width="1"/><circle cx="1123.0" cy="305.9" r="5.6" fill="#eab308" fill-opacity="0.8" stroke="#eab308" stroke-opacity="0.5" stroke-width="1"/><circle cx="1137.0" cy="307.1" r="5.6" fill="#eab308" fill-opacity="0.8" stroke="#eab308" stroke-opacity="0.5" stroke-width="1"/><circle cx="1142.1" cy="305.9" r="5.6" fill="#eab308" fill-opacity="0.8" stroke="#eab308" stroke-opacity="0.5" stroke-width="1"/><circle cx="1100.1" cy="323.7" r="5.6" fill="#eab308" fill-opacity="0.8" stroke="#eab308" stroke-opacity="0.5" stroke-width="1"/><circle cx="1103.9" cy="330.0" r="5.6" fill="#eab308" fill-opacity="0.8" stroke="#eab308" stroke-opacity="0.5" stroke-width="1"/><circle cx="1114.1" cy="330.0" r="5.6" fill="#eab308" fill-opacity="0.8" stroke="#eab308" stroke-opacity="0.5" stroke-width="1"/><circle cx="1148.5" cy="337.7" r="5.6" fill="#eab308" fill-opacity="0.8" stroke="#eab308" stroke-opacity="0.5" stroke-width="1"/><circle cx="1156.1" cy="314.8" r="5.6" fill="#eab308" fill-opacity="0.8" stroke="#eab308" stroke-opacity="0.5" stroke-width="1"/><circle cx="1184.1" cy="321.1" r="5.6" fill="#eab308" fill-opacity="0.8" stroke="#eab308" stroke-opacity="0.5" stroke-width="1"/><circle cx="1190.5" cy="322.4" r="5.6" fill="#eab308" fill-opacity="0.8" stroke="#eab308" stroke-opacity="0.5" stroke-width="1"/><circle cx="1056.8" cy="346.1" r="5.6" fill="#eab308" fill-opacity="0.8" stroke="#eab308" stroke-opacity="0.5" stroke-width="1"/><circle cx="1061.9" cy="369.5" r="5.6" fill="#eab308" fill-opacity="0.8" stroke="#eab308" stroke-opacity="0.5" stroke-width="1"/><circle cx="1054.3" cy="383.5" r="5.6" fill="#eab308" fill-opacity="0.8" stroke="#eab308" stroke-opacity="0.5" stroke-width="1"/><circle cx="1083.0" cy="373.3" r="5.6" fill="#eab308" fill-opacity="0.8" stroke="#eab308" stroke-opacity="0.5" stroke-width="1"/><circle cx="1215.9" cy="346.1" r="5.6" fill="#eab308" fill-opacity="0.8" stroke="#eab308" stroke-opacity="0.5" stroke-width="1"/><circle cx="1222.3" cy="346.1" r="5.6" fill="#eab308" fill-opacity="0.8" stroke="#eab308" stroke-opacity="0.5" stroke-width="1"/><circle cx="1240.1" cy="379.7" r="5.6" fill="#eab308" fill-opacity="0.8" stroke="#eab308" stroke-opacity="0.5" stroke-width="1"/><circle cx="1256.7" cy="374.6" r="5.6" fill="#eab308" fill-opacity="0.8" stroke="#eab308" stroke-opacity="0.5" stroke-width="1"/><circle cx="1260.5" cy="379.7" r="5.6" fill="#eab308" fill-opacity="0.8" stroke="#eab308" stroke-opacity="0.5" stroke-width="1"/><circle cx="1264.3" cy="369.5" r="5.6" fill="#eab308" fill-opacity="0.8" stroke="#eab308" stroke-opacity="0.5" stroke-width="1"/><circle cx="1256.7" cy="290.6" r="5.6" fill="#eab308" fill-opacity="0.8" stroke="#eab308" stroke-opacity="0.5" stroke-width="1"/><circle cx="1264.3" cy="290.6" r="5.6" fill="#eab308" fill-opacity="0.8" stroke="#eab308" stroke-opacity="0.5" stroke-width="1"/><circle cx="1280.8" cy="187.0" r="5.6" fill="#eab308" fill-opacity="0.8" stroke="#eab308" stroke-opacity="0.5" stroke-width="1"/><circle cx="1214.9" cy="209.8" r="5.6" fill="#eab308" fill-opacity="0.8" stroke="#eab308" stroke-opacity="0.5" stroke-width="1"/><circle cx="1160.9" cy="217.2" r="5.6" fill="#eab308" fill-opacity="0.8" stroke="#eab308" stroke-opacity="0.5" stroke-width="1"/><circle cx="1155.1" cy="236.3" r="5.6" fill="#eab308" fill-opacity="0.8" stroke="#eab308" stroke-opacity="0.5" stroke-width="1"/><circle cx="1166.8" cy="233.5" r="5.6" fill="#eab308" fill-opacity="0.8" stroke="#eab308" stroke-opacity="0.5" stroke-width="1"/><circle cx="1177.2" cy="233.0" r="5.6" fill="#eab308" fill-opacity="0.8" stroke="#eab308" stroke-opacity="0.5" stroke-width="1"/><circle cx="1174.9" cy="241.7" r="5.6" fill="#eab308" fill-opacity="0.8" stroke="#eab308" stroke-opacity="0.5" stroke-width="1"/><circle cx="1337.8" cy="195.1" r="5.6" fill="#eab308" fill-opacity="0.8" stroke="#eab308" stroke-opacity="0.5" stroke-width="1"/><circle cx="1328.5" cy="203.3" r="5.6" fill="#eab308" fill-opacity="0.8" stroke="#eab308" stroke-opacity="0.5" stroke-width="1"/><circle cx="1326.1" cy="211.4" r="5.6" fill="#eab308" fill-opacity="0.8" stroke="#eab308" stroke-opacity="0.5" stroke-width="1"/><circle cx="1322.6" cy="219.6" r="5.6" fill="#eab308" fill-opacity="0.8" stroke="#eab308" stroke-opacity="0.5" stroke-width="1"/><circle cx="1349.4" cy="210.7" r="5.6" fill="#eab308" fill-opacity="0.8" stroke="#eab308" stroke-opacity="0.5" stroke-width="1"/><circle cx="1285.4" cy="227.7" r="5.6" fill="#eab308" fill-opacity="0.8" stroke="#eab308" stroke-opacity="0.5" stroke-width="1"/><circle cx="1356.4" cy="259.1" r="5.6" fill="#eab308" fill-opacity="0.8" stroke="#eab308" stroke-opacity="0.5" stroke-width="1"/><circle cx="1407.1" cy="273.5" r="5.6" fill="#eab308" fill-opacity="0.8" stroke="#eab308" stroke-opacity="0.5" stroke-width="1"/><circle cx="1429.7" cy="274.2" r="5.6" fill="#eab308" fill-opacity="0.8" stroke="#eab308" stroke-opacity="0.5" stroke-width="1"/><circle cx="1326.1" cy="274.2" r="5.6" fill="#eab308" fill-opacity="0.8" stroke="#eab308" stroke-opacity="0.5" stroke-width="1"/><circle cx="1312.2" cy="281.9" r="5.6" fill="#eab308" fill-opacity="0.8" stroke="#eab308" stroke-opacity="0.5" stroke-width="1"/><circle cx="1329.6" cy="282.4" r="5.6" fill="#eab308" fill-opacity="0.8" stroke="#eab308" stroke-opacity="0.5" stroke-width="1"/><circle cx="1349.4" cy="281.9" r="5.6" fill="#eab308" fill-opacity="0.8" stroke="#eab308" stroke-opacity="0.5" stroke-width="1"/><circle cx="1256.3" cy="290.5" r="5.6" fill="#eab308" fill-opacity="0.8" stroke="#eab308" stroke-opacity="0.5" stroke-width="1"/><circle cx="1264.5" cy="290.5" r="5.6" fill="#eab308" fill-opacity="0.8" stroke="#eab308" stroke-opacity="0.5" stroke-width="1"/><circle cx="1300.5" cy="290.5" r="5.6" fill="#eab308" fill-opacity="0.8" stroke="#eab308" stroke-opacity="0.5" stroke-width="1"/><circle cx="1402.4" cy="290.5" r="5.6" fill="#eab308" fill-opacity="0.8" stroke="#eab308" stroke-opacity="0.5" stroke-width="1"/><circle cx="1362.2" cy="305.6" r="5.6" fill="#eab308" fill-opacity="0.8" stroke="#eab308" stroke-opacity="0.5" stroke-width="1"/><circle cx="1314.5" cy="305.6" r="5.6" fill="#eab308" fill-opacity="0.8" stroke="#eab308" stroke-opacity="0.5" stroke-width="1"/><circle cx="1336.6" cy="314.9" r="5.6" fill="#eab308" fill-opacity="0.8" stroke="#eab308" stroke-opacity="0.5" stroke-width="1"/><circle cx="1294.7" cy="325.4" r="5.6" fill="#eab308" fill-opacity="0.8" stroke="#eab308" stroke-opacity="0.5" stroke-width="1"/><circle cx="1297.0" cy="337.0" r="5.6" fill="#eab308" fill-opacity="0.8" stroke="#eab308" stroke-opacity="0.5" stroke-width="1"/><circle cx="1373.8" cy="328.9" r="5.6" fill="#eab308" fill-opacity="0.8" stroke="#eab308" stroke-opacity="0.5" stroke-width="1"/><circle cx="1376.2" cy="340.5" r="5.6" fill="#eab308" fill-opacity="0.8" stroke="#eab308" stroke-opacity="0.5" stroke-width="1"/><circle cx="1405.2" cy="345.7" r="5.6" fill="#eab308" fill-opacity="0.8" stroke="#eab308" stroke-opacity="0.5" stroke-width="1"/><circle cx="1409.9" cy="345.7" r="5.6" fill="#eab308" fill-opacity="0.8" stroke="#eab308" stroke-opacity="0.5" stroke-width="1"/><circle cx="1334.3" cy="352.2" r="5.6" fill="#eab308" fill-opacity="0.8" stroke="#eab308" stroke-opacity="0.5" stroke-width="1"/><circle cx="1322.6" cy="353.3" r="5.6" fill="#eab308" fill-opacity="0.8" stroke="#eab308" stroke-opacity="0.5" stroke-width="1"/><circle cx="1214.5" cy="345.7" r="5.6" fill="#eab308" fill-opacity="0.8" stroke="#eab308" stroke-opacity="0.5" stroke-width="1"/><circle cx="1221.4" cy="345.7" r="5.6" fill="#eab308" fill-opacity="0.8" stroke="#eab308" stroke-opacity="0.5" stroke-width="1"/><circle cx="1149.3" cy="337.0" r="5.6" fill="#eab308" fill-opacity="0.8" stroke="#eab308" stroke-opacity="0.5" stroke-width="1"/><circle cx="1163.3" cy="297.5" r="5.6" fill="#eab308" fill-opacity="0.8" stroke="#eab308" stroke-opacity="0.5" stroke-width="1"/><circle cx="1142.3" cy="305.6" r="5.6" fill="#eab308" fill-opacity="0.8" stroke="#eab308" stroke-opacity="0.5" stroke-width="1"/><circle cx="1157.5" cy="314.9" r="5.6" fill="#eab308" fill-opacity="0.8" stroke="#eab308" stroke-opacity="0.5" stroke-width="1"/><circle cx="1174.9" cy="326.6" r="5.6" fill="#eab308" fill-opacity="0.8" stroke="#eab308" stroke-opacity="0.5" stroke-width="1"/><circle cx="1190.0" cy="322.4" r="5.6" fill="#eab308" fill-opacity="0.8" stroke="#eab308" stroke-opacity="0.5" stroke-width="1"/><circle cx="1264.5" cy="368.9" r="5.6" fill="#eab308" fill-opacity="0.8" stroke="#eab308" stroke-opacity="0.5" stroke-width="1"/><circle cx="1254.0" cy="375.0" r="5.6" fill="#eab308" fill-opacity="0.8" stroke="#eab308" stroke-opacity="0.5" stroke-width="1"/><circle cx="1259.8" cy="379.6" r="5.6" fill="#eab308" fill-opacity="0.8" stroke="#eab308" stroke-opacity="0.5" stroke-width="1"/><circle cx="1240.0" cy="378.9" r="5.6" fill="#eab308" fill-opacity="0.8" stroke="#eab308" stroke-opacity="0.5" stroke-width="1"/><circle cx="1285.4" cy="363.8" r="5.6" fill="#eab308" fill-opacity="0.8" stroke="#eab308" stroke-opacity="0.5" stroke-width="1"/><circle cx="1290.1" cy="368.5" r="5.6" fill="#eab308" fill-opacity="0.8" stroke="#eab308" stroke-opacity="0.5" stroke-width="1"/><circle cx="1429.7" cy="376.6" r="5.6" fill="#eab308" fill-opacity="0.8" stroke="#eab308" stroke-opacity="0.5" stroke-width="1"/><circle cx="1437.8" cy="376.6" r="5.6" fill="#eab308" fill-opacity="0.8" stroke="#eab308" stroke-opacity="0.5" stroke-width="1"/><circle cx="1376.2" cy="401.0" r="5.6" fill="#eab308" fill-opacity="0.8" stroke="#eab308" stroke-opacity="0.5" stroke-width="1"/><circle cx="1355.2" cy="391.7" r="5.6" fill="#eab308" fill-opacity="0.8" stroke="#eab308" stroke-opacity="0.5" stroke-width="1"/><circle cx="1391.3" cy="424.3" r="5.6" fill="#eab308" fill-opacity="0.8" stroke="#eab308" stroke-opacity="0.5" stroke-width="1"/><circle cx="1473.2" cy="427.8" r="5.6" fill="#eab308" fill-opacity="0.8" stroke="#eab308" stroke-opacity="0.5" stroke-width="1"/><circle cx="1461.1" cy="438.7" r="5.6" fill="#eab308" fill-opacity="0.8" stroke="#eab308" stroke-opacity="0.5" stroke-width="1"/><circle cx="1258.7" cy="416.2" r="5.6" fill="#eab308" fill-opacity="0.8" stroke="#eab308" stroke-opacity="0.5" stroke-width="1"/><circle cx="1250.5" cy="424.3" r="5.6" fill="#eab308" fill-opacity="0.8" stroke="#eab308" stroke-opacity="0.5" stroke-width="1"/><circle cx="1266.8" cy="424.3" r="5.6" fill="#eab308" fill-opacity="0.8" stroke="#eab308" stroke-opacity="0.5" stroke-width="1"/><circle cx="1277.3" cy="424.3" r="5.6" fill="#eab308" fill-opacity="0.8" stroke="#eab308" stroke-opacity="0.5" stroke-width="1"/><circle cx="1280.8" cy="456.9" r="5.6" fill="#eab308" fill-opacity="0.8" stroke="#eab308" stroke-opacity="0.5" stroke-width="1"/><circle cx="1324.3" cy="468.5" r="5.6" fill="#eab308" fill-opacity="0.8" stroke="#eab308" stroke-opacity="0.5" stroke-width="1"/><circle cx="1340.1" cy="445.2" r="5.6" fill="#eab308" fill-opacity="0.8" stroke="#eab308" stroke-opacity="0.5" stroke-width="1"/><circle cx="1423.9" cy="447.6" r="5.6" fill="#eab308" fill-opacity="0.8" stroke="#eab308" stroke-opacity="0.5" stroke-width="1"/><circle cx="1433.2" cy="447.6" r="5.6" fill="#eab308" fill-opacity="0.8" stroke="#eab308" stroke-opacity="0.5" stroke-width="1"/><circle cx="1419.2" cy="461.5" r="5.6" fill="#eab308" fill-opacity="0.8" stroke="#eab308" stroke-opacity="0.5" stroke-width="1"/><circle cx="1428.5" cy="463.9" r="5.6" fill="#eab308" fill-opacity="0.8" stroke="#eab308" stroke-opacity="0.5" stroke-width="1"/><circle cx="1440.1" cy="461.5" r="5.6" fill="#eab308" fill-opacity="0.8" stroke="#eab308" stroke-opacity="0.5" stroke-width="1"/><circle cx="1414.5" cy="468.5" r="5.6" fill="#eab308" fill-opacity="0.8" stroke="#eab308" stroke-opacity="0.5" stroke-width="1"/><circle cx="1425.0" cy="470.8" r="5.6" fill="#eab308" fill-opacity="0.8" stroke="#eab308" stroke-opacity="0.5" stroke-width="1"/><circle cx="1512.3" cy="445.2" r="5.6" fill="#eab308" fill-opacity="0.8" stroke="#eab308" stroke-opacity="0.5" stroke-width="1"/><circle cx="1512.3" cy="453.4" r="5.6" fill="#eab308" fill-opacity="0.8" stroke="#eab308" stroke-opacity="0.5" stroke-width="1"/><circle cx="1498.3" cy="468.5" r="5.6" fill="#eab308" fill-opacity="0.8" stroke="#eab308" stroke-opacity="0.5" stroke-width="1"/><circle cx="1554.1" cy="446.4" r="5.6" fill="#eab308" fill-opacity="0.8" stroke="#eab308" stroke-opacity="0.5" stroke-width="1"/><circle cx="1377.3" cy="469.7" r="5.6" fill="#eab308" fill-opacity="0.8" stroke="#eab308" stroke-opacity="0.5" stroke-width="1"/><circle cx="1390.1" cy="476.6" r="5.6" fill="#eab308" fill-opacity="0.8" stroke="#eab308" stroke-opacity="0.5" stroke-width="1"/><circle cx="1299.4" cy="490.6" r="5.6" fill="#eab308" fill-opacity="0.8" stroke="#eab308" stroke-opacity="0.5" stroke-width="1"/><circle cx="1454.1" cy="468.5" r="5.6" fill="#eab308" fill-opacity="0.8" stroke="#eab308" stroke-opacity="0.5" stroke-width="1"/><circle cx="1081.3" cy="432.4" r="5.6" fill="#eab308" fill-opacity="0.8" stroke="#eab308" stroke-opacity="0.5" stroke-width="1"/><circle cx="1077.2" cy="470.5" r="5.6" fill="#eab308" fill-opacity="0.8" stroke="#eab308" stroke-opacity="0.5" stroke-width="1"/><circle cx="1249.7" cy="425.1" r="5.6" fill="#eab308" fill-opacity="0.8" stroke="#eab308" stroke-opacity="0.5" stroke-width="1"/><circle cx="1258.3" cy="425.1" r="5.6" fill="#eab308" fill-opacity="0.8" stroke="#eab308" stroke-opacity="0.5" stroke-width="1"/><circle cx="1268.2" cy="425.1" r="5.6" fill="#eab308" fill-opacity="0.8" stroke="#eab308" stroke-opacity="0.5" stroke-width="1"/><circle cx="1278.0" cy="425.1" r="5.6" fill="#eab308" fill-opacity="0.8" stroke="#eab308" stroke-opacity="0.5" stroke-width="1"/><circle cx="1258.3" cy="417.7" r="5.6" fill="#eab308" fill-opacity="0.8" stroke="#eab308" stroke-opacity="0.5" stroke-width="1"/><circle cx="1280.4" cy="457.0" r="5.6" fill="#eab308" fill-opacity="0.8" stroke="#eab308" stroke-opacity="0.5" stroke-width="1"/><circle cx="1323.5" cy="469.3" r="5.6" fill="#eab308" fill-opacity="0.8" stroke="#eab308" stroke-opacity="0.5" stroke-width="1"/><circle cx="1339.4" cy="446.0" r="5.6" fill="#eab308" fill-opacity="0.8" stroke="#eab308" stroke-opacity="0.5" stroke-width="1"/><circle cx="1391.1" cy="423.8" r="5.6" fill="#eab308" fill-opacity="0.8" stroke="#eab308" stroke-opacity="0.5" stroke-width="1"/><circle cx="1415.6" cy="463.2" r="5.6" fill="#eab308" fill-opacity="0.8" stroke="#eab308" stroke-opacity="0.5" stroke-width="1"/><circle cx="1427.9" cy="466.9" r="5.6" fill="#eab308" fill-opacity="0.8" stroke="#eab308" stroke-opacity="0.5" stroke-width="1"/><circle cx="1440.2" cy="461.9" r="5.6" fill="#eab308" fill-opacity="0.8" stroke="#eab308" stroke-opacity="0.5" stroke-width="1"/><circle cx="1472.2" cy="428.7" r="5.6" fill="#eab308" fill-opacity="0.8" stroke="#eab308" stroke-opacity="0.5" stroke-width="1"/><circle cx="1514.0" cy="446.0" r="5.6" fill="#eab308" fill-opacity="0.8" stroke="#eab308" stroke-opacity="0.5" stroke-width="1"/><circle cx="1511.5" cy="454.6" r="5.6" fill="#eab308" fill-opacity="0.8" stroke="#eab308" stroke-opacity="0.5" stroke-width="1"/><circle cx="1496.8" cy="469.3" r="5.6" fill="#eab308" fill-opacity="0.8" stroke="#eab308" stroke-opacity="0.5" stroke-width="1"/><circle cx="1553.3" cy="446.0" r="5.6" fill="#eab308" fill-opacity="0.8" stroke="#eab308" stroke-opacity="0.5" stroke-width="1"/><circle cx="1391.1" cy="476.7" r="5.6" fill="#eab308" fill-opacity="0.8" stroke="#eab308" stroke-opacity="0.5" stroke-width="1"/><circle cx="1298.9" cy="490.2" r="5.6" fill="#eab308" fill-opacity="0.8" stroke="#eab308" stroke-opacity="0.5" stroke-width="1"/><circle cx="1232.5" cy="589.0" r="5.6" fill="#eab308" fill-opacity="0.8" stroke="#eab308" stroke-opacity="0.5" stroke-width="1"/><circle cx="1220.2" cy="603.3" r="5.6" fill="#eab308" fill-opacity="0.8" stroke="#eab308" stroke-opacity="0.5" stroke-width="1"/><circle cx="1177.2" cy="610.7" r="5.6" fill="#eab308" fill-opacity="0.8" stroke="#eab308" stroke-opacity="0.5" stroke-width="1"/><circle cx="1187.0" cy="589.0" r="5.6" fill="#eab308" fill-opacity="0.8" stroke="#eab308" stroke-opacity="0.5" stroke-width="1"/><circle cx="1312.4" cy="695.5" r="5.6" fill="#eab308" fill-opacity="0.8" stroke="#eab308" stroke-opacity="0.5" stroke-width="1"/><circle cx="1322.2" cy="695.5" r="5.6" fill="#eab308" fill-opacity="0.8" stroke="#eab308" stroke-opacity="0.5" stroke-width="1"/><circle cx="1327.1" cy="700.4" r="5.6" fill="#eab308" fill-opacity="0.8" stroke="#eab308" stroke-opacity="0.5" stroke-width="1"/><circle cx="1360.3" cy="694.2" r="5.6" fill="#eab308" fill-opacity="0.8" stroke="#eab308" stroke-opacity="0.5" stroke-width="1"/><circle cx="1369.0" cy="712.7" r="5.6" fill="#eab308" fill-opacity="0.8" stroke="#eab308" stroke-opacity="0.5" stroke-width="1"/><circle cx="1373.9" cy="729.9" r="5.6" fill="#eab308" fill-opacity="0.8" stroke="#eab308" stroke-opacity="0.5" stroke-width="1"/><circle cx="1542.2" cy="670.9" r="5.6" fill="#eab308" fill-opacity="0.8" stroke="#eab308" stroke-opacity="0.5" stroke-width="1"/><circle cx="1573.0" cy="678.3" r="5.6" fill="#eab308" fill-opacity="0.8" stroke="#eab308" stroke-opacity="0.5" stroke-width="1"/><circle cx="1537.3" cy="657.4" r="5.6" fill="#eab308" fill-opacity="0.8" stroke="#eab308" stroke-opacity="0.5" stroke-width="1"/><circle cx="1527.5" cy="647.5" r="5.6" fill="#eab308" fill-opacity="0.8" stroke="#eab308" stroke-opacity="0.5" stroke-width="1"/><circle cx="1602.7" cy="559.1" r="5.6" fill="#eab308" fill-opacity="0.8" stroke="#eab308" stroke-opacity="0.5" stroke-width="1"/><circle cx="1741.6" cy="664.8" r="5.6" fill="#eab308" fill-opacity="0.8" stroke="#eab308" stroke-opacity="0.5" stroke-width="1"/><circle cx="1737.9" cy="672.2" r="5.6" fill="#eab308" fill-opacity="0.8" stroke="#eab308" stroke-opacity="0.5" stroke-width="1"/><circle cx="1746.5" cy="679.1" r="5.6" fill="#eab308" fill-opacity="0.8" stroke="#eab308" stroke-opacity="0.5" stroke-width="1"/><circle cx="1710.4" cy="672.2" r="5.6" fill="#eab308" fill-opacity="0.8" stroke="#eab308" stroke-opacity="0.5" stroke-width="1"/><circle cx="1758.1" cy="703.7" r="5.6" fill="#eab308" fill-opacity="0.8" stroke="#eab308" stroke-opacity="0.5" stroke-width="1"/><circle cx="1638.3" cy="736.1" r="5.6" fill="#eab308" fill-opacity="0.8" stroke="#eab308" stroke-opacity="0.5" stroke-width="1"/><circle cx="1654.3" cy="726.3" r="5.6" fill="#eab308" fill-opacity="0.8" stroke="#eab308" stroke-opacity="0.5" stroke-width="1"/><circle cx="1205.0" cy="652.0" r="5.6" fill="#eab308" fill-opacity="0.8" stroke="#eab308" stroke-opacity="0.5" stroke-width="1"/><circle cx="1245.0" cy="690.0" r="5.6" fill="#eab308" fill-opacity="0.8" stroke="#eab308" stroke-opacity="0.5" stroke-width="1"/><circle cx="1262.0" cy="700.0" r="5.6" fill="#eab308" fill-opacity="0.8" stroke="#eab308" stroke-opacity="0.5" stroke-width="1"/><circle cx="1335.0" cy="700.0" r="5.6" fill="#eab308" fill-opacity="0.8" stroke="#eab308" stroke-opacity="0.5" stroke-width="1"/><circle cx="1340.0" cy="690.0" r="5.6" fill="#eab308" fill-opacity="0.8" stroke="#eab308" stroke-opacity="0.5" stroke-width="1"/><circle cx="1230.0" cy="720.0" r="5.6" fill="#eab308" fill-opacity="0.8" stroke="#eab308" stroke-opacity="0.5" stroke-width="1"/><circle cx="1165.0" cy="560.0" r="5.6" fill="#eab308" fill-opacity="0.8" stroke="#eab308" stroke-opacity="0.5" stroke-width="1"/><circle cx="1200.0" cy="560.0" r="5.6" fill="#eab308" fill-opacity="0.8" stroke="#eab308" stroke-opacity="0.5" stroke-width="1"/><circle cx="1195.0" cy="635.0" r="5.6" fill="#eab308" fill-opacity="0.8" stroke="#eab308" stroke-opacity="0.5" stroke-width="1"/><circle cx="1172.0" cy="612.0" r="5.6" fill="#eab308" fill-opacity="0.8" stroke="#eab308" stroke-opacity="0.5" stroke-width="1"/><circle cx="1186.0" cy="572.0" r="5.6" fill="#eab308" fill-opacity="0.8" stroke="#eab308" stroke-opacity="0.5" stroke-width="1"/><circle cx="1210.0" cy="540.0" r="5.6" fill="#eab308" fill-opacity="0.8" stroke="#eab308" stroke-opacity="0.5" stroke-width="1"/><circle cx="916.0" cy="407.0" r="5.6" fill="#eab308" fill-opacity="0.8" stroke="#eab308" stroke-opacity="0.5" stroke-width="1"/><circle cx="922.0" cy="414.0" r="5.6" fill="#eab308" fill-opacity="0.8" stroke="#eab308" stroke-opacity="0.5" stroke-width="1"/><circle cx="925.0" cy="416.0" r="5.6" fill="#eab308" fill-opacity="0.8" stroke="#eab308" stroke-opacity="0.5" stroke-width="1"/><circle cx="936.0" cy="434.0" r="5.6" fill="#eab308" fill-opacity="0.8" stroke="#eab308" stroke-opacity="0.5" stroke-width="1"/><circle cx="805.6" cy="299.5" r="7.3" fill="#a855f7" fill-opacity="0.8" stroke="#a855f7" stroke-opacity="0.5" stroke-width="1"/><circle cx="828.5" cy="310.4" r="7.3" fill="#a855f7" fill-opacity="0.8" stroke="#a855f7" stroke-opacity="0.5" stroke-width="1"/><circle cx="927.8" cy="363.1" r="7.3" fill="#a855f7" fill-opacity="0.8" stroke="#a855f7" stroke-opacity="0.5" stroke-width="1"/><circle cx="1073.4" cy="195.6" r="7.3" fill="#a855f7" fill-opacity="0.8" stroke="#a855f7" stroke-opacity="0.5" stroke-width="1"/><circle cx="1142.1" cy="179.8" r="7.3" fill="#a855f7" fill-opacity="0.8" stroke="#a855f7" stroke-opacity="0.5" stroke-width="1"/><circle cx="1249.0" cy="179.8" r="7.3" fill="#a855f7" fill-opacity="0.8" stroke="#a855f7" stroke-opacity="0.5" stroke-width="1"/><circle cx="1134.5" cy="298.7" r="7.3" fill="#a855f7" fill-opacity="0.8" stroke="#a855f7" stroke-opacity="0.5" stroke-width="1"/><circle cx="1166.3" cy="305.9" r="7.3" fill="#a855f7" fill-opacity="0.8" stroke="#a855f7" stroke-opacity="0.5" stroke-width="1"/><circle cx="1166.3" cy="314.8" r="7.3" fill="#a855f7" fill-opacity="0.8" stroke="#a855f7" stroke-opacity="0.5" stroke-width="1"/><circle cx="1213.4" cy="354.2" r="7.3" fill="#a855f7" fill-opacity="0.8" stroke="#a855f7" stroke-opacity="0.5" stroke-width="1"/><circle cx="1206.5" cy="362.4" r="7.3" fill="#a855f7" fill-opacity="0.8" stroke="#a855f7" stroke-opacity="0.5" stroke-width="1"/><circle cx="1205.8" cy="378.4" r="7.3" fill="#a855f7" fill-opacity="0.8" stroke="#a855f7" stroke-opacity="0.5" stroke-width="1"/><circle cx="1199.4" cy="395.0" r="7.3" fill="#a855f7" fill-opacity="0.8" stroke="#a855f7" stroke-opacity="0.5" stroke-width="1"/><circle cx="1261.8" cy="267.7" r="7.3" fill="#a855f7" fill-opacity="0.8" stroke="#a855f7" stroke-opacity="0.5" stroke-width="1"/><circle cx="1347.0" cy="251.1" r="7.3" fill="#a855f7" fill-opacity="0.8" stroke="#a855f7" stroke-opacity="0.5" stroke-width="1"/><circle cx="1364.9" cy="281.7" r="7.3" fill="#a855f7" fill-opacity="0.8" stroke="#a855f7" stroke-opacity="0.5" stroke-width="1"/><circle cx="1394.2" cy="290.1" r="7.3" fill="#a855f7" fill-opacity="0.8" stroke="#a855f7" stroke-opacity="0.5" stroke-width="1"/><circle cx="1340.7" cy="295.7" r="7.3" fill="#a855f7" fill-opacity="0.8" stroke="#a855f7" stroke-opacity="0.5" stroke-width="1"/><circle cx="1284.7" cy="330.0" r="7.3" fill="#a855f7" fill-opacity="0.8" stroke="#a855f7" stroke-opacity="0.5" stroke-width="1"/><circle cx="1396.7" cy="337.7" r="7.3" fill="#a855f7" fill-opacity="0.8" stroke="#a855f7" stroke-opacity="0.5" stroke-width="1"/><circle cx="1248.2" cy="182.3" r="7.3" fill="#a855f7" fill-opacity="0.8" stroke="#a855f7" stroke-opacity="0.5" stroke-width="1"/><circle cx="1345.9" cy="251.0" r="7.3" fill="#a855f7" fill-opacity="0.8" stroke="#a855f7" stroke-opacity="0.5" stroke-width="1"/><circle cx="1262.1" cy="267.3" r="7.3" fill="#a855f7" fill-opacity="0.8" stroke="#a855f7" stroke-opacity="0.5" stroke-width="1"/><circle cx="1364.5" cy="281.9" r="7.3" fill="#a855f7" fill-opacity="0.8" stroke="#a855f7" stroke-opacity="0.5" stroke-width="1"/><circle cx="1343.6" cy="290.5" r="7.3" fill="#a855f7" fill-opacity="0.8" stroke="#a855f7" stroke-opacity="0.5" stroke-width="1"/><circle cx="1340.1" cy="297.5" r="7.3" fill="#a855f7" fill-opacity="0.8" stroke="#a855f7" stroke-opacity="0.5" stroke-width="1"/><circle cx="1394.1" cy="289.4" r="7.3" fill="#a855f7" fill-opacity="0.8" stroke="#a855f7" stroke-opacity="0.5" stroke-width="1"/><circle cx="1284.3" cy="330.1" r="7.3" fill="#a855f7" fill-opacity="0.8" stroke="#a855f7" stroke-opacity="0.5" stroke-width="1"/><circle cx="1397.1" cy="338.2" r="7.3" fill="#a855f7" fill-opacity="0.8" stroke="#a855f7" stroke-opacity="0.5" stroke-width="1"/><circle cx="1394.8" cy="352.2" r="7.3" fill="#a855f7" fill-opacity="0.8" stroke="#a855f7" stroke-opacity="0.5" stroke-width="1"/><circle cx="1397.1" cy="368.5" r="7.3" fill="#a855f7" fill-opacity="0.8" stroke="#a855f7" stroke-opacity="0.5" stroke-width="1"/><circle cx="1342.4" cy="360.3" r="7.3" fill="#a855f7" fill-opacity="0.8" stroke="#a855f7" stroke-opacity="0.5" stroke-width="1"/><circle cx="1358.7" cy="368.5" r="7.3" fill="#a855f7" fill-opacity="0.8" stroke="#a855f7" stroke-opacity="0.5" stroke-width="1"/><circle cx="1372.7" cy="376.6" r="7.3" fill="#a855f7" fill-opacity="0.8" stroke="#a855f7" stroke-opacity="0.5" stroke-width="1"/><circle cx="1166.8" cy="305.6" r="7.3" fill="#a855f7" fill-opacity="0.8" stroke="#a855f7" stroke-opacity="0.5" stroke-width="1"/><circle cx="1166.8" cy="313.8" r="7.3" fill="#a855f7" fill-opacity="0.8" stroke="#a855f7" stroke-opacity="0.5" stroke-width="1"/><circle cx="1214.5" cy="354.5" r="7.3" fill="#a855f7" fill-opacity="0.8" stroke="#a855f7" stroke-opacity="0.5" stroke-width="1"/><circle cx="1206.3" cy="362.6" r="7.3" fill="#a855f7" fill-opacity="0.8" stroke="#a855f7" stroke-opacity="0.5" stroke-width="1"/><circle cx="1205.1" cy="377.8" r="7.3" fill="#a855f7" fill-opacity="0.8" stroke="#a855f7" stroke-opacity="0.5" stroke-width="1"/><circle cx="1199.3" cy="395.2" r="7.3" fill="#a855f7" fill-opacity="0.8" stroke="#a855f7" stroke-opacity="0.5" stroke-width="1"/><circle cx="1344.8" cy="406.8" r="7.3" fill="#a855f7" fill-opacity="0.8" stroke="#a855f7" stroke-opacity="0.5" stroke-width="1"/><circle cx="1455.3" cy="477.8" r="7.3" fill="#a855f7" fill-opacity="0.8" stroke="#a855f7" stroke-opacity="0.5" stroke-width="1"/><circle cx="1493.7" cy="483.6" r="7.3" fill="#a855f7" fill-opacity="0.8" stroke="#a855f7" stroke-opacity="0.5" stroke-width="1"/><circle cx="1506.4" cy="483.6" r="7.3" fill="#a855f7" fill-opacity="0.8" stroke="#a855f7" stroke-opacity="0.5" stroke-width="1"/><circle cx="1455.0" cy="477.9" r="7.3" fill="#a855f7" fill-opacity="0.8" stroke="#a855f7" stroke-opacity="0.5" stroke-width="1"/><circle cx="1493.1" cy="484.1" r="7.3" fill="#a855f7" fill-opacity="0.8" stroke="#a855f7" stroke-opacity="0.5" stroke-width="1"/><circle cx="1506.6" cy="484.1" r="7.3" fill="#a855f7" fill-opacity="0.8" stroke="#a855f7" stroke-opacity="0.5" stroke-width="1"/><circle cx="1201.8" cy="620.5" r="7.3" fill="#a855f7" fill-opacity="0.8" stroke="#a855f7" stroke-opacity="0.5" stroke-width="1"/><circle cx="1216.5" cy="674.6" r="7.3" fill="#a855f7" fill-opacity="0.8" stroke="#a855f7" stroke-opacity="0.5" stroke-width="1"/><circle cx="1215.3" cy="684.4" r="7.3" fill="#a855f7" fill-opacity="0.8" stroke="#a855f7" stroke-opacity="0.5" stroke-width="1"/><circle cx="1228.8" cy="682.0" r="7.3" fill="#a855f7" fill-opacity="0.8" stroke="#a855f7" stroke-opacity="0.5" stroke-width="1"/><circle cx="1280.4" cy="700.4" r="7.3" fill="#a855f7" fill-opacity="0.8" stroke="#a855f7" stroke-opacity="0.5" stroke-width="1"/><circle cx="1310.0" cy="710.2" r="7.3" fill="#a855f7" fill-opacity="0.8" stroke="#a855f7" stroke-opacity="0.5" stroke-width="1"/><circle cx="1346.8" cy="689.3" r="7.3" fill="#a855f7" fill-opacity="0.8" stroke="#a855f7" stroke-opacity="0.5" stroke-width="1"/><circle cx="1378.8" cy="733.6" r="7.3" fill="#a855f7" fill-opacity="0.8" stroke="#a855f7" stroke-opacity="0.5" stroke-width="1"/><circle cx="1624.8" cy="733.7" r="7.3" fill="#a855f7" fill-opacity="0.8" stroke="#a855f7" stroke-opacity="0.5" stroke-width="1"/><circle cx="1225.0" cy="688.0" r="7.3" fill="#a855f7" fill-opacity="0.8" stroke="#a855f7" stroke-opacity="0.5" stroke-width="1"/><circle cx="1240.0" cy="680.0" r="7.3" fill="#a855f7" fill-opacity="0.8" stroke="#a855f7" stroke-opacity="0.5" stroke-width="1"/><circle cx="1232.0" cy="700.0" r="7.3" fill="#a855f7" fill-opacity="0.8" stroke="#a855f7" stroke-opacity="0.5" stroke-width="1"/><circle cx="1220.0" cy="700.0" r="7.3" fill="#a855f7" fill-opacity="0.8" stroke="#a855f7" stroke-opacity="0.5" stroke-width="1"/><circle cx="914.0" cy="422.0" r="7.3" fill="#a855f7" fill-opacity="0.8" stroke="#a855f7" stroke-opacity="0.5" stroke-width="1"/><circle cx="926.0" cy="363.0" r="7.3" fill="#a855f7" fill-opacity="0.8" stroke="#a855f7" stroke-opacity="0.5" stroke-width="1"/><circle cx="1003.9" cy="181.1" r="8" fill="#ef4444" fill-opacity="0.85" stroke="#ef4444" stroke-opacity="0.5" stroke-width="1"/><circle cx="1296.6" cy="226.4" r="8" fill="#ef4444" fill-opacity="0.85" stroke="#ef4444" stroke-opacity="0.5" stroke-width="1"/><circle cx="1312.7" cy="313.0" r="8" fill="#ef4444" fill-opacity="0.85" stroke="#ef4444" stroke-opacity="0.5" stroke-width="1"/><circle cx="1317.0" cy="322.4" r="8" fill="#ef4444" fill-opacity="0.85" stroke="#ef4444" stroke-opacity="0.5" stroke-width="1"/><circle cx="1387.8" cy="328.8" r="8" fill="#ef4444" fill-opacity="0.85" stroke="#ef4444" stroke-opacity="0.5" stroke-width="1"/><circle cx="1296.3" cy="226.5" r="8" fill="#ef4444" fill-opacity="0.85" stroke="#ef4444" stroke-opacity="0.5" stroke-width="1"/><circle cx="1312.2" cy="312.6" r="8" fill="#ef4444" fill-opacity="0.85" stroke="#ef4444" stroke-opacity="0.5" stroke-width="1"/><circle cx="1317.3" cy="321.9" r="8" fill="#ef4444" fill-opacity="0.85" stroke="#ef4444" stroke-opacity="0.5" stroke-width="1"/><circle cx="1387.8" cy="328.9" r="8" fill="#ef4444" fill-opacity="0.85" stroke="#ef4444" stroke-opacity="0.5" stroke-width="1"/><circle cx="1383.1" cy="375.4" r="8" fill="#ef4444" fill-opacity="0.85" stroke="#ef4444" stroke-opacity="0.5" stroke-width="1"/><circle cx="1379.6" cy="382.4" r="8" fill="#ef4444" fill-opacity="0.85" stroke="#ef4444" stroke-opacity="0.5" stroke-width="1"/><circle cx="1416.9" cy="384.8" r="8" fill="#ef4444" fill-opacity="0.85" stroke="#ef4444" stroke-opacity="0.5" stroke-width="1"/><circle cx="1404.1" cy="415.0" r="8" fill="#ef4444" fill-opacity="0.85" stroke="#ef4444" stroke-opacity="0.5" stroke-width="1"/><circle cx="1300.0" cy="728.0" r="8" fill="#ef4444" fill-opacity="0.85" stroke="#ef4444" stroke-opacity="0.5" stroke-width="1"/><circle cx="1045" cy="122" r="13.5" fill="#475161" stroke="#d946ef" stroke-width="3.2"/><text x="1045" y="126.3" text-anchor="middle" font-family="Liberation Sans" font-weight="700" font-size="12" fill="#d946ef">TC</text><circle cx="857" cy="200" r="13.5" fill="#475161" stroke="#f97316" stroke-width="3.2"/><text x="857" y="204.3" text-anchor="middle" font-family="Liberation Sans" font-weight="700" font-size="12" fill="#f97316">DC</text><circle cx="1322" cy="251" r="13.5" fill="#475161" stroke="#f59e0b" stroke-width="3.2"/><text x="1322" y="255.3" text-anchor="middle" font-family="Liberation Sans" font-weight="700" font-size="12" fill="#f59e0b">BH</text><circle cx="1286" cy="268" r="13.5" fill="#475161" stroke="#14b8a6" stroke-width="3.2"/><text x="1286" y="272.3" text-anchor="middle" font-family="Liberation Sans" font-weight="700" font-size="12" fill="#14b8a6">RC</text><circle cx="1284" cy="306" r="13.5" fill="#475161" stroke="#a78bfa" stroke-width="3.2"/><text x="1284" y="310.3" text-anchor="middle" font-family="Liberation Sans" font-weight="700" font-size="12" fill="#a78bfa">WT</text><circle cx="1380" cy="306" r="13.5" fill="#475161" stroke="#d946ef" stroke-width="3.2"/><text x="1380" y="310.3" text-anchor="middle" font-family="Liberation Sans" font-weight="700" font-size="12" fill="#d946ef">MH</text><circle cx="1348" cy="322" r="13.5" fill="#475161" stroke="#f43f5e" stroke-width="3.2"/><text x="1348" y="326.3" text-anchor="middle" font-family="Liberation Sans" font-weight="700" font-size="12" fill="#f43f5e">HC</text><circle cx="1167" cy="348" r="13.5" fill="#475161" stroke="#facc15" stroke-width="3.2"/><text x="1167" y="352.3" text-anchor="middle" font-family="Liberation Sans" font-weight="700" font-size="12" fill="#facc15">LU</text><circle cx="1183" cy="349" r="13.5" fill="#475161" stroke="#22d3ee" stroke-width="3.2"/><text x="1183" y="353.3" text-anchor="middle" font-family="Liberation Sans" font-weight="700" font-size="12" fill="#22d3ee">CL</text><circle cx="1377" cy="353" r="13.5" fill="#475161" stroke="#facc15" stroke-width="3.2"/><text x="1377" y="357.3" text-anchor="middle" font-family="Liberation Sans" font-weight="700" font-size="12" fill="#facc15">EW</text><circle cx="1357" cy="354" r="13.5" fill="#475161" stroke="#e11d48" stroke-width="3.2"/><text x="1357" y="358.3" text-anchor="middle" font-family="Liberation Sans" font-weight="700" font-size="12" fill="#e11d48">DH</text><circle cx="1396" cy="392" r="13.5" fill="#475161" stroke="#06b6d4" stroke-width="3.2"/><text x="1396" y="396.3" text-anchor="middle" font-family="Liberation Sans" font-weight="700" font-size="12" fill="#06b6d4">GS</text><circle cx="1419" cy="409" r="13.5" fill="#475161" stroke="#60a5fa" stroke-width="3.2"/><text x="1419" y="413.3" text-anchor="middle" font-family="Liberation Sans" font-weight="700" font-size="12" fill="#60a5fa">TD</text><circle cx="1367" cy="446" r="13.5" fill="#475161" stroke="#14b8a6" stroke-width="3.2"/><text x="1367" y="450.3" text-anchor="middle" font-family="Liberation Sans" font-weight="700" font-size="12" fill="#14b8a6">BM</text><circle cx="1475" cy="462" r="13.5" fill="#475161" stroke="#f97316" stroke-width="3.2"/><text x="1475" y="466.3" text-anchor="middle" font-family="Liberation Sans" font-weight="700" font-size="12" fill="#f97316">WT</text><circle cx="1373" cy="485" r="13.5" fill="#475161" stroke="#f43f5e" stroke-width="3.2"/><text x="1373" y="489.3" text-anchor="middle" font-family="Liberation Sans" font-weight="700" font-size="12" fill="#f43f5e">WE</text><circle cx="985" cy="527" r="13.5" fill="#475161" stroke="#84cc16" stroke-width="3.2"/><text x="985" y="531.3" text-anchor="middle" font-family="Liberation Sans" font-weight="700" font-size="12" fill="#84cc16">AS</text><circle cx="1172" cy="588" r="13.5" fill="#475161" stroke="#84cc16" stroke-width="3.2"/><text x="1172" y="592.3" text-anchor="middle" font-family="Liberation Sans" font-weight="700" font-size="12" fill="#84cc16">CR</text><circle cx="1220" cy="620" r="13.5" fill="#475161" stroke="#84cc16" stroke-width="3.2"/><text x="1220" y="624.3" text-anchor="middle" font-family="Liberation Sans" font-weight="700" font-size="12" fill="#84cc16">HB</text><circle cx="1200" cy="642" r="13.5" fill="#475161" stroke="#facc15" stroke-width="3.2"/><text x="1200" y="646.3" text-anchor="middle" font-family="Liberation Sans" font-weight="700" font-size="12" fill="#facc15">CO</text><circle cx="1215" cy="640" r="13.5" fill="#475161" stroke="#22d3ee" stroke-width="3.2"/><text x="1215" y="644.3" text-anchor="middle" font-family="Liberation Sans" font-weight="700" font-size="12" fill="#22d3ee">XX</text><circle cx="1217" cy="653" r="13.5" fill="#475161" stroke="#d946ef" stroke-width="3.2"/><text x="1217" y="657.3" text-anchor="middle" font-family="Liberation Sans" font-weight="700" font-size="12" fill="#d946ef">JM</text><circle cx="1235" cy="667" r="13.5" fill="#475161" stroke="#f97316" stroke-width="3.2"/><text x="1235" y="671.3" text-anchor="middle" font-family="Liberation Sans" font-weight="700" font-size="12" fill="#f97316">JD</text><circle cx="1251" cy="675" r="13.5" fill="#475161" stroke="#22d3ee" stroke-width="3.2"/><text x="1251" y="679.3" text-anchor="middle" font-family="Liberation Sans" font-weight="700" font-size="12" fill="#22d3ee">SD</text><circle cx="1290" cy="715" r="13.5" fill="#475161" stroke="#84cc16" stroke-width="3.2"/><text x="1290" y="719.3" text-anchor="middle" font-family="Liberation Sans" font-weight="700" font-size="12" fill="#84cc16">SW</text><circle cx="1354" cy="710" r="13.5" fill="#475161" stroke="#60a5fa" stroke-width="3.2"/><text x="1354" y="714.3" text-anchor="middle" font-family="Liberation Sans" font-weight="700" font-size="12" fill="#60a5fa">LB</text><circle cx="1440" cy="696" r="13.5" fill="#475161" stroke="#facc15" stroke-width="3.2"/><text x="1440" y="700.3" text-anchor="middle" font-family="Liberation Sans" font-weight="700" font-size="12" fill="#facc15">LG</text><circle cx="1706" cy="652" r="13.5" fill="#475161" stroke="#a78bfa" stroke-width="3.2"/><text x="1706" y="656.3" text-anchor="middle" font-family="Liberation Sans" font-weight="700" font-size="12" fill="#a78bfa">TR</text><circle cx="1673" cy="703" r="13.5" fill="#475161" stroke="#22d3ee" stroke-width="3.2"/><text x="1673" y="707.3" text-anchor="middle" font-family="Liberation Sans" font-weight="700" font-size="12" fill="#22d3ee">SJ</text><circle cx="1656" cy="738" r="13.5" fill="#475161" stroke="#e11d48" stroke-width="3.2"/><text x="1656" y="742.3" text-anchor="middle" font-family="Liberation Sans" font-weight="700" font-size="12" fill="#e11d48">GM</text></svg>
<div class="b" style="left:1811.00px;top:80.30px;width:277.00px;height:60.30px;backdrop-filter:blur(3px);background:rgba(75,85,99,0.8);border:1px solid #3b4452;border-radius:10px;box-sizing:border-box"></div>
<div class="t" style="top:94.25px;font:700 17.5px/17.5px 'Liberation Sans', sans-serif;color:#ffffff;left:1345.00px;width:1000px;text-align:center;">32</div>
<div class="t" style="top:115.52px;font:400 10.8px/10.8px 'Liberation Sans', sans-serif;color:#a3a9b3;left:1345.00px;width:1000px;text-align:center;">ACTIVE</div>
<div class="t" style="top:94.25px;font:700 17.5px/17.5px 'Liberation Sans', sans-serif;color:#f87171;left:1419.00px;width:1000px;text-align:center;">17</div>
<div class="t" style="top:115.52px;font:400 10.8px/10.8px 'Liberation Sans', sans-serif;color:#a3a9b3;left:1419.00px;width:1000px;text-align:center;">CRITICAL</div>
<div class="t" style="top:94.25px;font:700 17.5px/17.5px 'Liberation Sans', sans-serif;color:#c084fc;left:1488.00px;width:1000px;text-align:center;">124</div>
<div class="t" style="top:115.52px;font:400 10.8px/10.8px 'Liberation Sans', sans-serif;color:#a3a9b3;left:1488.00px;width:1000px;text-align:center;">HIGH</div>
<div class="t" style="top:94.25px;font:700 17.5px/17.5px 'Liberation Sans', sans-serif;color:#ffffff;left:1552.40px;width:1000px;text-align:center;">2661</div>
<div class="t" style="top:115.52px;font:400 10.8px/10.8px 'Liberation Sans', sans-serif;color:#a3a9b3;left:1552.40px;width:1000px;text-align:center;">TOTAL</div>
<div class="b" style="left:1879.50px;top:96.00px;width:1.00px;height:29.00px;background:#4b5563"></div>
<div class="b" style="left:1958.30px;top:96.00px;width:1.00px;height:29.00px;background:#4b5563"></div>
<div class="b" style="left:2017.40px;top:96.00px;width:1.00px;height:29.00px;background:#4b5563"></div>
<div class="b" style="left:398.70px;top:444.30px;width:176.20px;height:294.00px;backdrop-filter:blur(3px);background:rgba(80,88,100,0.78);border:1px solid #3b4452;border-radius:10px;box-sizing:border-box"></div>
<div class="t" style="top:461.82px;font:700 11.8px/11.8px 'Liberation Sans', sans-serif;color:#a3a9b3;letter-spacing:0.5px;left:413.00px;">MAP LEGEND</div>
<div class="b" style="left:413.50px;top:487.50px;width:13.00px;height:13.00px;background:#06b6d4;border-radius:2px"></div>
<svg class="b" style="left:414.50px;top:488.50px" width="11.00" height="11.00" viewBox="0 0 24 24" fill="none" stroke="#1f2937" stroke-width="3.2" stroke-linecap="round" stroke-linejoin="round"><path d="M20 6 9 17l-5-5"/></svg>
<div class="b" style="left:437.20px;top:487.70px;width:12.60px;height:12.60px;background:#22d3ee;border-radius:50%"></div>
<div class="t" style="top:486.88px;font:400 15.2px/15.2px 'Liberation Sans', sans-serif;color:#ffffff;left:459.00px;">Operators</div>
<div class="t" style="top:488.55px;font:400 11.5px/11.5px 'Liberation Sans', sans-serif;color:#9ca3af;left:536.70px;">(32)</div>
<div class="b" style="left:413.50px;top:514.10px;width:13.00px;height:13.00px;background:#06b6d4;border-radius:2px"></div>
<svg class="b" style="left:414.50px;top:515.10px" width="11.00" height="11.00" viewBox="0 0 24 24" fill="none" stroke="#1f2937" stroke-width="3.2" stroke-linecap="round" stroke-linejoin="round"><path d="M20 6 9 17l-5-5"/></svg>
<div class="b" style="left:437.00px;top:519.40px;width:20.00px;height:2.40px;background:#22d3ee;border-radius:1px"></div>
<div class="t" style="top:513.48px;font:400 15.2px/15.2px 'Liberation Sans', sans-serif;color:#ffffff;left:466.20px;">Pathways</div>
<div class="b" style="left:413.50px;top:540.40px;width:13.00px;height:13.00px;background:#ffffff;border-radius:2px"></div>
<div class="b" style="left:437.50px;top:540.90px;width:12.00px;height:12.00px;background:#5b8def;border-radius:2px"></div>
<div class="t" style="top:539.78px;font:400 15.2px/15.2px 'Liberation Sans', sans-serif;color:#ffffff;left:459.00px;">Weather</div>
<div class="b" style="left:413.50px;top:575.10px;width:13.00px;height:13.00px;background:#ef4444;border-radius:2px"></div>
<svg class="b" style="left:414.50px;top:576.10px" width="11.00" height="11.00" viewBox="0 0 24 24" fill="none" stroke="#ffffff" stroke-width="3.2" stroke-linecap="round" stroke-linejoin="round"><path d="M20 6 9 17l-5-5"/></svg>
<div class="b" style="left:436.00px;top:574.10px;width:15.00px;height:15.00px;background:#ef4444;border-radius:50%"></div>
<div class="t" style="top:574.48px;font:400 15.2px/15.2px 'Liberation Sans', sans-serif;color:#ffffff;left:461.00px;">Critical</div>
<div class="t" style="top:576.15px;font:400 11.5px/11.5px 'Liberation Sans', sans-serif;color:#9ca3af;left:519.00px;">(17)</div>
<div class="b" style="left:413.50px;top:601.40px;width:13.00px;height:13.00px;background:#a855f7;border-radius:2px"></div>
<svg class="b" style="left:414.50px;top:602.40px" width="11.00" height="11.00" viewBox="0 0 24 24" fill="none" stroke="#ffffff" stroke-width="3.2" stroke-linecap="round" stroke-linejoin="round"><path d="M20 6 9 17l-5-5"/></svg>
<div class="b" style="left:437.50px;top:601.90px;width:12.00px;height:12.00px;background:#a855f7;border-radius:50%"></div>
<div class="t" style="top:600.78px;font:400 15.2px/15.2px 'Liberation Sans', sans-serif;color:#ffffff;left:459.00px;">High</div>
<div class="t" style="top:602.45px;font:400 11.5px/11.5px 'Liberation Sans', sans-serif;color:#9ca3af;left:500.00px;">(124)</div>
<div class="b" style="left:413.50px;top:627.90px;width:13.00px;height:13.00px;background:#eab308;border-radius:2px"></div>
<svg class="b" style="left:414.50px;top:628.90px" width="11.00" height="11.00" viewBox="0 0 24 24" fill="none" stroke="#1f2937" stroke-width="3.2" stroke-linecap="round" stroke-linejoin="round"><path d="M20 6 9 17l-5-5"/></svg>
<div class="b" style="left:438.50px;top:629.40px;width:10.00px;height:10.00px;background:#eab308;border-radius:50%"></div>
<div class="t" style="top:627.28px;font:400 15.2px/15.2px 'Liberation Sans', sans-serif;color:#ffffff;left:456.70px;">Medium</div>
<div class="t" style="top:628.95px;font:400 11.5px/11.5px 'Liberation Sans', sans-serif;color:#9ca3af;left:521.50px;">(420)</div>
<div class="b" style="left:413.50px;top:654.20px;width:13.00px;height:13.00px;background:#22c55e;border-radius:2px"></div>
<svg class="b" style="left:414.50px;top:655.20px" width="11.00" height="11.00" viewBox="0 0 24 24" fill="none" stroke="#1f2937" stroke-width="3.2" stroke-linecap="round" stroke-linejoin="round"><path d="M20 6 9 17l-5-5"/></svg>
<div class="b" style="left:439.50px;top:656.70px;width:8.00px;height:8.00px;background:#22c55e;border-radius:50%"></div>
<div class="t" style="top:653.58px;font:400 15.2px/15.2px 'Liberation Sans', sans-serif;color:#ffffff;left:454.30px;">Low</div>
<div class="t" style="top:655.25px;font:400 11.5px/11.5px 'Liberation Sans', sans-serif;color:#9ca3af;left:492.30px;">(387)</div>
<div class="b" style="left:413.50px;top:680.70px;width:13.00px;height:13.00px;background:#4b5563;border-radius:2px"></div>
<svg class="b" style="left:414.50px;top:681.70px" width="11.00" height="11.00" viewBox="0 0 24 24" fill="none" stroke="#ffffff" stroke-width="3.2" stroke-linecap="round" stroke-linejoin="round"><path d="M20 6 9 17l-5-5"/></svg>
<div class="b" style="left:440.50px;top:684.20px;width:6.00px;height:6.00px;background:#4b5563;border-radius:50%"></div>
<div class="t" style="top:680.08px;font:400 15.2px/15.2px 'Liberation Sans', sans-serif;color:#ffffff;left:454.00px;">Routine</div>
<div class="t" style="top:681.75px;font:400 11.5px/11.5px 'Liberation Sans', sans-serif;color:#9ca3af;left:514.00px;">(66)</div>
<div class="b" style="left:413.50px;top:707.30px;width:13.00px;height:13.00px;background:#4b5563;border-radius:2px"></div>
<svg class="b" style="left:414.50px;top:708.30px" width="11.00" height="11.00" viewBox="0 0 24 24" fill="none" stroke="#ffffff" stroke-width="3.2" stroke-linecap="round" stroke-linejoin="round"><path d="M20 6 9 17l-5-5"/></svg>
<div class="b" style="left:441.00px;top:711.30px;width:5.00px;height:5.00px;background:#4b5563;border-radius:50%"></div>
<div class="t" style="top:706.68px;font:400 15.2px/15.2px 'Liberation Sans', sans-serif;color:#ffffff;left:453.30px;">N/A</div>
<div class="t" style="top:708.35px;font:400 11.5px/11.5px 'Liberation Sans', sans-serif;color:#9ca3af;left:488.00px;">(1647)</div>
<div class="b" style="left:413.00px;top:564.30px;width:147.00px;height:1.20px;background:#1f2937"></div>
<div class="b" style="left:1238.00px;top:492.00px;width:233.00px;height:191.00px;background:rgba(255,255,255,0.9);border-radius:6px;box-shadow:0 1px 4px rgba(0,0,0,0.3)"></div>
<svg class="b" style="left:1343px;top:682px" width="26" height="14"><path d="M0 0 L13 12 L26 0 Z" fill="rgba(255,255,255,0.9)"/></svg>
<div class="t" style="top:503.15px;font:700 16.5px/16.5px 'Liberation Sans', sans-serif;color:#5aa5e8;left:1246.90px;">Luke B.</div>
<div class="t" style="top:533.58px;font:400 14.2px/14.2px 'Liberation Sans', sans-serif;color:#6b7280;left:1246.90px;">Area</div>
<div class="t" style="top:533.58px;font:400 14.2px/14.2px 'Liberation Sans', sans-serif;color:#333;right:1062.70px;">A_WAB_SOUTH_CENTRAL</div>
<div class="t" style="top:560.48px;font:400 14.2px/14.2px 'Liberation Sans', sans-serif;color:#6b7280;left:1246.90px;">Status</div>
<div class="t" style="top:560.48px;font:400 14.2px/14.2px 'Liberation Sans', sans-serif;color:#eab308;right:1062.70px;">On Track</div>
<div class="t" style="top:586.48px;font:400 14.2px/14.2px 'Liberation Sans', sans-serif;color:#6b7280;left:1270.00px;">Travel</div>
<div class="t" style="top:586.48px;font:400 14.2px/14.2px 'Liberation Sans', sans-serif;color:#333;right:1062.70px;">6min / 8min</div>
<div class="t" style="top:613.58px;font:400 14.2px/14.2px 'Liberation Sans', sans-serif;color:#6b7280;left:1246.90px;">Progress</div>
<div class="t" style="top:613.58px;font:400 14.2px/14.2px 'Liberation Sans', sans-serif;color:#333;right:1062.70px;">6/23 sites</div>
<div class="t" style="top:639.58px;font:400 14.2px/14.2px 'Liberation Sans', sans-serif;color:#6b7280;left:1246.90px;">Completion</div>
<div class="t" style="top:639.58px;font:400 14.2px/14.2px 'Liberation Sans', sans-serif;color:#333;right:1062.70px;">28%</div>
<svg class="b" style="left:1248px;top:585px" width="16" height="13" viewBox="0 0 16 13"><path d="M1 7 L3 3 Q4 1.5 6 1.5 L11 1.5 Q12.5 1.5 13.5 3 L15 7 L15 10 L1 10 Z" fill="#e53e4e"/><rect x="4" y="3" width="3.5" height="3" fill="#9ed0f0"/><rect x="8.5" y="3" width="3.5" height="3" fill="#9ed0f0"/><circle cx="4" cy="10.5" r="1.8" fill="#333"/><circle cx="12" cy="10.5" r="1.8" fill="#333"/></svg>
<div class="b" style="left:1246.90px;top:669.00px;width:214.40px;height:6.00px;background:#e5e7eb;border-radius:3px"></div>
<div class="b" style="left:1246.90px;top:669.00px;width:59.00px;height:6.00px;background:#4a90d9;border-radius:3px"></div>
<div class="b" style="left:1821.50px;top:733.30px;width:280.50px;height:18.80px;background:rgba(255,255,255,0.8)"></div>
<div class="b" style="left:1828.00px;top:738.00px;width:13.00px;height:9.00px;background:linear-gradient(#3b82f6 50%, #facc15 50%)"></div>
<div class="t" style="top:736.18px;font:400 13.2px/13.2px 'Liberation Sans', sans-serif;color:#333;left:1845.50px;"><span style="color:#0078a8">Leaflet</span> | &#169; <span style="color:#0078a8">OpenStreetMap</span> contributors</div>
<div class="b" style="left:0.00px;top:63.00px;width:2524.00px;height:1.00px;background:#252d3b"></div>
<svg class="b" style="left:18.00px;top:17.00px" width="24.00" height="24.00" viewBox="0 0 24 24" fill="none" stroke="#2dd4bf" stroke-width="2" stroke-linecap="round" stroke-linejoin="round"><circle cx="19" cy="6" r="3"/><path d="M22 12v3a2 2 0 0 1-2 2H4a2 2 0 0 1-2-2V5a2 2 0 0 1 2-2h10"/><path d="M12 17v4"/><path d="M8 21h8"/></svg>
<div class="t" style="top:18.04px;font:700 21.6px/21.6px 'Liberation Sans', sans-serif;color:#ffffff;left:51.50px;">Control Room</div>
<div class="b" style="left:209.00px;top:17.00px;width:101.00px;height:24.00px;background:#363f4e;border-radius:5px"></div>
<div class="t" style="top:21.45px;font:400 15.5px/15.5px 'Liberation Sans', sans-serif;color:#d1d5db;left:218.50px;">2025-04-10</div>
<div class="b" style="left:345.00px;top:8.00px;width:353.00px;height:41.00px;background:#1e2634;border-radius:10px"></div>
<div class="b" style="left:346.00px;top:11.00px;width:125.00px;height:35.00px;background:#184b4b;border:1px solid #0f766e;border-radius:8px;box-sizing:border-box"></div>
<svg class="b" style="left:360.60px;top:20.00px" width="16.80" height="16.80" viewBox="0 0 24 24" fill="none" stroke="#2dd4bf" stroke-width="2" stroke-linecap="round" stroke-linejoin="round"><rect width="7" height="7" x="3" y="3" rx="1"/><rect width="7" height="7" x="14" y="3" rx="1"/><rect width="7" height="7" x="14" y="14" rx="1"/><rect width="7" height="7" x="3" y="14" rx="1"/></svg>
<div class="t" style="top:21.02px;font:400 14.8px/14.8px 'Liberation Sans', sans-serif;color:#2dd4bf;left:385.50px;-webkit-text-stroke:0.35px #2dd4bf">Command</div>
<svg class="b" style="left:490.00px;top:20.00px" width="17.00" height="17.00" viewBox="0 0 24 24" fill="none" stroke="#9ca3af" stroke-width="1.8" stroke-linecap="round" stroke-linejoin="round"><path d="M3 3v18h18"/><path d="M8 17v-3"/><path d="M13 17V9"/><path d="M18 17V6"/></svg>
<div class="t" style="top:21.46px;font:400 15.4px/15.4px 'Liberation Sans', sans-serif;color:#9ca3af;left:515.40px;">Production</div>
<svg class="b" style="left:625.50px;top:19.50px" width="17.00" height="17.00" viewBox="0 0 24 24" fill="none" stroke="#9ca3af" stroke-width="1.8" stroke-linecap="round" stroke-linejoin="round"><path d="M14.106 5.553a2 2 0 0 0 1.788 0l3.659-1.83A1 1 0 0 1 21 4.619v12.764a1 1 0 0 1-.553.894l-4.553 2.277a2 2 0 0 1-1.788 0l-4.212-2.106a2 2 0 0 0-1.788 0l-3.659 1.83A1 1 0 0 1 3 19.381V6.618a1 1 0 0 1 .553-.894l4.553-2.277a2 2 0 0 1 1.788 0z"/><path d="M15 5.764v15"/><path d="M9 3.236v15"/></svg>
<div class="t" style="top:21.46px;font:400 15.4px/15.4px 'Liberation Sans', sans-serif;color:#9ca3af;left:650.00px;">Map</div>
<div class="t" style="top:21.49px;font:400 15.1px/15.1px 'Liberation Sans', sans-serif;color:#9ca3af;left:1937.00px;">Plan Status:</div>
<svg class="b" style="left:2037.80px;top:20.30px" width="17.50" height="17.50" viewBox="0 0 24 24" fill="none" stroke="#22c55e" stroke-width="2" stroke-linecap="round" stroke-linejoin="round"><path d="M21.801 10A10 10 0 1 1 17 3.335"/><path d="m9 11 3 3L22 4"/></svg>
<div class="t" style="top:21.54px;font:400 14.6px/14.6px 'Liberation Sans', sans-serif;color:#e5e7eb;left:2060.00px;">Engine</div>
<svg class="b" style="left:2124.60px;top:20.30px" width="17.50" height="17.50" viewBox="0 0 24 24" fill="none" stroke="#22c55e" stroke-width="2" stroke-linecap="round" stroke-linejoin="round"><path d="M21.801 10A10 10 0 1 1 17 3.335"/><path d="m9 11 3 3L22 4"/></svg>
<div class="t" style="top:21.49px;font:400 15.1px/15.1px 'Liberation Sans', sans-serif;color:#e5e7eb;left:2147.30px;">All Scored</div>
<svg class="b" style="left:2234.70px;top:20.30px" width="17.50" height="17.50" viewBox="0 0 24 24" fill="none" stroke="#22c55e" stroke-width="2" stroke-linecap="round" stroke-linejoin="round"><path d="M21.801 10A10 10 0 1 1 17 3.335"/><path d="m9 11 3 3L22 4"/></svg>
<div class="t" style="top:21.54px;font:400 14.6px/14.6px 'Liberation Sans', sans-serif;color:#e5e7eb;left:2257.40px;">Routes</div>
<svg class="b" style="left:2322.70px;top:20.30px" width="17.50" height="17.50" viewBox="0 0 24 24" fill="none" stroke="#22c55e" stroke-width="2" stroke-linecap="round" stroke-linejoin="round"><path d="M21.801 10A10 10 0 1 1 17 3.335"/><path d="m9 11 3 3L22 4"/></svg>
<div class="t" style="top:21.56px;font:400 14.4px/14.4px 'Liberation Sans', sans-serif;color:#e5e7eb;left:2344.70px;">Data OK</div>
<svg class="b" style="left:2426.50px;top:19.00px" width="20.00" height="20.00" viewBox="0 0 24 24" fill="none" stroke="#9ca3af" stroke-width="2" stroke-linecap="round" stroke-linejoin="round"><path d="M3 12a9 9 0 0 1 9-9 9.75 9.75 0 0 1 6.74 2.74L21 8"/><path d="M21 3v5h-5"/><path d="M21 12a9 9 0 0 1-9 9 9.75 9.75 0 0 1-6.74-2.74L3 16"/><path d="M8 16H3v5"/></svg>
<svg class="b" style="left:2479.00px;top:18.00px" width="20.50" height="20.50" viewBox="0 0 24 24" fill="none" stroke="#9ca3af" stroke-width="1.8" stroke-linecap="round" stroke-linejoin="round"><rect width="18" height="18" x="3" y="3" rx="2"/><path d="M9 3v18"/><path d="m16 15-3-3 3-3"/></svg>
<svg class="b" style="left:17.50px;top:70.00px" width="17.00" height="17.00" viewBox="0 0 24 24" fill="none" stroke="#22d3ee" stroke-width="2" stroke-linecap="round" stroke-linejoin="round"><path d="M4 14a1 1 0 0 1-.78-1.63l9.9-10.2a.5.5 0 0 1 .86.46l-1.92 6.02A1 1 0 0 0 13 10h7a1 1 0 0 1 .78 1.63l-9.9 10.2a.5.5 0 0 1-.86-.46l1.92-6.02A1 1 0 0 0 11 14z"/></svg>
<div class="t" style="top:71.60px;font:700 14px/14px 'Liberation Sans', sans-serif;color:#9ca3af;letter-spacing:1.0px;left:42.00px;">ACTIVITY FEED</div>
<div class="b" style="left:18.00px;top:107.00px;width:341.00px;height:91.20px;background:#1c1a28;border:1px solid #2a2a38;border-left:3px solid #ef4444;border-radius:10px;box-sizing:border-box"></div>
<div class="t" style="top:124.07px;font:700 12.3px/12.3px 'Liberation Sans', sans-serif;color:#f87171;left:35.60px;">CRITICAL:</div>
<div class="t" style="top:123.28px;font:700 14.2px/14.2px 'Liberation Sans', sans-serif;color:#ffffff;left:102.50px;">Below Forecast Flag</div>
<div class="b" style="left:284.00px;top:120.00px;width:59.00px;height:21.00px;background:#4a1d27;border-radius:5px"></div>
<div class="t" style="top:125.22px;font:700 10.8px/10.8px 'Liberation Sans', sans-serif;color:#f87171;left:291.00px;">URGENT</div>
<div class="t" style="top:146.63px;font:400 13.7px/13.7px 'Liberation Sans', sans-serif;color:#9ca3af;left:35.60px;">Well/Site:</div>
<div class="t" style="top:146.66px;font:400 13.4px/13.4px 'Liberation Sans', sans-serif;color:#f3f4f6;left:97.80px;-webkit-text-stroke:0.25px #f3f4f6">ROARK TRUST 14-14-24 3H</div>
<div class="t" style="top:169.64px;font:400 13.6px/13.6px 'Liberation Sans', sans-serif;color:#9ca3af;left:35.60px;">Escalated 7196h ago</div>
<div class="b" style="left:18.00px;top:214.60px;width:341.00px;height:109.80px;background:#1c1a28;border:1px solid #2a2a38;border-left:3px solid #ef4444;border-radius:10px;box-sizing:border-box"></div>
<div class="t" style="top:231.67px;font:700 12.3px/12.3px 'Liberation Sans', sans-serif;color:#f87171;left:35.60px;">CRITICAL:</div>
<div class="t" style="top:230.88px;font:700 14.2px/14.2px 'Liberation Sans', sans-serif;color:#ffffff;left:102.50px;">Below Forecast Flag</div>
<div class="b" style="left:284.00px;top:227.60px;width:59.00px;height:21.00px;background:#4a1d27;border-radius:5px"></div>
<div class="t" style="top:232.82px;font:700 10.8px/10.8px 'Liberation Sans', sans-serif;color:#f87171;left:291.00px;">URGENT</div>
<div class="t" style="top:254.23px;font:400 13.7px/13.7px 'Liberation Sans', sans-serif;color:#9ca3af;left:35.60px;">Well/Site:</div>
<div class="t" style="top:254.26px;font:400 13.4px/13.4px 'Liberation Sans', sans-serif;color:#f3f4f6;left:97.80px;-webkit-text-stroke:0.25px #f3f4f6">KNOWLES 25X36-19-26</div>
<div class="t" style="top:274.36px;font:400 13.4px/13.4px 'Liberation Sans', sans-serif;color:#f3f4f6;left:35.60px;-webkit-text-stroke:0.25px #f3f4f6">2HB</div>
<div class="t" style="top:297.34px;font:400 13.6px/13.6px 'Liberation Sans', sans-serif;color:#9ca3af;left:35.60px;">Escalated 7196h ago</div>
<div class="b" style="left:18.00px;top:340.30px;width:341.00px;height:91.00px;background:#1c1a28;border:1px solid #2a2a38;border-left:3px solid #ef4444;border-radius:10px;box-sizing:border-box"></div>
<div class="t" style="top:357.37px;font:700 12.3px/12.3px 'Liberation Sans', sans-serif;color:#f87171;left:35.60px;">CRITICAL:</div>
<div class="t" style="top:356.58px;font:700 14.2px/14.2px 'Liberation Sans', sans-serif;color:#ffffff;left:102.50px;">Compressor Flag</div>
<div class="b" style="left:284.00px;top:353.30px;width:59.00px;height:21.00px;background:#4a1d27;border-radius:5px"></div>
<div class="t" style="top:358.52px;font:700 10.8px/10.8px 'Liberation Sans', sans-serif;color:#f87171;left:291.00px;">URGENT</div>
<div class="t" style="top:379.93px;font:400 13.7px/13.7px 'Liberation Sans', sans-serif;color:#9ca3af;left:35.60px;">Well/Site:</div>
<div class="t" style="top:379.96px;font:400 13.4px/13.4px 'Liberation Sans', sans-serif;color:#f3f4f6;left:97.80px;-webkit-text-stroke:0.25px #f3f4f6">TOM 36-17-24-1HB</div>
<div class="t" style="top:402.94px;font:400 13.6px/13.6px 'Liberation Sans', sans-serif;color:#9ca3af;left:35.60px;">Escalated 7196h ago</div>
<div class="b" style="left:18.00px;top:446.70px;width:341.00px;height:110.00px;background:#1c1a28;border:1px solid #2a2a38;border-left:3px solid #ef4444;border-radius:10px;box-sizing:border-box"></div>
<div class="t" style="top:463.77px;font:700 12.3px/12.3px 'Liberation Sans', sans-serif;color:#f87171;left:35.60px;">CRITICAL:</div>
<div class="t" style="top:462.98px;font:700 14.2px/14.2px 'Liberation Sans', sans-serif;color:#ffffff;left:102.50px;">Downtime Flag</div>
<div class="b" style="left:284.00px;top:459.70px;width:59.00px;height:21.00px;background:#4a1d27;border-radius:5px"></div>
<div class="t" style="top:464.92px;font:700 10.8px/10.8px 'Liberation Sans', sans-serif;color:#f87171;left:291.00px;">URGENT</div>
<div class="t" style="top:486.33px;font:400 13.7px/13.7px 'Liberation Sans', sans-serif;color:#9ca3af;left:35.60px;">Well/Site:</div>
<div class="t" style="top:486.36px;font:400 13.4px/13.4px 'Liberation Sans', sans-serif;color:#f3f4f6;left:97.80px;-webkit-text-stroke:0.25px #f3f4f6">HUNTER HEFLEY 34 SL</div>
<div class="t" style="top:506.46px;font:400 13.4px/13.4px 'Liberation Sans', sans-serif;color:#f3f4f6;left:35.60px;-webkit-text-stroke:0.25px #f3f4f6">04H</div>
<div class="t" style="top:529.44px;font:400 13.6px/13.6px 'Liberation Sans', sans-serif;color:#9ca3af;left:35.60px;">Escalated 5063h ago</div>
<div class="b" style="left:18.00px;top:572.40px;width:341.00px;height:91.00px;background:#1c1a28;border:1px solid #2a2a38;border-left:3px solid #ef4444;border-radius:10px;box-sizing:border-box"></div>
<div class="t" style="top:589.47px;font:700 12.3px/12.3px 'Liberation Sans', sans-serif;color:#f87171;left:35.60px;">CRITICAL:</div>
<div class="t" style="top:588.68px;font:700 14.2px/14.2px 'Liberation Sans', sans-serif;color:#ffffff;left:102.50px;">Downhole Failure Flag</div>
<div class="b" style="left:284.00px;top:585.40px;width:59.00px;height:21.00px;background:#4a1d27;border-radius:5px"></div>
<div class="t" style="top:590.62px;font:700 10.8px/10.8px 'Liberation Sans', sans-serif;color:#f87171;left:291.00px;">URGENT</div>
<div class="t" style="top:612.03px;font:400 13.7px/13.7px 'Liberation Sans', sans-serif;color:#9ca3af;left:35.60px;">Well/Site:</div>
<div class="t" style="top:612.06px;font:400 13.4px/13.4px 'Liberation Sans', sans-serif;color:#f3f4f6;left:97.80px;-webkit-text-stroke:0.25px #f3f4f6">JOHNNIE 36-16-23 1H</div>
<div class="t" style="top:635.04px;font:400 13.6px/13.6px 'Liberation Sans', sans-serif;color:#9ca3af;left:35.60px;">Escalated 5063h ago</div>
<div class="b" style="left:18.00px;top:679.30px;width:341.00px;height:91.00px;background:#1c1a28;border:1px solid #2a2a38;border-left:3px solid #ef4444;border-radius:10px;box-sizing:border-box"></div>
<div class="t" style="top:696.37px;font:700 12.3px/12.3px 'Liberation Sans', sans-serif;color:#f87171;left:35.60px;">CRITICAL:</div>
<div class="t" style="top:695.58px;font:700 14.2px/14.2px 'Liberation Sans', sans-serif;color:#ffffff;left:102.50px;">Below Forecast Flag</div>
<div class="b" style="left:284.00px;top:692.30px;width:59.00px;height:21.00px;background:#4a1d27;border-radius:5px"></div>
<div class="t" style="top:697.52px;font:700 10.8px/10.8px 'Liberation Sans', sans-serif;color:#f87171;left:291.00px;">URGENT</div>
<div class="t" style="top:718.93px;font:400 13.7px/13.7px 'Liberation Sans', sans-serif;color:#9ca3af;left:35.60px;">Well/Site:</div>
<div class="t" style="top:718.96px;font:400 13.4px/13.4px 'Liberation Sans', sans-serif;color:#f3f4f6;left:97.80px;-webkit-text-stroke:0.25px #f3f4f6">BRUNER MARGARETE #2</div>
<div class="t" style="top:741.94px;font:400 13.6px/13.6px 'Liberation Sans', sans-serif;color:#9ca3af;left:35.60px;">Escalated 4662h ago</div>
<div class="b" style="left:18.00px;top:786.00px;width:341.00px;height:91.00px;background:#1c1a28;border:1px solid #2a2a38;border-left:3px solid #ef4444;border-radius:10px;box-sizing:border-box"></div>
<div class="t" style="top:803.07px;font:700 12.3px/12.3px 'Liberation Sans', sans-serif;color:#f87171;left:35.60px;">CRITICAL:</div>
<div class="t" style="top:802.28px;font:700 14.2px/14.2px 'Liberation Sans', sans-serif;color:#ffffff;left:102.50px;">Above Forecast Flag</div>
<div class="b" style="left:284.00px;top:799.00px;width:59.00px;height:21.00px;background:#4a1d27;border-radius:5px"></div>
<div class="t" style="top:804.22px;font:700 10.8px/10.8px 'Liberation Sans', sans-serif;color:#f87171;left:291.00px;">URGENT</div>
<div class="t" style="top:825.63px;font:400 13.7px/13.7px 'Liberation Sans', sans-serif;color:#9ca3af;left:35.60px;">Well/Site:</div>
<div class="t" style="top:825.66px;font:400 13.4px/13.4px 'Liberation Sans', sans-serif;color:#f3f4f6;left:97.80px;-webkit-text-stroke:0.25px #f3f4f6">NEAL K 10-19-25 1H</div>
<div class="t" style="top:848.64px;font:400 13.6px/13.6px 'Liberation Sans', sans-serif;color:#9ca3af;left:35.60px;">Escalated 4297h ago</div>
<div class="b" style="left:18.00px;top:892.60px;width:341.00px;height:91.00px;background:#162029;border:1px solid #253039;border-left:3px solid #22c55e;border-radius:10px;box-sizing:border-box"></div>
<div class="t" style="top:909.67px;font:700 12.3px/12.3px 'Liberation Sans', sans-serif;color:#4ade80;left:35.60px;">LOW:</div>
<div class="t" style="top:908.87px;font:700 14.3px/14.3px 'Liberation Sans', sans-serif;color:#ffffff;left:73.80px;">expecting marketing change</div>
<div class="b" style="left:280.00px;top:905.20px;width:63.00px;height:20.50px;background:#15412c;border-radius:5px"></div>
<div class="t" style="top:910.54px;font:700 10.6px/10.6px 'Liberation Sans', sans-serif;color:#4ade80;left:286.80px;">PENDING</div>
<div class="t" style="top:932.23px;font:400 13.7px/13.7px 'Liberation Sans', sans-serif;color:#9ca3af;left:35.60px;">Well/Site:</div>
<div class="t" style="top:932.26px;font:400 13.4px/13.4px 'Liberation Sans', sans-serif;color:#f3f4f6;left:97.80px;-webkit-text-stroke:0.25px #f3f4f6">MDT 19-18-24 1H</div>
<div class="t" style="top:955.24px;font:400 13.6px/13.6px 'Liberation Sans', sans-serif;color:#9ca3af;left:35.60px;">Active deferral</div>
<div class="b" style="left:18.00px;top:998.70px;width:341.00px;height:91.00px;background:#162029;border:1px solid #253039;border-left:3px solid #22c55e;border-radius:10px;box-sizing:border-box"></div>
<div class="t" style="top:1015.77px;font:700 12.3px/12.3px 'Liberation Sans', sans-serif;color:#4ade80;left:35.60px;">LOW:</div>
<div class="t" style="top:1014.97px;font:700 14.3px/14.3px 'Liberation Sans', sans-serif;color:#ffffff;left:73.80px;">Deferred</div>
<div class="b" style="left:280.00px;top:1011.30px;width:63.00px;height:20.50px;background:#15412c;border-radius:5px"></div>
<div class="t" style="top:1016.64px;font:700 10.6px/10.6px 'Liberation Sans', sans-serif;color:#4ade80;left:286.80px;">PENDING</div>
<div class="t" style="top:1038.33px;font:400 13.7px/13.7px 'Liberation Sans', sans-serif;color:#9ca3af;left:35.60px;">Well/Site:</div>
<div class="t" style="top:1038.36px;font:400 13.4px/13.4px 'Liberation Sans', sans-serif;color:#f3f4f6;left:97.80px;-webkit-text-stroke:0.25px #f3f4f6">ARNOLD 1045HD</div>
<div class="t" style="top:1061.34px;font:400 13.6px/13.6px 'Liberation Sans', sans-serif;color:#9ca3af;left:35.60px;">Active deferral</div>
<div class="b" style="left:18.00px;top:1104.90px;width:341.00px;height:91.00px;background:#162029;border:1px solid #253039;border-left:3px solid #22c55e;border-radius:10px;box-sizing:border-box"></div>
<div class="t" style="top:1121.97px;font:700 12.3px/12.3px 'Liberation Sans', sans-serif;color:#4ade80;left:35.60px;">LOW:</div>
<svg class="b" style="left:76px;top:1117.90px" width="16" height="18" viewBox="0 0 16 18"><rect x="1" y="5" width="12" height="9" rx="2" fill="#5b8def"/><rect x="10" y="6" width="4" height="8" rx="1" fill="#1f7ad8"/><rect x="8.3" y="1.5" width="2.2" height="6" fill="#f43f5e"/><rect x="6.5" y="14" width="2" height="3" fill="#d97745"/></svg>
<div class="t" style="top:1121.15px;font:700 14.5px/14.5px 'Liberation Sans', sans-serif;color:#ffffff;left:97.90px;">Possible Oil Ticket Rea...</div>
<div class="b" style="left:280.00px;top:1117.50px;width:63.00px;height:20.50px;background:#15412c;border-radius:5px"></div>
<div class="t" style="top:1122.84px;font:700 10.6px/10.6px 'Liberation Sans', sans-serif;color:#4ade80;left:286.80px;">PENDING</div>
<div class="t" style="top:1144.53px;font:400 13.7px/13.7px 'Liberation Sans', sans-serif;color:#9ca3af;left:35.60px;">Well/Site:</div>
<div class="t" style="top:1144.56px;font:400 13.4px/13.4px 'Liberation Sans', sans-serif;color:#f3f4f6;left:97.80px;-webkit-text-stroke:0.25px #f3f4f6">BEVERLY 31-12-26 1HA</div>
<div class="t" style="top:1167.54px;font:400 13.6px/13.6px 'Liberation Sans', sans-serif;color:#9ca3af;left:35.60px;">Active deferral</div>
<svg class="b" style="left:17.20px;top:1219.80px" width="19.00" height="19.00" viewBox="0 0 24 24" fill="none" stroke="#eab308" stroke-width="2" stroke-linecap="round" stroke-linejoin="round"><path d="m21.73 18-8-14a2 2 0 0 0-3.48 0l-8 14A2 2 0 0 0 4 21h16a2 2 0 0 0 1.73-3"/><path d="M12 9v4"/><path d="M12 17h.01"/></svg>
<div class="t" style="top:1222.20px;font:700 14px/14px 'Liberation Sans', sans-serif;color:#9ca3af;letter-spacing:0.82px;left:42.10px;">RECENT CHANGES</div>
<div class="b" style="left:18.00px;top:1254.20px;width:341.00px;height:58.30px;background:#161d2b;border:1px solid #262f3d;border-radius:10px;box-sizing:border-box"></div>
<svg class="b" style="left:32.30px;top:1275.80px" width="16.30" height="16.30" viewBox="0 0 24 24" fill="none" stroke="#9ca3af" stroke-width="2" stroke-linecap="round" stroke-linejoin="round"><circle cx="12" cy="12" r="10"/><polyline points="12 6 12 12 16 14"/></svg>
<div class="t" style="top:1266.46px;font:700 14.4px/14.4px 'Liberation Sans', sans-serif;color:#f3f4f6;left:57.60px;">MIKLES 32-16-24 1H</div>
<div class="t" style="top:1287.14px;font:400 12.6px/12.6px 'Liberation Sans', sans-serif;color:#9ca3af;left:57.60px;">Flag status changed: Generated &#8594; Complete</div>
<svg class="b" style="left:328.00px;top:1277.00px" width="15.00" height="15.00" viewBox="0 0 24 24" fill="none" stroke="#9ca3af" stroke-width="2" stroke-linecap="round" stroke-linejoin="round"><path d="m9 18 6-6-6-6"/></svg>
<div class="b" style="left:18.00px;top:1328.00px;width:341.00px;height:58.30px;background:#161d2b;border:1px solid #262f3d;border-radius:10px;box-sizing:border-box"></div>
<svg class="b" style="left:32.30px;top:1349.60px" width="16.30" height="16.30" viewBox="0 0 24 24" fill="none" stroke="#9ca3af" stroke-width="2" stroke-linecap="round" stroke-linejoin="round"><circle cx="12" cy="12" r="10"/><polyline points="12 6 12 12 16 14"/></svg>
<div class="t" style="top:1340.26px;font:700 14.4px/14.4px 'Liberation Sans', sans-serif;color:#f3f4f6;left:57.60px;">ROARK TRUST 14-14-24 3H</div>
<div class="t" style="top:1360.94px;font:400 12.6px/12.6px 'Liberation Sans', sans-serif;color:#9ca3af;left:57.60px;">Flag status changed: Generated &#8594; Complete</div>
<svg class="b" style="left:328.00px;top:1350.80px" width="15.00" height="15.00" viewBox="0 0 24 24" fill="none" stroke="#9ca3af" stroke-width="2" stroke-linecap="round" stroke-linejoin="round"><path d="m9 18 6-6-6-6"/></svg>
<div class="b" style="left:2122.00px;top:64.50px;width:384.00px;height:1400.00px;border:1px solid #2c3544;border-radius:12px;box-sizing:border-box"></div>
<div class="b" style="left:2142.00px;top:84.50px;width:344.00px;height:154.00px;background:#1a2130;border:1px solid #2b3443;border-left:3px solid #14b8a6;border-radius:10px;box-sizing:border-box"></div>
<div class="t" style="top:105.80px;font:700 12px/12px 'Liberation Sans', sans-serif;color:#9ca3af;letter-spacing:0.42px;left:2164.40px;">PRODUCTION</div>
<svg class="b" style="left:2441.50px;top:100.00px" width="24.50" height="24.50" viewBox="0 0 24 24" fill="none" stroke="#2dd4bf" stroke-width="2" stroke-linecap="round" stroke-linejoin="round"><path d="M7 16.3c2.2 0 4-1.83 4-4.05 0-1.16-.57-2.26-1.71-3.19S7.29 6.75 7 5.3c-.29 1.45-1.14 2.84-2.29 3.76S3 11.1 3 12.25c0 2.22 1.8 4.05 4 4.05z"/><path d="M12.56 6.6A10.97 10.97 0 0 0 14 3.02c.5 2.5 2 4.9 4 6.5s3 3.5 3 5.5a6.98 6.98 0 0 1-11.91 4.97"/></svg>
<div class="t" style="top:128.50px;font:700 30px/30px 'Liberation Sans', sans-serif;color:#ffffff;left:2164.40px;">30,411</div>
<div class="t" style="top:135.70px;font:400 16px/16px 'Liberation Sans', sans-serif;color:#9ca3af;left:2264.50px;">BOEPD</div>
<svg class="b" style="left:2331.00px;top:139.50px" width="15.00" height="15.00" viewBox="0 0 24 24" fill="none" stroke="#4ade80" stroke-width="2" stroke-linecap="round" stroke-linejoin="round"><polyline points="22 7 13.5 15.5 8.5 10.5 2 17"/><polyline points="16 7 22 7 22 13"/></svg>
<div class="t" style="top:140.05px;font:400 14.5px/14.5px 'Liberation Sans', sans-serif;color:#4ade80;left:2347.50px;">8%</div>
<svg class="b" style="left:2160px;top:150px" width="320" height="700" viewBox="0 0 320 700"><defs><linearGradient id="g1" x1="0" y1="14.199999999999989" x2="0" y2="54.599999999999994" gradientUnits="userSpaceOnUse"><stop offset="0" stop-color="#14b8a6" stop-opacity="0.32"/><stop offset="1" stop-color="#14b8a6" stop-opacity="0.02"/></linearGradient></defs><path d="M5.1,54.6 L5.1,23.3 15.1,29.7 25.1,25.4 34.9,30.2 55.2,46.9 65.3,48.6 75.3,21.4 95.9,38.2 105.4,47.7 115.3,24.8 125.5,51.1 135.5,52.0 145.4,21.9 155.8,27.1 165.6,27.6 175.5,23.3 185.8,37.9 196.2,42.5 206.0,45.1 215.8,14.2 225.7,48.6 235.7,24.8 246.0,25.0 256.2,19.7 266.1,50.3 276.0,52.5 285.9,39.1 296.2,35.2 306.0,19.9 L306.0,54.6 Z" fill="url(#g1)"/><polyline points="5.1,23.3 15.1,29.7 25.1,25.4 34.9,30.2 55.2,46.9 65.3,48.6 75.3,21.4 95.9,38.2 105.4,47.7 115.3,24.8 125.5,51.1 135.5,52.0 145.4,21.9 155.8,27.1 165.6,27.6 175.5,23.3 185.8,37.9 196.2,42.5 206.0,45.1 215.8,14.2 225.7,48.6 235.7,24.8 246.0,25.0 256.2,19.7 266.1,50.3 276.0,52.5 285.9,39.1 296.2,35.2 306.0,19.9" fill="none" stroke="#14b8a6" stroke-width="2" stroke-linejoin="round"/><circle cx="306.0" cy="19.9" r="2.5" fill="#14b8a6"/></svg>
<div class="t" style="top:209.38px;font:400 12.2px/12.2px 'Liberation Sans', sans-serif;color:#9ca3af;left:2164.40px;">30d ago</div>
<div class="t" style="top:209.38px;font:400 12.2px/12.2px 'Liberation Sans', sans-serif;color:#9ca3af;right:58.00px;">Today</div>
<div class="b" style="left:2142.00px;top:254.40px;width:344.00px;height:186.00px;background:#1a2130;border:1px solid #2b3443;border-left:3px solid #f59e0b;border-radius:10px;box-sizing:border-box"></div>
<div class="t" style="top:274.80px;font:700 12px/12px 'Liberation Sans', sans-serif;color:#9ca3af;letter-spacing:0.42px;left:2164.40px;">ACTIVE FLAGS</div>
<svg class="b" style="left:2442.00px;top:269.50px" width="24.00" height="24.00" viewBox="0 0 24 24" fill="none" stroke="#eab308" stroke-width="2" stroke-linecap="round" stroke-linejoin="round"><path d="M22 12h-2.48a2 2 0 0 0-1.93 1.46l-2.35 8.36a.25.25 0 0 1-.48 0L9.24 2.18a.25.25 0 0 0-.48 0l-2.35 8.36A2 2 0 0 1 4.49 12H2"/></svg>
<div class="t" style="top:297.90px;font:700 31px/31px 'Liberation Sans', sans-serif;color:#ffffff;left:2164.70px;">3,692</div>
<div class="t" style="top:305.35px;font:400 16.5px/16.5px 'Liberation Sans', sans-serif;color:#9ca3af;left:2256.90px;">flags</div>
<svg class="b" style="left:2306.00px;top:309.50px" width="15.00" height="15.00" viewBox="0 0 24 24" fill="none" stroke="#f87171" stroke-width="2" stroke-linecap="round" stroke-linejoin="round"><polyline points="22 7 13.5 15.5 8.5 10.5 2 17"/><polyline points="16 7 22 7 22 13"/></svg>
<div class="t" style="top:310.05px;font:400 14.5px/14.5px 'Liberation Sans', sans-serif;color:#f87171;left:2322.40px;">6%</div>
<div class="b" style="left:2164.70px;top:331.20px;width:45.10px;height:22.70px;background:#3a1e26;border-radius:5px"></div>
<div class="t" style="top:336.94px;font:700 12.6px/12.6px 'Liberation Sans', sans-serif;color:#ef4444;left:1687.25px;width:1000px;text-align:center;">C: 45</div>
<div class="b" style="left:2215.30px;top:331.20px;width:52.40px;height:22.70px;background:#392621;border-radius:5px"></div>
<div class="t" style="top:336.94px;font:700 12.6px/12.6px 'Liberation Sans', sans-serif;color:#f97316;left:1741.50px;width:1000px;text-align:center;">H: 294</div>
<div class="b" style="left:2273.50px;top:331.20px;width:54.10px;height:22.70px;background:#3a2e1f;border-radius:5px"></div>
<div class="t" style="top:336.94px;font:700 12.6px/12.6px 'Liberation Sans', sans-serif;color:#f59e0b;left:1800.55px;width:1000px;text-align:center;">M: 988</div>
<div class="b" style="left:2333.20px;top:331.20px;width:50.30px;height:22.70px;background:#1c2b48;border-radius:5px"></div>
<div class="t" style="top:336.94px;font:700 12.6px/12.6px 'Liberation Sans', sans-serif;color:#3b82f6;left:1858.35px;width:1000px;text-align:center;">L: 695</div>
<div class="b" style="left:2388.70px;top:331.20px;width:43.70px;height:22.70px;background:#173631;border-radius:5px"></div>
<div class="t" style="top:336.94px;font:700 12.6px/12.6px 'Liberation Sans', sans-serif;color:#10b981;left:1910.55px;width:1000px;text-align:center;">R: 96</div>
<svg class="b" style="left:2160px;top:150px" width="320" height="700" viewBox="0 0 320 700"><defs><linearGradient id="g2" x1="0" y1="216.39999999999998" x2="0" y2="257.7" gradientUnits="userSpaceOnUse"><stop offset="0" stop-color="#f59e0b" stop-opacity="0.32"/><stop offset="1" stop-color="#f59e0b" stop-opacity="0.02"/></linearGradient></defs><path d="M4.7,257.7 L4.7,238.8 14.6,240.8 25.1,243.7 35.0,237.9 45.1,254.8 54.7,252.5 65.5,226.3 75.1,231.5 85.3,233.8 95.5,228.0 105.1,231.5 115.3,248.1 125.2,244.6 135.3,216.4 145.5,228.0 155.7,228.0 165.9,231.5 175.5,233.0 185.1,251.3 195.9,247.5 206.0,219.9 216.2,232.4 226.4,231.5 236.6,230.0 246.2,230.6 256.1,249.8 266.3,246.0 276.4,218.4 286.6,227.7 296.2,233.0 305.5,225.1 L305.5,257.7 Z" fill="url(#g2)"/><polyline points="4.7,238.8 14.6,240.8 25.1,243.7 35.0,237.9 45.1,254.8 54.7,252.5 65.5,226.3 75.1,231.5 85.3,233.8 95.5,228.0 105.1,231.5 115.3,248.1 125.2,244.6 135.3,216.4 145.5,228.0 155.7,228.0 165.9,231.5 175.5,233.0 185.1,251.3 195.9,247.5 206.0,219.9 216.2,232.4 226.4,231.5 236.6,230.0 246.2,230.6 256.1,249.8 266.3,246.0 276.4,218.4 286.6,227.7 296.2,233.0 305.5,225.1" fill="none" stroke="#f59e0b" stroke-width="2" stroke-linejoin="round"/><circle cx="305.5" cy="225.1" r="2.5" fill="#f59e0b"/></svg>
<div class="t" style="top:410.78px;font:400 12.2px/12.2px 'Liberation Sans', sans-serif;color:#9ca3af;left:2164.40px;">30d ago</div>
<div class="t" style="top:410.78px;font:400 12.2px/12.2px 'Liberation Sans', sans-serif;color:#9ca3af;right:58.00px;">Today</div>
<div class="b" style="left:2142.00px;top:455.50px;width:344.00px;height:184.00px;background:#1a2130;border:1px solid #2b3443;border-left:3px solid #06b6d4;border-radius:10px;box-sizing:border-box"></div>
<div class="t" style="top:476.80px;font:700 12px/12px 'Liberation Sans', sans-serif;color:#9ca3af;letter-spacing:0.42px;left:2164.90px;">OPERATORS ON FIELD</div>
<svg class="b" style="left:2441.40px;top:470.80px" width="24.50" height="24.50" viewBox="0 0 24 24" fill="none" stroke="#22d3ee" stroke-width="2" stroke-linecap="round" stroke-linejoin="round"><path d="M16 21v-2a4 4 0 0 0-4-4H6a4 4 0 0 0-4 4v2"/><circle cx="9" cy="7" r="4"/><path d="M22 21v-2a4 4 0 0 0-3-3.87"/><path d="M16 3.13a4 4 0 0 1 0 7.75"/></svg>
<div class="t" style="top:499.30px;font:700 32px/32px 'Liberation Sans', sans-serif;color:#ffffff;left:2164.90px;">32/32</div>
<div class="t" style="top:506.85px;font:400 16.5px/16.5px 'Liberation Sans', sans-serif;color:#9ca3af;left:2259.40px;">active</div>
<div class="t" style="top:536.10px;font:400 14px/14px 'Liberation Sans', sans-serif;color:#9ca3af;left:2164.90px;">168 sites visited today</div>
<svg class="b" style="left:2164px;top:600px" width="300" height="10"><line x1="1" y1="5" x2="292" y2="5" stroke="#0e7490" stroke-width="1.5" stroke-dasharray="6 4"/></svg>
<div class="b" style="left:2456.80px;top:565.00px;width:8.60px;height:40.70px;background:#06b6d4;border-radius:1px"></div>
<div class="t" style="top:609.08px;font:400 12.2px/12.2px 'Liberation Sans', sans-serif;color:#9ca3af;left:2164.40px;">30d ago</div>
<div class="t" style="top:609.08px;font:400 12.2px/12.2px 'Liberation Sans', sans-serif;color:#9ca3af;right:58.60px;">Today (live)</div>
<div class="b" style="left:2142.00px;top:654.50px;width:344.00px;height:180.40px;background:#1a2130;border:1px solid #2b3443;border-left:3px solid #ef4444;border-radius:10px;box-sizing:border-box"></div>
<div class="t" style="top:674.30px;font:700 12px/12px 'Liberation Sans', sans-serif;color:#9ca3af;letter-spacing:0.42px;left:2164.90px;">DEFERRED VOLUME</div>
<svg class="b" style="left:2441.40px;top:666.00px" width="24.50" height="24.50" viewBox="0 0 24 24" fill="none" stroke="#f87171" stroke-width="2" stroke-linecap="round" stroke-linejoin="round"><polyline points="22 17 13.5 8.5 8.5 13.5 2 7"/><polyline points="16 17 22 17 22 11"/></svg>
<div class="t" style="top:697.53px;font:700 29.7px/29.7px 'Liberation Sans', sans-serif;color:#ffffff;left:2164.90px;">1229</div>
<div class="t" style="top:704.35px;font:400 16.5px/16.5px 'Liberation Sans', sans-serif;color:#9ca3af;left:2242.30px;">BOEPD</div>
<div class="t" style="top:732.10px;font:400 14px/14px 'Liberation Sans', sans-serif;color:#9ca3af;left:2164.90px;">150 wells with downtime</div>
<svg class="b" style="left:2322.00px;top:731.50px" width="15.00" height="15.00" viewBox="0 0 24 24" fill="none" stroke="#f87171" stroke-width="2" stroke-linecap="round" stroke-linejoin="round"><path d="m5 12 7-7 7 7"/><path d="M12 19V5"/></svg>
<div class="t" style="top:732.05px;font:400 14.5px/14.5px 'Liberation Sans', sans-serif;color:#f87171;left:2336.00px;">12%</div>
<svg class="b" style="left:2160px;top:150px" width="320" height="700" viewBox="0 0 320 700"><defs><linearGradient id="g3" x1="0" y1="611.6" x2="0" y2="651" gradientUnits="userSpaceOnUse"><stop offset="0" stop-color="#ef4444" stop-opacity="0.32"/><stop offset="1" stop-color="#ef4444" stop-opacity="0.02"/></linearGradient></defs><path d="M5.0,651.0 L5.0,636.0 15.1,628.7 25.3,630.3 35.5,631.1 45.7,636.0 55.0,646.6 65.2,646.2 75.0,623.8 85.2,615.7 95.3,626.3 105.1,611.6 115.3,616.5 125.5,627.1 135.6,622.6 145.8,626.7 155.6,637.2 165.8,634.8 175.9,636.4 186.1,638.0 196.3,647.4 205.6,647.4 215.8,638.5 226.0,646.6 236.2,632.0 246.4,628.7 256.1,623.0 266.3,642.5 276.5,641.3 286.3,626.3 296.0,649.5 305.4,640.1 L305.4,651.0 Z" fill="url(#g3)"/><polyline points="5.0,636.0 15.1,628.7 25.3,630.3 35.5,631.1 45.7,636.0 55.0,646.6 65.2,646.2 75.0,623.8 85.2,615.7 95.3,626.3 105.1,611.6 115.3,616.5 125.5,627.1 135.6,622.6 145.8,626.7 155.6,637.2 165.8,634.8 175.9,636.4 186.1,638.0 196.3,647.4 205.6,647.4 215.8,638.5 226.0,646.6 236.2,632.0 246.4,628.7 256.1,623.0 266.3,642.5 276.5,641.3 286.3,626.3 296.0,649.5 305.4,640.1" fill="none" stroke="#ef4444" stroke-width="2" stroke-linejoin="round"/><circle cx="305.4" cy="640.1" r="2.5" fill="#ef4444"/></svg>
<div class="t" style="top:804.78px;font:400 12.2px/12.2px 'Liberation Sans', sans-serif;color:#9ca3af;left:2164.40px;">30d ago</div>
<div class="t" style="top:804.78px;font:400 12.2px/12.2px 'Liberation Sans', sans-serif;color:#9ca3af;right:58.60px;">Today</div>
<div class="b" style="left:2142.00px;top:850.30px;width:344.00px;height:139.30px;background:#1a2130;border:1px solid #2b3443;border-left:3px solid #ef4444;border-radius:10px;box-sizing:border-box"></div>
<div class="t" style="top:871.30px;font:700 12px/12px 'Liberation Sans', sans-serif;color:#9ca3af;letter-spacing:0.42px;left:2164.90px;">OPEN ESCALATIONS</div>
<svg class="b" style="left:2441.40px;top:864.50px" width="24.50" height="24.50" viewBox="0 0 24 24" fill="none" stroke="#f87171" stroke-width="2" stroke-linecap="round" stroke-linejoin="round"><path d="m21.73 18-8-14a2 2 0 0 0-3.48 0l-8 14A2 2 0 0 0 4 21h16a2 2 0 0 0 1.73-3"/><path d="M12 9v4"/><path d="M12 17h.01"/></svg>
<div class="t" style="top:894.40px;font:700 31px/31px 'Liberation Sans', sans-serif;color:#ffffff;left:2164.90px;">52</div>
<div class="t" style="top:901.85px;font:400 16.5px/16.5px 'Liberation Sans', sans-serif;color:#9ca3af;left:2211.00px;">sites</div>
<svg class="b" style="left:2258.00px;top:906.00px" width="15.00" height="15.00" viewBox="0 0 24 24" fill="none" stroke="#f87171" stroke-width="2" stroke-linecap="round" stroke-linejoin="round"><polyline points="22 7 13.5 15.5 8.5 10.5 2 17"/><polyline points="16 7 22 7 22 13"/></svg>
<div class="t" style="top:906.55px;font:400 14.5px/14.5px 'Liberation Sans', sans-serif;color:#f87171;left:2274.90px;">51</div>
<div class="b" style="left:2165.00px;top:927.70px;width:33.70px;height:22.30px;background:#3a1e26;border-radius:5px"></div>
<div class="t" style="top:933.24px;font:700 12.6px/12.6px 'Liberation Sans', sans-serif;color:#ef4444;left:1681.85px;width:1000px;text-align:center;">C:2</div>
<div class="b" style="left:2206.90px;top:927.70px;width:42.70px;height:22.30px;background:#392621;border-radius:5px"></div>
<div class="t" style="top:933.24px;font:700 12.6px/12.6px 'Liberation Sans', sans-serif;color:#f97316;left:1728.25px;width:1000px;text-align:center;">H:30</div>
<div class="b" style="left:2257.40px;top:927.70px;width:41.10px;height:22.30px;background:#3a3320;border-radius:5px"></div>
<div class="t" style="top:933.24px;font:700 12.6px/12.6px 'Liberation Sans', sans-serif;color:#eab308;left:1777.95px;width:1000px;text-align:center;">M:15</div>
<div class="b" style="left:2306.20px;top:927.70px;width:30.10px;height:22.30px;background:#1c2b48;border-radius:5px"></div>
<div class="t" style="top:933.24px;font:700 12.6px/12.6px 'Liberation Sans', sans-serif;color:#60a5fa;left:1821.25px;width:1000px;text-align:center;">L:1</div>
<div class="t" style="top:958.60px;font:400 14px/14px 'Liberation Sans', sans-serif;color:#9ca3af;left:2164.90px;">7 flag escalations</div>
<div class="b" style="left:2142.20px;top:1010.00px;width:344.00px;height:1.00px;background:#2b3443"></div>
<svg class="b" style="left:2142.00px;top:1027.50px" width="14.50" height="14.50" viewBox="0 0 24 24" fill="none" stroke="#22d3ee" stroke-width="2" stroke-linecap="round" stroke-linejoin="round"><path d="M20 10c0 4.993-5.539 10.193-7.399 11.799a1 1 0 0 1-1.202 0C9.539 20.193 4 14.993 4 10a8 8 0 0 1 16 0"/><circle cx="12" cy="10" r="3"/></svg>
<div class="t" style="top:1028.80px;font:700 12px/12px 'Liberation Sans', sans-serif;color:#9ca3af;letter-spacing:0.35px;left:2164.00px;">CREW TRACKER</div>
<div class="t" style="top:1029.60px;font:700 12px/12px 'Liberation Mono', monospace;color:#22d3ee;right:38.00px;">10:03 AM</div>
<div class="t" style="top:1059.94px;font:700 10.6px/10.6px 'Liberation Sans', sans-serif;color:#9ca3af;letter-spacing:0.1px;left:2152.00px;">OPERATOR</div>
<div class="t" style="top:1059.94px;font:700 10.6px/10.6px 'Liberation Sans', sans-serif;color:#9ca3af;letter-spacing:0.1px;left:1792.80px;width:1000px;text-align:center;">SITES</div>
<div class="t" style="top:1059.94px;font:700 10.6px/10.6px 'Liberation Sans', sans-serif;color:#9ca3af;left:1857.70px;width:1000px;text-align:center;">%</div>
<div class="t" style="top:1059.94px;font:700 10.6px/10.6px 'Liberation Sans', sans-serif;color:#9ca3af;letter-spacing:0.1px;left:1934.50px;width:1000px;text-align:center;">ACTIVITY</div>
<div class="b" style="left:2142.20px;top:1079.50px;width:344.00px;height:1.00px;background:#2b3443"></div>
<svg class="b" style="left:2153px;top:1090.40px" width="14" height="13" viewBox="0 0 14 13"><path d="M7 0.8 L13.3 12 L0.7 12 Z" fill="#f59e0b"/><rect x="6.3" y="4.2" width="1.4" height="4.3" fill="#fff"/><rect x="6.3" y="9.4" width="1.4" height="1.4" fill="#fff"/></svg>
<div class="t" style="top:1089.28px;font:700 14.2px/14.2px 'Liberation Sans', sans-serif;color:#f3f4f6;left:2175.80px;">Colt A.</div>
<div class="t" style="top:1089.28px;font:400 14.2px/14.2px 'Liberation Sans', sans-serif;color:#e5e7eb;left:1777.70px;width:1000px;text-align:center;">7/25</div>
<div class="t" style="top:1089.28px;font:700 14.2px/14.2px 'Liberation Sans', sans-serif;color:#eab308;left:1842.40px;width:1000px;text-align:center;">28%</div>
<svg class="b" style="left:2400.78px;top:1089.90px" width="13.00" height="13.00" viewBox="0 0 24 24" fill="none" stroke="#34d399" stroke-width="2" stroke-linecap="round" stroke-linejoin="round"><line x1="10" x2="14" y1="2" y2="2"/><line x1="12" x2="15" y1="14" y2="11"/><circle cx="12" cy="14" r="8"/></svg>
<div class="t" style="top:1089.30px;font:400 14px/14px 'Liberation Sans', sans-serif;color:#34d399;left:2417.78px;">4m</div>
<div class="b" style="left:2142.20px;top:1114.30px;width:329.00px;height:1.00px;background:#263040"></div>
<svg class="b" style="left:2153px;top:1125.50px" width="14" height="13" viewBox="0 0 14 13"><path d="M7 0.8 L13.3 12 L0.7 12 Z" fill="#f59e0b"/><rect x="6.3" y="4.2" width="1.4" height="4.3" fill="#fff"/><rect x="6.3" y="9.4" width="1.4" height="1.4" fill="#fff"/></svg>
<div class="t" style="top:1124.38px;font:700 14.2px/14.2px 'Liberation Sans', sans-serif;color:#f3f4f6;left:2175.80px;">Hunter B.</div>
<div class="t" style="top:1124.38px;font:400 14.2px/14.2px 'Liberation Sans', sans-serif;color:#e5e7eb;left:1777.70px;width:1000px;text-align:center;">7/23</div>
<div class="t" style="top:1124.38px;font:700 14.2px/14.2px 'Liberation Sans', sans-serif;color:#eab308;left:1842.40px;width:1000px;text-align:center;">28%</div>
<svg class="b" style="left:2400.78px;top:1125.00px" width="13.00" height="13.00" viewBox="0 0 24 24" fill="none" stroke="#34d399" stroke-width="2" stroke-linecap="round" stroke-linejoin="round"><line x1="10" x2="14" y1="2" y2="2"/><line x1="12" x2="15" y1="14" y2="11"/><circle cx="12" cy="14" r="8"/></svg>
<div class="t" style="top:1124.40px;font:400 14px/14px 'Liberation Sans', sans-serif;color:#34d399;left:2417.78px;">3m</div>
<div class="b" style="left:2142.20px;top:1149.40px;width:329.00px;height:1.00px;background:#263040"></div>
<svg class="b" style="left:2153px;top:1160.60px" width="14" height="13" viewBox="0 0 14 13"><path d="M7 0.8 L13.3 12 L0.7 12 Z" fill="#f59e0b"/><rect x="6.3" y="4.2" width="1.4" height="4.3" fill="#fff"/><rect x="6.3" y="9.4" width="1.4" height="1.4" fill="#fff"/></svg>
<div class="t" style="top:1159.48px;font:700 14.2px/14.2px 'Liberation Sans', sans-serif;color:#f3f4f6;left:2175.80px;">Jace M.</div>
<div class="t" style="top:1159.48px;font:400 14.2px/14.2px 'Liberation Sans', sans-serif;color:#e5e7eb;left:1777.70px;width:1000px;text-align:center;">6/24</div>
<div class="t" style="top:1159.48px;font:700 14.2px/14.2px 'Liberation Sans', sans-serif;color:#eab308;left:1842.40px;width:1000px;text-align:center;">28%</div>
<svg class="b" style="left:2396.89px;top:1160.10px" width="13.00" height="13.00" viewBox="0 0 24 24" fill="none" stroke="#34d399" stroke-width="2" stroke-linecap="round" stroke-linejoin="round"><line x1="10" x2="14" y1="2" y2="2"/><line x1="12" x2="15" y1="14" y2="11"/><circle cx="12" cy="14" r="8"/></svg>
<div class="t" style="top:1159.50px;font:400 14px/14px 'Liberation Sans', sans-serif;color:#34d399;left:2413.89px;">30m</div>
<div class="b" style="left:2142.20px;top:1184.50px;width:329.00px;height:1.00px;background:#263040"></div>
<svg class="b" style="left:2153px;top:1195.70px" width="14" height="13" viewBox="0 0 14 13"><path d="M7 0.8 L13.3 12 L0.7 12 Z" fill="#f59e0b"/><rect x="6.3" y="4.2" width="1.4" height="4.3" fill="#fff"/><rect x="6.3" y="9.4" width="1.4" height="1.4" fill="#fff"/></svg>
<div class="t" style="top:1194.58px;font:700 14.2px/14.2px 'Liberation Sans', sans-serif;color:#f3f4f6;left:2175.80px;">Jed M.</div>
<div class="t" style="top:1194.58px;font:400 14.2px/14.2px 'Liberation Sans', sans-serif;color:#e5e7eb;left:1777.70px;width:1000px;text-align:center;">5/22</div>
<div class="t" style="top:1194.58px;font:700 14.2px/14.2px 'Liberation Sans', sans-serif;color:#eab308;left:1842.40px;width:1000px;text-align:center;">28%</div>
<svg class="b" style="left:2397.41px;top:1195.20px" width="13.00" height="13.00" viewBox="0 0 24 24" fill="none" stroke="#34d399" stroke-width="2" stroke-linecap="round" stroke-linejoin="round"><line x1="10" x2="14" y1="2" y2="2"/><line x1="12" x2="15" y1="14" y2="11"/><circle cx="12" cy="14" r="8"/></svg>
<div class="t" style="top:1194.60px;font:400 14px/14px 'Liberation Sans', sans-serif;color:#34d399;left:2414.41px;">11m</div>
<div class="b" style="left:2142.20px;top:1219.60px;width:329.00px;height:1.00px;background:#263040"></div>
<svg class="b" style="left:2153px;top:1230.80px" width="14" height="13" viewBox="0 0 14 13"><path d="M7 0.8 L13.3 12 L0.7 12 Z" fill="#f59e0b"/><rect x="6.3" y="4.2" width="1.4" height="4.3" fill="#fff"/><rect x="6.3" y="9.4" width="1.4" height="1.4" fill="#fff"/></svg>
<div class="t" style="top:1229.68px;font:700 14.2px/14.2px 'Liberation Sans', sans-serif;color:#f3f4f6;left:2175.80px;">Clayton P.</div>
<div class="t" style="top:1229.68px;font:400 14.2px/14.2px 'Liberation Sans', sans-serif;color:#e5e7eb;left:1777.70px;width:1000px;text-align:center;">4/21</div>
<div class="t" style="top:1229.68px;font:700 14.2px/14.2px 'Liberation Sans', sans-serif;color:#eab308;left:1842.40px;width:1000px;text-align:center;">28%</div>
<svg class="b" style="left:2396.89px;top:1230.30px" width="13.00" height="13.00" viewBox="0 0 24 24" fill="none" stroke="#34d399" stroke-width="2" stroke-linecap="round" stroke-linejoin="round"><line x1="10" x2="14" y1="2" y2="2"/><line x1="12" x2="15" y1="14" y2="11"/><circle cx="12" cy="14" r="8"/></svg>
<div class="t" style="top:1229.70px;font:400 14px/14px 'Liberation Sans', sans-serif;color:#34d399;left:2413.89px;">13m</div>
<div class="b" style="left:2142.20px;top:1254.70px;width:329.00px;height:1.00px;background:#263040"></div>
<svg class="b" style="left:2153px;top:1265.90px" width="14" height="13" viewBox="0 0 14 13"><path d="M7 0.8 L13.3 12 L0.7 12 Z" fill="#f59e0b"/><rect x="6.3" y="4.2" width="1.4" height="4.3" fill="#fff"/><rect x="6.3" y="9.4" width="1.4" height="1.4" fill="#fff"/></svg>
<div class="t" style="top:1264.78px;font:700 14.2px/14.2px 'Liberation Sans', sans-serif;color:#f3f4f6;left:2175.80px;">Ryder C.</div>
<div class="t" style="top:1264.78px;font:400 14.2px/14.2px 'Liberation Sans', sans-serif;color:#e5e7eb;left:1777.70px;width:1000px;text-align:center;">5/18</div>
<div class="t" style="top:1264.78px;font:700 14.2px/14.2px 'Liberation Sans', sans-serif;color:#eab308;left:1842.40px;width:1000px;text-align:center;">28%</div>
<svg class="b" style="left:2396.70px;top:1265.40px" width="13.00" height="13.00" viewBox="0 0 24 24" fill="none" stroke="#60a5fa" stroke-width="2" stroke-linecap="round" stroke-linejoin="round"><polygon points="3 11 22 2 13 21 11 13 3 11"/></svg>
<div class="t" style="top:1264.80px;font:400 14px/14px 'Liberation Sans', sans-serif;color:#60a5fa;left:2413.70px;">&lt;1m</div>
<div class="b" style="left:2142.20px;top:1289.80px;width:329.00px;height:1.00px;background:#263040"></div>
<svg class="b" style="left:2153px;top:1301.00px" width="14" height="13" viewBox="0 0 14 13"><path d="M7 0.8 L13.3 12 L0.7 12 Z" fill="#f59e0b"/><rect x="6.3" y="4.2" width="1.4" height="4.3" fill="#fff"/><rect x="6.3" y="9.4" width="1.4" height="1.4" fill="#fff"/></svg>
<div class="t" style="top:1299.88px;font:700 14.2px/14.2px 'Liberation Sans', sans-serif;color:#f3f4f6;left:2175.80px;">Hank C.</div>
<div class="t" style="top:1299.88px;font:400 14.2px/14.2px 'Liberation Sans', sans-serif;color:#e5e7eb;left:1777.70px;width:1000px;text-align:center;">4/22</div>
<div class="t" style="top:1299.88px;font:700 14.2px/14.2px 'Liberation Sans', sans-serif;color:#eab308;left:1842.40px;width:1000px;text-align:center;">28%</div>
<svg class="b" style="left:2396.89px;top:1300.50px" width="13.00" height="13.00" viewBox="0 0 24 24" fill="none" stroke="#34d399" stroke-width="2" stroke-linecap="round" stroke-linejoin="round"><line x1="10" x2="14" y1="2" y2="2"/><line x1="12" x2="15" y1="14" y2="11"/><circle cx="12" cy="14" r="8"/></svg>
<div class="t" style="top:1299.90px;font:400 14px/14px 'Liberation Sans', sans-serif;color:#34d399;left:2413.89px;">30m</div>
<svg class="b" style="left:2472px;top:1083px" width="14" height="236"><path d="M2 10 L7 4 L12 10 Z" fill="#4b5563"/><path d="M2 226 L7 232 L12 226 Z" fill="#4b5563"/></svg>
<div class="b" style="left:2474.00px;top:1097.80px;width:9.00px;height:44.80px;background:#4b5563;border-radius:5px"></div>
<div class="t" style="top:770.98px;font:700 14.2px/14.2px 'Liberation Sans', sans-serif;color:#9ca3af;letter-spacing:0.9px;left:382.80px;">PRIORITY MATRIX</div>
<div class="t" style="top:771.50px;font:400 15px/15px 'Liberation Sans', sans-serif;color:#9ca3af;right:421.00px;">2661 wells</div>
<div class="b" style="left:383.00px;top:797.00px;width:1715.00px;height:700.00px;border:1px solid #4b1f2a;border-radius:10px;box-sizing:border-box"></div>
<div class="b" style="left:384.00px;top:798.00px;width:1713.00px;height:48.00px;background:#281c2a;border-radius:9px 9px 0 0"></div>
<svg class="b" style="left:403.00px;top:813.00px" width="19.00" height="19.00" viewBox="0 0 24 24" fill="none" stroke="#f87171" stroke-width="2" stroke-linecap="round" stroke-linejoin="round"><path d="m6 9 6 6 6-6"/></svg>
<div class="b" style="left:436.00px;top:817.40px;width:10.00px;height:10.00px;background:#ef4444;border-radius:50%"></div>
<div class="t" style="top:814.25px;font:700 17.5px/17.5px 'Liberation Sans', sans-serif;color:#ffffff;left:460.30px;">CRITICAL</div>
<div class="t" style="top:814.98px;font:400 15.2px/15.2px 'Liberation Sans', sans-serif;color:#9ca3af;left:553.00px;">(17)</div>
<div class="t" style="top:815.23px;font:400 15.7px/15.7px 'Liberation Sans', sans-serif;color:#f87171;left:601.30px;">45 flags aging &gt;24h</div>
<div class="t" style="top:815.29px;font:400 15.1px/15.1px 'Liberation Sans', sans-serif;color:#9ca3af;right:447.00px;">Select All</div>
<div class="b" style="left:393.00px;top:856.90px;width:1695.00px;height:60.80px;background:#1a2130;border:1px solid #2d3645;border-radius:10px;box-sizing:border-box"></div>
<div class="b" style="left:413.40px;top:877.20px;width:18.30px;height:18.30px;background:#ffffff;border-radius:3px"></div>
<svg class="b" style="left:448.50px;top:878.40px" width="16.00" height="16.00" viewBox="0 0 24 24" fill="none" stroke="#9ca3af" stroke-width="2" stroke-linecap="round" stroke-linejoin="round"><path d="m9 18 6-6-6-6"/></svg>
<div class="t" style="top:880.30px;font:400 13px/13px 'Liberation Sans', sans-serif;color:#9ca3af;left:480.70px;-webkit-text-stroke:0.2px #9ca3af">#1</div>
<div class="b" style="left:553.00px;top:874.00px;width:70.00px;height:25.60px;background:#3d1f28;border:1px solid #6b2631;border-radius:4px;box-sizing:border-box"></div>
<div class="t" style="top:879.20px;font:400 16px/16px 'Liberation Sans', sans-serif;color:#f87171;left:88.00px;width:1000px;text-align:center;-webkit-text-stroke:0.45px #f87171">Critical</div>
<div class="t" style="top:877.36px;font:700 19.4px/19.4px 'Liberation Sans', sans-serif;color:#ffffff;left:637.90px;">PLETCHER 9342H</div>
<div class="t" style="top:880.91px;font:400 14.9px/14.9px 'Liberation Sans', sans-serif;color:#9ca3af;left:812.92px;">#19225</div>
<div class="b" style="left:1520.90px;top:875.10px;width:80.90px;height:23.70px;background:#173d40;border-radius:12px"></div>
<div class="t" style="top:879.50px;font:400 15px/15px 'Liberation Sans', sans-serif;color:#2dd4bf;left:1061.35px;width:1000px;text-align:center;-webkit-text-stroke:0.2px #2dd4bf">19.9 BOE</div>
<div class="b" style="left:1615.70px;top:875.10px;width:70.00px;height:23.70px;background:#163a2c;border-radius:12px"></div>
<div class="t" style="top:879.50px;font:400 15px/15px 'Liberation Sans', sans-serif;color:#4ade80;left:1150.70px;width:1000px;text-align:center;-webkit-text-stroke:0.2px #4ade80">$659/d</div>
<div class="b" style="left:1699.90px;top:875.10px;width:85.00px;height:23.70px;background:#163a2c;border-radius:12px"></div>
<div class="t" style="top:879.50px;font:400 15px/15px 'Liberation Sans', sans-serif;color:#4ade80;left:1242.40px;width:1000px;text-align:center;-webkit-text-stroke:0.2px #4ade80">Complete</div>
<div class="b" style="left:1798.80px;top:875.10px;width:47.70px;height:23.70px;background:#47202a;border-radius:12px"></div>
<svg class="b" style="left:1809.30px;top:878.80px" width="14.50" height="14.50" viewBox="0 0 24 24" fill="none" stroke="#f87171" stroke-width="2" stroke-linecap="round" stroke-linejoin="round"><path d="M4 15s1-1 4-1 5 2 8 2 4-1 4-1V3s-1 1-4 1-5-2-8-2-4 1-4 1z"/><line x1="4" x2="4" y1="22" y2="15"/></svg>
<div class="t" style="top:879.45px;font:400 15.5px/15.5px 'Liberation Sans', sans-serif;color:#f87171;right:687.00px;-webkit-text-stroke:0.3px #f87171">4</div>
<div class="t" style="top:879.50px;font:400 15px/15px 'Liberation Sans', sans-serif;color:#d1d5db;right:547.60px;">Travis C.</div>
<svg class="b" style="left:2006.00px;top:877.40px" width="18.00" height="18.00" viewBox="0 0 24 24" fill="none" stroke="#2dd4bf" stroke-width="2" stroke-linecap="round" stroke-linejoin="round"><path d="M21 15a2 2 0 0 1-2 2H7l-4 4V5a2 2 0 0 1 2-2h14a2 2 0 0 1 2 2z"/></svg>
<svg class="b" style="left:2042.00px;top:877.40px" width="18.00" height="18.00" viewBox="0 0 24 24" fill="none" stroke="#4ade80" stroke-width="2" stroke-linecap="round" stroke-linejoin="round"><path d="M20 6 9 17l-5-5"/></svg>
<div class="b" style="left:393.00px;top:928.41px;width:1695.00px;height:60.80px;background:#1a2130;border:1px solid #2d3645;border-radius:10px;box-sizing:border-box"></div>
<div class="b" style="left:413.40px;top:948.71px;width:18.30px;height:18.30px;background:#ffffff;border-radius:3px"></div>
<svg class="b" style="left:448.50px;top:949.91px" width="16.00" height="16.00" viewBox="0 0 24 24" fill="none" stroke="#9ca3af" stroke-width="2" stroke-linecap="round" stroke-linejoin="round"><path d="m9 18 6-6-6-6"/></svg>
<div class="t" style="top:951.81px;font:400 13px/13px 'Liberation Sans', sans-serif;color:#9ca3af;left:480.70px;-webkit-text-stroke:0.2px #9ca3af">#1</div>
<div class="b" style="left:553.00px;top:945.51px;width:70.00px;height:25.60px;background:#3d1f28;border:1px solid #6b2631;border-radius:4px;box-sizing:border-box"></div>
<div class="t" style="top:950.71px;font:400 16px/16px 'Liberation Sans', sans-serif;color:#f87171;left:88.00px;width:1000px;text-align:center;-webkit-text-stroke:0.45px #f87171">Critical</div>
<div class="t" style="top:948.87px;font:700 19.4px/19.4px 'Liberation Sans', sans-serif;color:#ffffff;left:637.90px;">BLACK, ONA 49 SL 05H</div>
<div class="t" style="top:952.42px;font:400 14.9px/14.9px 'Liberation Sans', sans-serif;color:#9ca3af;left:864.62px;">#26881</div>
<div class="b" style="left:1597.80px;top:946.61px;width:79.20px;height:23.70px;background:#342650;border-radius:12px"></div>
<div class="t" style="top:951.01px;font:400 15px/15px 'Liberation Sans', sans-serif;color:#c084fc;left:1137.40px;width:1000px;text-align:center;-webkit-text-stroke:0.2px #c084fc">Deferred</div>
<div class="b" style="left:1691.80px;top:946.61px;width:46.80px;height:23.70px;background:#47202a;border-radius:12px"></div>
<svg class="b" style="left:1702.30px;top:950.31px" width="14.50" height="14.50" viewBox="0 0 24 24" fill="none" stroke="#f87171" stroke-width="2" stroke-linecap="round" stroke-linejoin="round"><path d="M4 15s1-1 4-1 5 2 8 2 4-1 4-1V3s-1 1-4 1-5-2-8-2-4 1-4 1z"/><line x1="4" x2="4" y1="22" y2="15"/></svg>
<div class="t" style="top:950.96px;font:400 15.5px/15.5px 'Liberation Sans', sans-serif;color:#f87171;right:794.90px;-webkit-text-stroke:0.3px #f87171">2</div>
<div class="t" style="top:951.01px;font:400 15px/15px 'Liberation Sans', sans-serif;color:#d1d5db;right:655.80px;">Colt A.</div>
<svg class="b" style="left:1899.00px;top:948.91px" width="18.00" height="18.00" viewBox="0 0 24 24" fill="none" stroke="#f87171" stroke-width="2" stroke-linecap="round" stroke-linejoin="round"><path d="m5 12 7-7 7 7"/><path d="M12 19V5"/></svg>
<svg class="b" style="left:1935.00px;top:948.91px" width="18.00" height="18.00" viewBox="0 0 24 24" fill="none" stroke="#c084fc" stroke-width="2" stroke-linecap="round" stroke-linejoin="round"><rect x="14" y="4" width="4" height="16" rx="1"/><rect x="6" y="4" width="4" height="16" rx="1"/></svg>
<svg class="b" style="left:1971.00px;top:948.91px" width="18.00" height="18.00" viewBox="0 0 24 24" fill="none" stroke="#60a5fa" stroke-width="2" stroke-linecap="round" stroke-linejoin="round"><path d="M3 12a9 9 0 0 1 9-9 9.75 9.75 0 0 1 6.74 2.74L21 8"/><path d="M21 3v5h-5"/><path d="M21 12a9 9 0 0 1-9 9 9.75 9.75 0 0 1-6.74-2.74L3 16"/><path d="M8 16H3v5"/></svg>
<svg class="b" style="left:2006.00px;top:948.91px" width="18.00" height="18.00" viewBox="0 0 24 24" fill="none" stroke="#2dd4bf" stroke-width="2" stroke-linecap="round" stroke-linejoin="round"><path d="M21 15a2 2 0 0 1-2 2H7l-4 4V5a2 2 0 0 1 2-2h14a2 2 0 0 1 2 2z"/></svg>
<svg class="b" style="left:2042.00px;top:948.91px" width="18.00" height="18.00" viewBox="0 0 24 24" fill="none" stroke="#4ade80" stroke-width="2" stroke-linecap="round" stroke-linejoin="round"><path d="M20 6 9 17l-5-5"/></svg>
<div class="b" style="left:393.00px;top:999.92px;width:1695.00px;height:60.80px;background:#1a2130;border:1px solid #2d3645;border-radius:10px;box-sizing:border-box"></div>
<div class="b" style="left:413.40px;top:1020.22px;width:18.30px;height:18.30px;background:#ffffff;border-radius:3px"></div>
<svg class="b" style="left:448.50px;top:1021.42px" width="16.00" height="16.00" viewBox="0 0 24 24" fill="none" stroke="#9ca3af" stroke-width="2" stroke-linecap="round" stroke-linejoin="round"><path d="m9 18 6-6-6-6"/></svg>
<div class="t" style="top:1023.32px;font:400 13px/13px 'Liberation Sans', sans-serif;color:#9ca3af;left:480.70px;-webkit-text-stroke:0.2px #9ca3af">#1</div>
<div class="b" style="left:553.00px;top:1017.02px;width:70.00px;height:25.60px;background:#3d1f28;border:1px solid #6b2631;border-radius:4px;box-sizing:border-box"></div>
<div class="t" style="top:1022.22px;font:400 16px/16px 'Liberation Sans', sans-serif;color:#f87171;left:88.00px;width:1000px;text-align:center;-webkit-text-stroke:0.45px #f87171">Critical</div>
<div class="t" style="top:1020.38px;font:700 19.4px/19.4px 'Liberation Sans', sans-serif;color:#ffffff;left:637.90px;">KNOWLES 25X36-19-26 2HB</div>
<div class="t" style="top:1023.93px;font:400 14.9px/14.9px 'Liberation Sans', sans-serif;color:#9ca3af;left:906.65px;">#27128</div>
<div class="b" style="left:1419.00px;top:1018.12px;width:79.60px;height:23.70px;background:#173d40;border-radius:12px"></div>
<div class="t" style="top:1022.52px;font:400 15px/15px 'Liberation Sans', sans-serif;color:#2dd4bf;left:958.80px;width:1000px;text-align:center;-webkit-text-stroke:0.2px #2dd4bf">18.5 BOE</div>
<div class="b" style="left:1513.00px;top:1018.12px;width:69.50px;height:23.70px;background:#163a2c;border-radius:12px"></div>
<div class="t" style="top:1022.52px;font:400 15px/15px 'Liberation Sans', sans-serif;color:#4ade80;left:1047.75px;width:1000px;text-align:center;-webkit-text-stroke:0.2px #4ade80">$439/d</div>
<div class="b" style="left:1597.80px;top:1018.12px;width:79.20px;height:23.70px;background:#342650;border-radius:12px"></div>
<div class="t" style="top:1022.52px;font:400 15px/15px 'Liberation Sans', sans-serif;color:#c084fc;left:1137.40px;width:1000px;text-align:center;-webkit-text-stroke:0.2px #c084fc">Deferred</div>
<div class="b" style="left:1691.80px;top:1018.12px;width:46.80px;height:23.70px;background:#47202a;border-radius:12px"></div>
<svg class="b" style="left:1702.30px;top:1021.82px" width="14.50" height="14.50" viewBox="0 0 24 24" fill="none" stroke="#f87171" stroke-width="2" stroke-linecap="round" stroke-linejoin="round"><path d="M4 15s1-1 4-1 5 2 8 2 4-1 4-1V3s-1 1-4 1-5-2-8-2-4 1-4 1z"/><line x1="4" x2="4" y1="22" y2="15"/></svg>
<div class="t" style="top:1022.47px;font:400 15.5px/15.5px 'Liberation Sans', sans-serif;color:#f87171;right:794.90px;-webkit-text-stroke:0.3px #f87171">2</div>
<div class="t" style="top:1022.52px;font:400 15px/15px 'Liberation Sans', sans-serif;color:#d1d5db;right:655.80px;">Walker T.</div>
<svg class="b" style="left:1899.00px;top:1020.42px" width="18.00" height="18.00" viewBox="0 0 24 24" fill="none" stroke="#f87171" stroke-width="2" stroke-linecap="round" stroke-linejoin="round"><path d="m5 12 7-7 7 7"/><path d="M12 19V5"/></svg>
<svg class="b" style="left:1935.00px;top:1020.42px" width="18.00" height="18.00" viewBox="0 0 24 24" fill="none" stroke="#c084fc" stroke-width="2" stroke-linecap="round" stroke-linejoin="round"><rect x="14" y="4" width="4" height="16" rx="1"/><rect x="6" y="4" width="4" height="16" rx="1"/></svg>
<svg class="b" style="left:1971.00px;top:1020.42px" width="18.00" height="18.00" viewBox="0 0 24 24" fill="none" stroke="#60a5fa" stroke-width="2" stroke-linecap="round" stroke-linejoin="round"><path d="M3 12a9 9 0 0 1 9-9 9.75 9.75 0 0 1 6.74 2.74L21 8"/><path d="M21 3v5h-5"/><path d="M21 12a9 9 0 0 1-9 9 9.75 9.75 0 0 1-6.74-2.74L3 16"/><path d="M8 16H3v5"/></svg>
<svg class="b" style="left:2006.00px;top:1020.42px" width="18.00" height="18.00" viewBox="0 0 24 24" fill="none" stroke="#2dd4bf" stroke-width="2" stroke-linecap="round" stroke-linejoin="round"><path d="M21 15a2 2 0 0 1-2 2H7l-4 4V5a2 2 0 0 1 2-2h14a2 2 0 0 1 2 2z"/></svg>
<svg class="b" style="left:2042.00px;top:1020.42px" width="18.00" height="18.00" viewBox="0 0 24 24" fill="none" stroke="#4ade80" stroke-width="2" stroke-linecap="round" stroke-linejoin="round"><path d="M20 6 9 17l-5-5"/></svg>
<div class="b" style="left:393.00px;top:1071.43px;width:1695.00px;height:60.80px;background:#1a2130;border:1px solid #2d3645;border-radius:10px;box-sizing:border-box"></div>
<div class="b" style="left:413.40px;top:1091.73px;width:18.30px;height:18.30px;background:#ffffff;border-radius:3px"></div>
<svg class="b" style="left:448.50px;top:1092.93px" width="16.00" height="16.00" viewBox="0 0 24 24" fill="none" stroke="#9ca3af" stroke-width="2" stroke-linecap="round" stroke-linejoin="round"><path d="m9 18 6-6-6-6"/></svg>
<div class="t" style="top:1094.83px;font:400 13px/13px 'Liberation Sans', sans-serif;color:#9ca3af;left:480.70px;-webkit-text-stroke:0.2px #9ca3af">#1</div>
<div class="b" style="left:553.00px;top:1088.53px;width:70.00px;height:25.60px;background:#3d1f28;border:1px solid #6b2631;border-radius:4px;box-sizing:border-box"></div>
<div class="t" style="top:1093.73px;font:400 16px/16px 'Liberation Sans', sans-serif;color:#f87171;left:88.00px;width:1000px;text-align:center;-webkit-text-stroke:0.45px #f87171">Critical</div>
<div class="t" style="top:1091.89px;font:700 19.4px/19.4px 'Liberation Sans', sans-serif;color:#ffffff;left:637.90px;">BLEVINS 16X9-11-26 1HC</div>
<div class="t" style="top:1095.44px;font:400 14.9px/14.9px 'Liberation Sans', sans-serif;color:#9ca3af;left:879.76px;">#27296</div>
<div class="b" style="left:1520.30px;top:1089.63px;width:79.50px;height:23.70px;background:#173d40;border-radius:12px"></div>
<div class="t" style="top:1094.03px;font:400 15px/15px 'Liberation Sans', sans-serif;color:#2dd4bf;left:1060.05px;width:1000px;text-align:center;-webkit-text-stroke:0.2px #2dd4bf">87.3 BOE</div>
<div class="b" style="left:1615.10px;top:1089.63px;width:70.60px;height:23.70px;background:#163a2c;border-radius:12px"></div>
<div class="t" style="top:1094.03px;font:400 15px/15px 'Liberation Sans', sans-serif;color:#4ade80;left:1150.40px;width:1000px;text-align:center;-webkit-text-stroke:0.2px #4ade80">$944/d</div>
<div class="b" style="left:1699.90px;top:1089.63px;width:85.00px;height:23.70px;background:#163a2c;border-radius:12px"></div>
<div class="t" style="top:1094.03px;font:400 15px/15px 'Liberation Sans', sans-serif;color:#4ade80;left:1242.40px;width:1000px;text-align:center;-webkit-text-stroke:0.2px #4ade80">Complete</div>
<div class="b" style="left:1798.80px;top:1089.63px;width:47.70px;height:23.70px;background:#47202a;border-radius:12px"></div>
<svg class="b" style="left:1809.30px;top:1093.33px" width="14.50" height="14.50" viewBox="0 0 24 24" fill="none" stroke="#f87171" stroke-width="2" stroke-linecap="round" stroke-linejoin="round"><path d="M4 15s1-1 4-1 5 2 8 2 4-1 4-1V3s-1 1-4 1-5-2-8-2-4 1-4 1z"/><line x1="4" x2="4" y1="22" y2="15"/></svg>
<div class="t" style="top:1093.98px;font:400 15.5px/15.5px 'Liberation Sans', sans-serif;color:#f87171;right:687.00px;-webkit-text-stroke:0.3px #f87171">4</div>
<div class="t" style="top:1094.03px;font:400 15px/15px 'Liberation Sans', sans-serif;color:#d1d5db;right:547.60px;">Sawyer W.</div>
<svg class="b" style="left:2006.00px;top:1091.93px" width="18.00" height="18.00" viewBox="0 0 24 24" fill="none" stroke="#2dd4bf" stroke-width="2" stroke-linecap="round" stroke-linejoin="round"><path d="M21 15a2 2 0 0 1-2 2H7l-4 4V5a2 2 0 0 1 2-2h14a2 2 0 0 1 2 2z"/></svg>
<svg class="b" style="left:2042.00px;top:1091.93px" width="18.00" height="18.00" viewBox="0 0 24 24" fill="none" stroke="#4ade80" stroke-width="2" stroke-linecap="round" stroke-linejoin="round"><path d="M20 6 9 17l-5-5"/></svg>
<div class="b" style="left:393.00px;top:1142.94px;width:1695.00px;height:60.80px;background:#1a2130;border:1px solid #2d3645;border-radius:10px;box-sizing:border-box"></div>
<div class="b" style="left:413.40px;top:1163.24px;width:18.30px;height:18.30px;background:#ffffff;border-radius:3px"></div>
<svg class="b" style="left:448.50px;top:1164.44px" width="16.00" height="16.00" viewBox="0 0 24 24" fill="none" stroke="#9ca3af" stroke-width="2" stroke-linecap="round" stroke-linejoin="round"><path d="m9 18 6-6-6-6"/></svg>
<div class="t" style="top:1166.34px;font:400 13px/13px 'Liberation Sans', sans-serif;color:#9ca3af;left:480.70px;-webkit-text-stroke:0.2px #9ca3af">#2</div>
<div class="b" style="left:553.00px;top:1160.04px;width:70.00px;height:25.60px;background:#3d1f28;border:1px solid #6b2631;border-radius:4px;box-sizing:border-box"></div>
<div class="t" style="top:1165.24px;font:400 16px/16px 'Liberation Sans', sans-serif;color:#f87171;left:88.00px;width:1000px;text-align:center;-webkit-text-stroke:0.45px #f87171">Critical</div>
<div class="t" style="top:1163.40px;font:700 19.4px/19.4px 'Liberation Sans', sans-serif;color:#ffffff;left:637.90px;">WILLIAM 1301H</div>
<div class="t" style="top:1166.95px;font:400 14.9px/14.9px 'Liberation Sans', sans-serif;color:#9ca3af;left:791.34px;">#19098</div>
<div class="b" style="left:1528.00px;top:1161.14px;width:72.70px;height:23.70px;background:#173d40;border-radius:12px"></div>
<div class="t" style="top:1165.54px;font:400 15px/15px 'Liberation Sans', sans-serif;color:#2dd4bf;left:1064.35px;width:1000px;text-align:center;-webkit-text-stroke:0.2px #2dd4bf">4.7 BOE</div>
<div class="b" style="left:1615.70px;top:1161.14px;width:70.00px;height:23.70px;background:#163a2c;border-radius:12px"></div>
<div class="t" style="top:1165.54px;font:400 15px/15px 'Liberation Sans', sans-serif;color:#4ade80;left:1150.70px;width:1000px;text-align:center;-webkit-text-stroke:0.2px #4ade80">$204/d</div>
<div class="b" style="left:1699.90px;top:1161.14px;width:85.00px;height:23.70px;background:#163a2c;border-radius:12px"></div>
<div class="t" style="top:1165.54px;font:400 15px/15px 'Liberation Sans', sans-serif;color:#4ade80;left:1242.40px;width:1000px;text-align:center;-webkit-text-stroke:0.2px #4ade80">Complete</div>
<div class="b" style="left:1798.80px;top:1161.14px;width:47.70px;height:23.70px;background:#47202a;border-radius:12px"></div>
<svg class="b" style="left:1809.30px;top:1164.84px" width="14.50" height="14.50" viewBox="0 0 24 24" fill="none" stroke="#f87171" stroke-width="2" stroke-linecap="round" stroke-linejoin="round"><path d="M4 15s1-1 4-1 5 2 8 2 4-1 4-1V3s-1 1-4 1-5-2-8-2-4 1-4 1z"/><line x1="4" x2="4" y1="22" y2="15"/></svg>
<div class="t" style="top:1165.49px;font:400 15.5px/15.5px 'Liberation Sans', sans-serif;color:#f87171;right:687.00px;-webkit-text-stroke:0.3px #f87171">3</div>
<div class="t" style="top:1165.54px;font:400 15px/15px 'Liberation Sans', sans-serif;color:#d1d5db;right:547.60px;">Landon S.</div>
<svg class="b" style="left:2006.00px;top:1163.44px" width="18.00" height="18.00" viewBox="0 0 24 24" fill="none" stroke="#2dd4bf" stroke-width="2" stroke-linecap="round" stroke-linejoin="round"><path d="M21 15a2 2 0 0 1-2 2H7l-4 4V5a2 2 0 0 1 2-2h14a2 2 0 0 1 2 2z"/></svg>
<svg class="b" style="left:2042.00px;top:1163.44px" width="18.00" height="18.00" viewBox="0 0 24 24" fill="none" stroke="#4ade80" stroke-width="2" stroke-linecap="round" stroke-linejoin="round"><path d="M20 6 9 17l-5-5"/></svg>
<div class="b" style="left:393.00px;top:1214.45px;width:1695.00px;height:60.80px;background:#1a2130;border:1px solid #2d3645;border-radius:10px;box-sizing:border-box"></div>
<div class="b" style="left:413.40px;top:1234.75px;width:18.30px;height:18.30px;background:#ffffff;border-radius:3px"></div>
<svg class="b" style="left:448.50px;top:1235.95px" width="16.00" height="16.00" viewBox="0 0 24 24" fill="none" stroke="#9ca3af" stroke-width="2" stroke-linecap="round" stroke-linejoin="round"><path d="m9 18 6-6-6-6"/></svg>
<div class="t" style="top:1237.85px;font:400 13px/13px 'Liberation Sans', sans-serif;color:#9ca3af;left:480.70px;-webkit-text-stroke:0.2px #9ca3af">#2</div>
<div class="b" style="left:553.00px;top:1231.55px;width:70.00px;height:25.60px;background:#3d1f28;border:1px solid #6b2631;border-radius:4px;box-sizing:border-box"></div>
<div class="t" style="top:1236.75px;font:400 16px/16px 'Liberation Sans', sans-serif;color:#f87171;left:88.00px;width:1000px;text-align:center;-webkit-text-stroke:0.45px #f87171">Critical</div>
<div class="t" style="top:1234.91px;font:700 19.4px/19.4px 'Liberation Sans', sans-serif;color:#ffffff;left:637.90px;">WARCHIME 24 MULTI-WELL COMP</div>
<div class="t" style="top:1238.46px;font:400 14.9px/14.9px 'Liberation Sans', sans-serif;color:#9ca3af;left:968.35px;">#1000511</div>
<div class="b" style="left:1703.00px;top:1232.65px;width:84.80px;height:23.70px;background:#163a2c;border-radius:12px"></div>
<div class="t" style="top:1237.05px;font:400 15px/15px 'Liberation Sans', sans-serif;color:#4ade80;left:1245.40px;width:1000px;text-align:center;-webkit-text-stroke:0.2px #4ade80">Complete</div>
<div class="b" style="left:1802.30px;top:1232.65px;width:44.20px;height:23.70px;background:#47202a;border-radius:12px"></div>
<svg class="b" style="left:1812.80px;top:1236.35px" width="14.50" height="14.50" viewBox="0 0 24 24" fill="none" stroke="#f87171" stroke-width="2" stroke-linecap="round" stroke-linejoin="round"><path d="M4 15s1-1 4-1 5 2 8 2 4-1 4-1V3s-1 1-4 1-5-2-8-2-4 1-4 1z"/><line x1="4" x2="4" y1="22" y2="15"/></svg>
<div class="t" style="top:1237.00px;font:400 15.5px/15.5px 'Liberation Sans', sans-serif;color:#f87171;right:687.00px;-webkit-text-stroke:0.3px #f87171">1</div>
<div class="t" style="top:1237.05px;font:400 15px/15px 'Liberation Sans', sans-serif;color:#d1d5db;right:547.60px;">No O.</div>
<svg class="b" style="left:2006.00px;top:1234.95px" width="18.00" height="18.00" viewBox="0 0 24 24" fill="none" stroke="#2dd4bf" stroke-width="2" stroke-linecap="round" stroke-linejoin="round"><path d="M21 15a2 2 0 0 1-2 2H7l-4 4V5a2 2 0 0 1 2-2h14a2 2 0 0 1 2 2z"/></svg>
<svg class="b" style="left:2042.00px;top:1234.95px" width="18.00" height="18.00" viewBox="0 0 24 24" fill="none" stroke="#4ade80" stroke-width="2" stroke-linecap="round" stroke-linejoin="round"><path d="M20 6 9 17l-5-5"/></svg>
<div class="b" style="left:393.00px;top:1285.96px;width:1695.00px;height:60.80px;background:#1a2130;border:1px solid #2d3645;border-radius:10px;box-sizing:border-box"></div>
<div class="b" style="left:413.40px;top:1306.26px;width:18.30px;height:18.30px;background:#ffffff;border-radius:3px"></div>
<svg class="b" style="left:448.50px;top:1307.46px" width="16.00" height="16.00" viewBox="0 0 24 24" fill="none" stroke="#9ca3af" stroke-width="2" stroke-linecap="round" stroke-linejoin="round"><path d="m9 18 6-6-6-6"/></svg>
<div class="t" style="top:1309.36px;font:400 13px/13px 'Liberation Sans', sans-serif;color:#9ca3af;left:480.70px;-webkit-text-stroke:0.2px #9ca3af">#3</div>
<div class="b" style="left:553.00px;top:1303.06px;width:70.00px;height:25.60px;background:#3d1f28;border:1px solid #6b2631;border-radius:4px;box-sizing:border-box"></div>
<div class="t" style="top:1308.26px;font:400 16px/16px 'Liberation Sans', sans-serif;color:#f87171;left:88.00px;width:1000px;text-align:center;-webkit-text-stroke:0.45px #f87171">Critical</div>
<div class="t" style="top:1306.42px;font:700 19.4px/19.4px 'Liberation Sans', sans-serif;color:#ffffff;left:637.90px;">MILLER 0631 3H</div>
<div class="t" style="top:1309.97px;font:400 14.9px/14.9px 'Liberation Sans', sans-serif;color:#9ca3af;left:796.76px;">#26435</div>
<div class="b" style="left:1424.80px;top:1304.16px;width:71.80px;height:23.70px;background:#173d40;border-radius:12px"></div>
<div class="t" style="top:1308.56px;font:400 15px/15px 'Liberation Sans', sans-serif;color:#2dd4bf;left:960.70px;width:1000px;text-align:center;-webkit-text-stroke:0.2px #2dd4bf">1.0 BOE</div>
<div class="b" style="left:1511.00px;top:1304.16px;width:66.50px;height:23.70px;background:#163a2c;border-radius:12px"></div>
<div class="t" style="top:1308.56px;font:400 15px/15px 'Liberation Sans', sans-serif;color:#4ade80;left:1044.25px;width:1000px;text-align:center;-webkit-text-stroke:0.2px #4ade80">$165/d</div>
<div class="b" style="left:1592.00px;top:1304.16px;width:85.00px;height:23.70px;background:#47202a;border-radius:12px"></div>
<div class="t" style="top:1308.56px;font:400 15px/15px 'Liberation Sans', sans-serif;color:#f87171;left:1134.50px;width:1000px;text-align:center;-webkit-text-stroke:0.2px #f87171">Escalated</div>
<div class="b" style="left:1691.80px;top:1304.16px;width:46.80px;height:23.70px;background:#47202a;border-radius:12px"></div>
<svg class="b" style="left:1702.30px;top:1307.86px" width="14.50" height="14.50" viewBox="0 0 24 24" fill="none" stroke="#f87171" stroke-width="2" stroke-linecap="round" stroke-linejoin="round"><path d="M4 15s1-1 4-1 5 2 8 2 4-1 4-1V3s-1 1-4 1-5-2-8-2-4 1-4 1z"/><line x1="4" x2="4" y1="22" y2="15"/></svg>
<div class="t" style="top:1308.51px;font:400 15.5px/15.5px 'Liberation Sans', sans-serif;color:#f87171;right:794.90px;-webkit-text-stroke:0.3px #f87171">2</div>
<div class="t" style="top:1308.56px;font:400 15px/15px 'Liberation Sans', sans-serif;color:#d1d5db;right:655.80px;">Garrett S.</div>
<svg class="b" style="left:1899.00px;top:1306.46px" width="18.00" height="18.00" viewBox="0 0 24 24" fill="none" stroke="#f87171" stroke-width="2" stroke-linecap="round" stroke-linejoin="round"><path d="m5 12 7-7 7 7"/><path d="M12 19V5"/></svg>
<svg class="b" style="left:1935.00px;top:1306.46px" width="18.00" height="18.00" viewBox="0 0 24 24" fill="none" stroke="#c084fc" stroke-width="2" stroke-linecap="round" stroke-linejoin="round"><rect x="14" y="4" width="4" height="16" rx="1"/><rect x="6" y="4" width="4" height="16" rx="1"/></svg>
<svg class="b" style="left:1971.00px;top:1306.46px" width="18.00" height="18.00" viewBox="0 0 24 24" fill="none" stroke="#60a5fa" stroke-width="2" stroke-linecap="round" stroke-linejoin="round"><path d="M3 12a9 9 0 0 1 9-9 9.75 9.75 0 0 1 6.74 2.74L21 8"/><path d="M21 3v5h-5"/><path d="M21 12a9 9 0 0 1-9 9 9.75 9.75 0 0 1-6.74-2.74L3 16"/><path d="M8 16H3v5"/></svg>
<svg class="b" style="left:2006.00px;top:1306.46px" width="18.00" height="18.00" viewBox="0 0 24 24" fill="none" stroke="#2dd4bf" stroke-width="2" stroke-linecap="round" stroke-linejoin="round"><path d="M21 15a2 2 0 0 1-2 2H7l-4 4V5a2 2 0 0 1 2-2h14a2 2 0 0 1 2 2z"/></svg>
<svg class="b" style="left:2042.00px;top:1306.46px" width="18.00" height="18.00" viewBox="0 0 24 24" fill="none" stroke="#4ade80" stroke-width="2" stroke-linecap="round" stroke-linejoin="round"><path d="M20 6 9 17l-5-5"/></svg>
<div class="b" style="left:393.00px;top:1357.47px;width:1695.00px;height:60.80px;background:#1a2130;border:1px solid #2d3645;border-radius:10px;box-sizing:border-box"></div>
</body></html>
